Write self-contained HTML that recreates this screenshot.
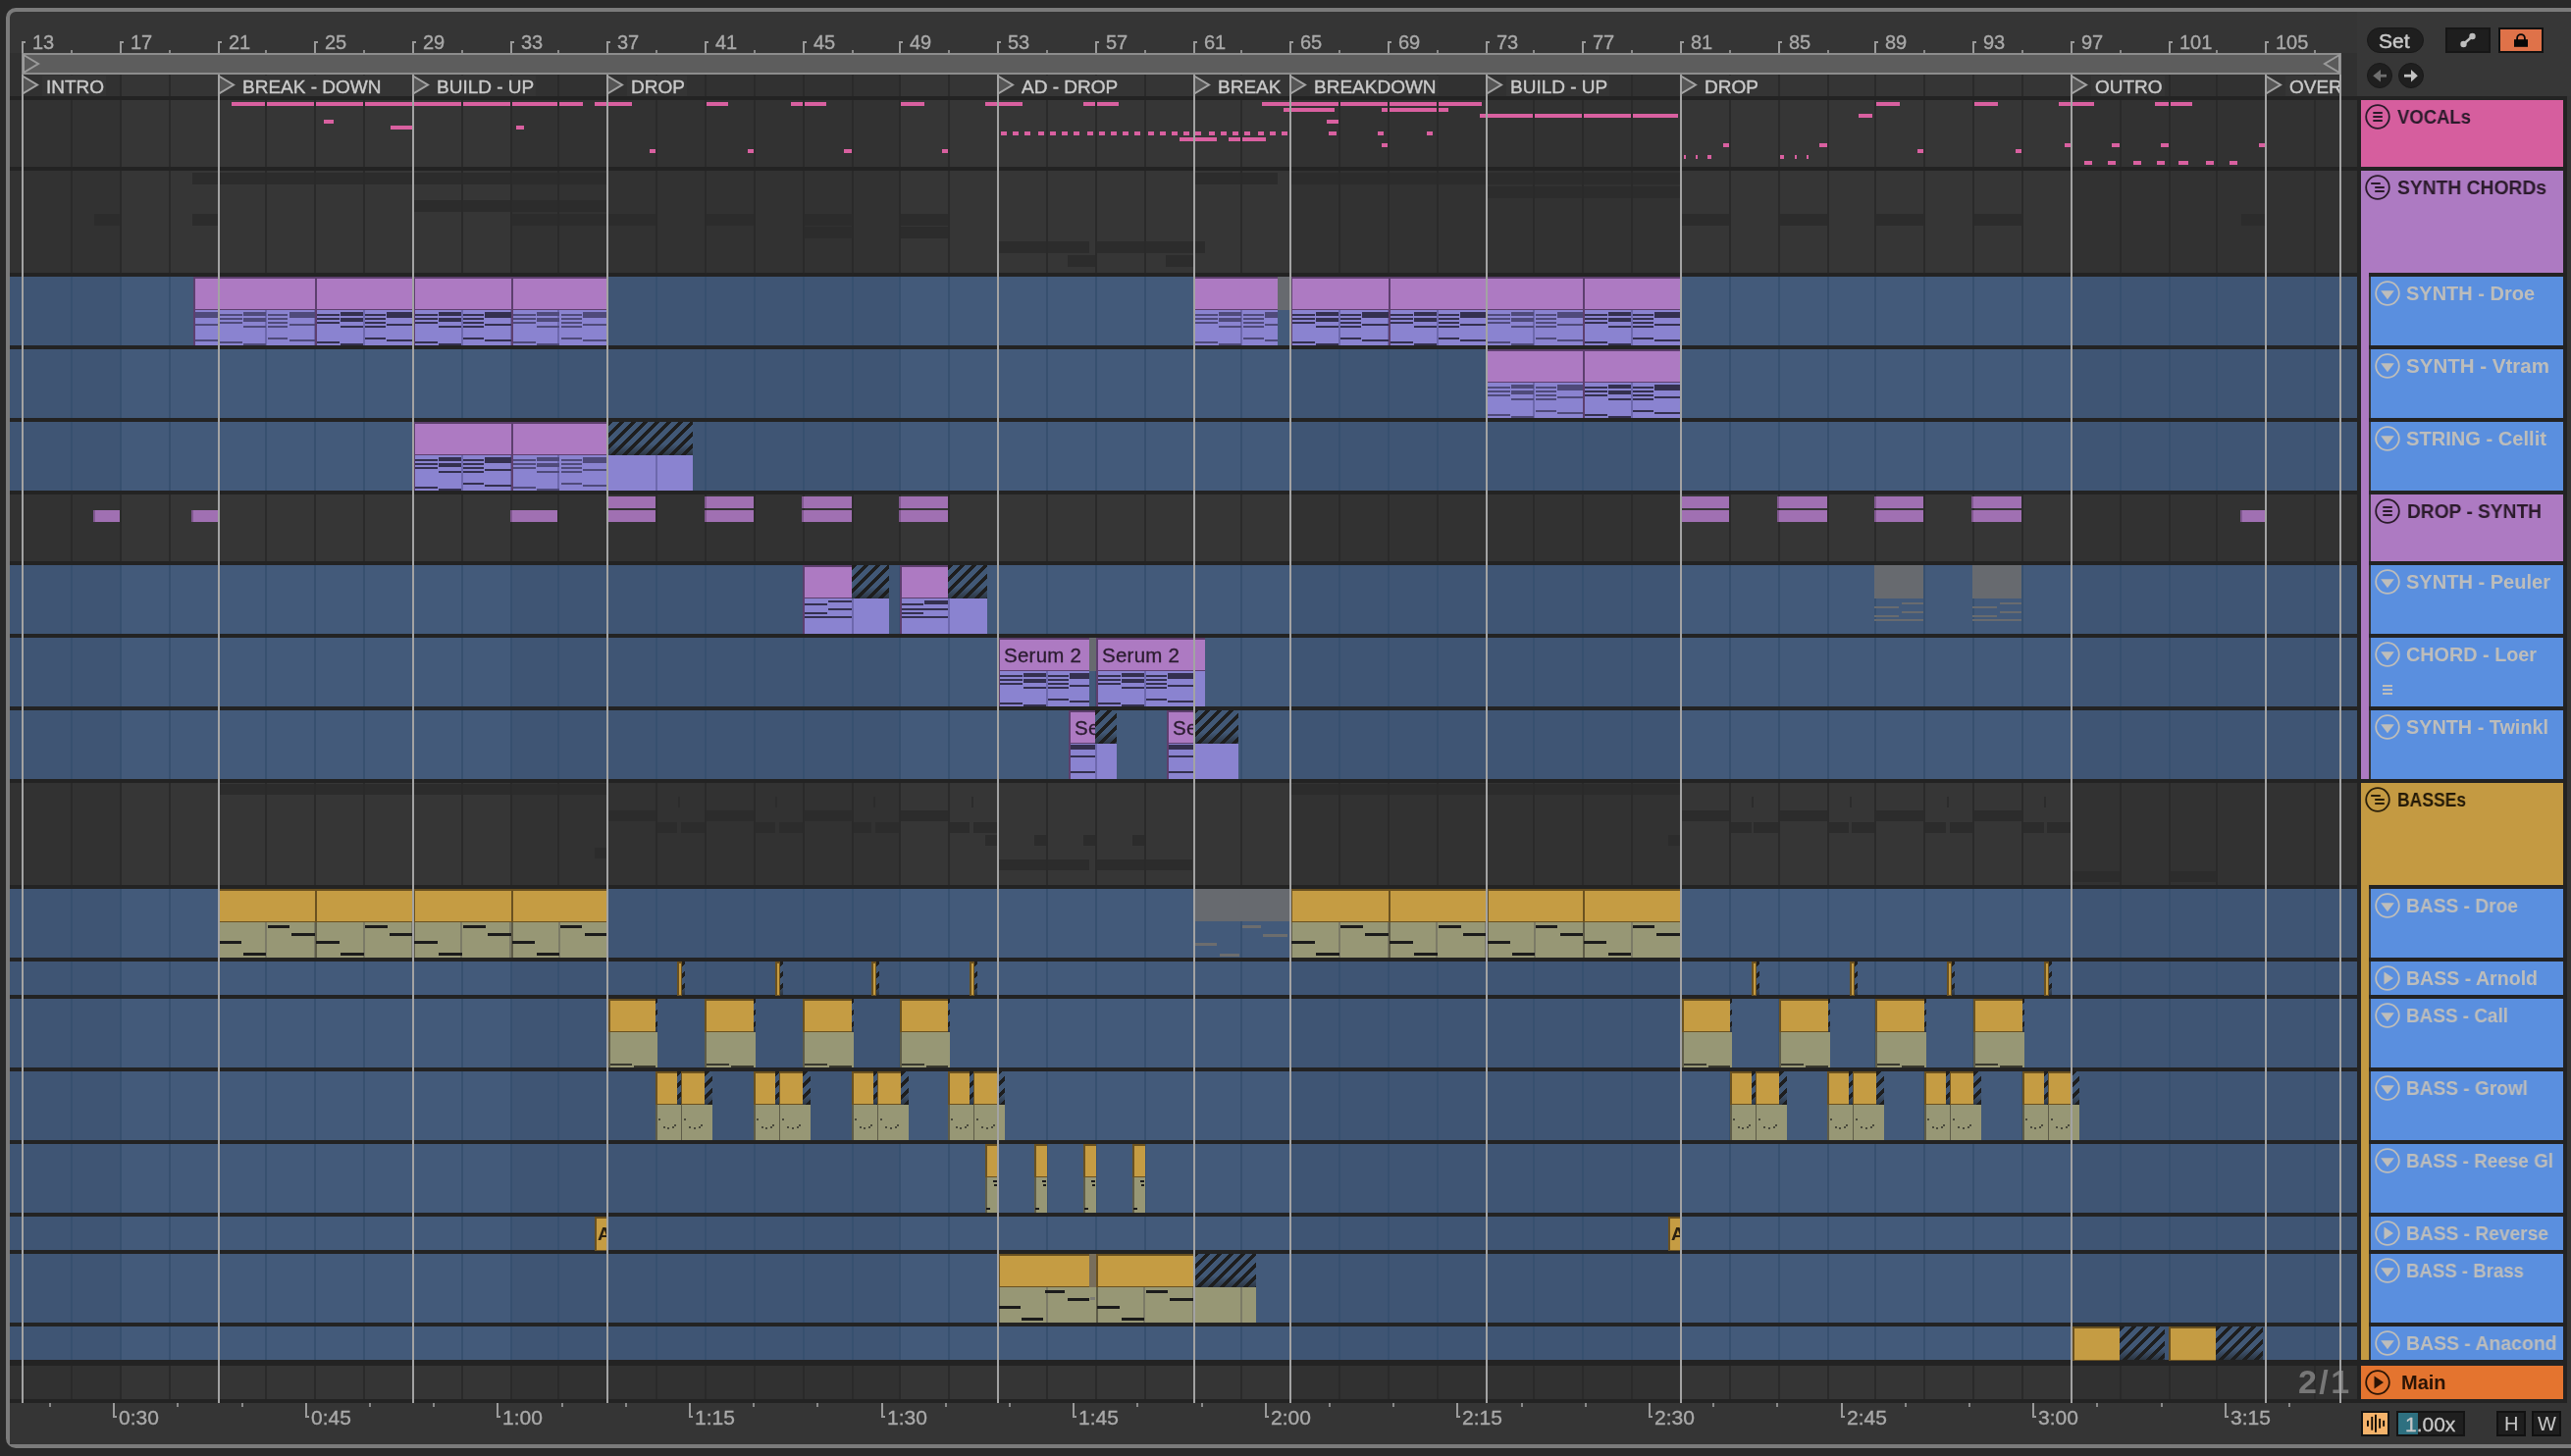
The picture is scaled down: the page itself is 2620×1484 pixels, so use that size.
<!DOCTYPE html><html><head><meta charset="utf-8"><style>html,body{margin:0;padding:0;width:2620px;height:1484px;overflow:hidden;background:#292929;}#root{position:relative;width:2620px;height:1484px;overflow:hidden;font-family:"Liberation Sans",sans-serif;}#root div,#root span,#root svg{position:absolute;}#root span{white-space:nowrap;line-height:1;will-change:transform;}.h{background:repeating-linear-gradient(135deg,#1e1e1e 0 4.3px,#415876 4.3px 8.5px);}</style></head><body><div id="root">
<div style="left:6px;top:8px;width:2634px;height:1468px;background:#353535;box-sizing:border-box;border:4px solid #7b7b7b;border-radius:10px;"></div>
<div style="left:10px;top:54px;width:12px;height:44px;background:#303030;"></div>
<div style="left:22px;top:76px;width:2380px;height:22px;background:#333333;"></div>
<div style="left:22px;top:76px;width:100px;height:22px;background:#313131;"></div>
<div style="left:122px;top:76px;width:398px;height:22px;background:#353535;"></div>
<div style="left:520px;top:76px;width:396px;height:22px;background:#313131;"></div>
<div style="left:916px;top:76px;width:398px;height:22px;background:#353535;"></div>
<div style="left:1314px;top:76px;width:398px;height:22px;background:#313131;"></div>
<div style="left:1712px;top:76px;width:398px;height:22px;background:#353535;"></div>
<div style="left:2110px;top:76px;width:292px;height:22px;background:#313131;"></div>
<div style="left:2386px;top:54px;width:16px;height:44px;background:#313131;"></div>
<div style="left:2402px;top:12px;width:218px;height:86px;background:#373737;"></div>
<div style="left:10px;top:98px;width:2610px;height:4px;background:#232323;"></div>
<div style="left:10px;top:102px;width:112px;height:68px;background:#323232;"></div>
<div style="left:122px;top:102px;width:398px;height:68px;background:#363636;"></div>
<div style="left:520px;top:102px;width:396px;height:68px;background:#323232;"></div>
<div style="left:916px;top:102px;width:398px;height:68px;background:#363636;"></div>
<div style="left:1314px;top:102px;width:398px;height:68px;background:#323232;"></div>
<div style="left:1712px;top:102px;width:398px;height:68px;background:#363636;"></div>
<div style="left:2110px;top:102px;width:292px;height:68px;background:#323232;"></div>
<div style="left:10px;top:174px;width:112px;height:104px;background:#323232;"></div>
<div style="left:122px;top:174px;width:398px;height:104px;background:#363636;"></div>
<div style="left:520px;top:174px;width:396px;height:104px;background:#323232;"></div>
<div style="left:916px;top:174px;width:398px;height:104px;background:#363636;"></div>
<div style="left:1314px;top:174px;width:398px;height:104px;background:#323232;"></div>
<div style="left:1712px;top:174px;width:398px;height:104px;background:#363636;"></div>
<div style="left:2110px;top:174px;width:292px;height:104px;background:#323232;"></div>
<div style="left:10px;top:282px;width:112px;height:70px;background:#3f5574;"></div>
<div style="left:122px;top:282px;width:398px;height:70px;background:#435a7a;"></div>
<div style="left:520px;top:282px;width:396px;height:70px;background:#3f5574;"></div>
<div style="left:916px;top:282px;width:398px;height:70px;background:#435a7a;"></div>
<div style="left:1314px;top:282px;width:398px;height:70px;background:#3f5574;"></div>
<div style="left:1712px;top:282px;width:398px;height:70px;background:#435a7a;"></div>
<div style="left:2110px;top:282px;width:292px;height:70px;background:#3f5574;"></div>
<div style="left:10px;top:356px;width:112px;height:70px;background:#3f5574;"></div>
<div style="left:122px;top:356px;width:398px;height:70px;background:#435a7a;"></div>
<div style="left:520px;top:356px;width:396px;height:70px;background:#3f5574;"></div>
<div style="left:916px;top:356px;width:398px;height:70px;background:#435a7a;"></div>
<div style="left:1314px;top:356px;width:398px;height:70px;background:#3f5574;"></div>
<div style="left:1712px;top:356px;width:398px;height:70px;background:#435a7a;"></div>
<div style="left:2110px;top:356px;width:292px;height:70px;background:#3f5574;"></div>
<div style="left:10px;top:430px;width:112px;height:70px;background:#3f5574;"></div>
<div style="left:122px;top:430px;width:398px;height:70px;background:#435a7a;"></div>
<div style="left:520px;top:430px;width:396px;height:70px;background:#3f5574;"></div>
<div style="left:916px;top:430px;width:398px;height:70px;background:#435a7a;"></div>
<div style="left:1314px;top:430px;width:398px;height:70px;background:#3f5574;"></div>
<div style="left:1712px;top:430px;width:398px;height:70px;background:#435a7a;"></div>
<div style="left:2110px;top:430px;width:292px;height:70px;background:#3f5574;"></div>
<div style="left:10px;top:504px;width:112px;height:68px;background:#323232;"></div>
<div style="left:122px;top:504px;width:398px;height:68px;background:#363636;"></div>
<div style="left:520px;top:504px;width:396px;height:68px;background:#323232;"></div>
<div style="left:916px;top:504px;width:398px;height:68px;background:#363636;"></div>
<div style="left:1314px;top:504px;width:398px;height:68px;background:#323232;"></div>
<div style="left:1712px;top:504px;width:398px;height:68px;background:#363636;"></div>
<div style="left:2110px;top:504px;width:292px;height:68px;background:#323232;"></div>
<div style="left:10px;top:576px;width:112px;height:70px;background:#3f5574;"></div>
<div style="left:122px;top:576px;width:398px;height:70px;background:#435a7a;"></div>
<div style="left:520px;top:576px;width:396px;height:70px;background:#3f5574;"></div>
<div style="left:916px;top:576px;width:398px;height:70px;background:#435a7a;"></div>
<div style="left:1314px;top:576px;width:398px;height:70px;background:#3f5574;"></div>
<div style="left:1712px;top:576px;width:398px;height:70px;background:#435a7a;"></div>
<div style="left:2110px;top:576px;width:292px;height:70px;background:#3f5574;"></div>
<div style="left:10px;top:650px;width:112px;height:70px;background:#3f5574;"></div>
<div style="left:122px;top:650px;width:398px;height:70px;background:#435a7a;"></div>
<div style="left:520px;top:650px;width:396px;height:70px;background:#3f5574;"></div>
<div style="left:916px;top:650px;width:398px;height:70px;background:#435a7a;"></div>
<div style="left:1314px;top:650px;width:398px;height:70px;background:#3f5574;"></div>
<div style="left:1712px;top:650px;width:398px;height:70px;background:#435a7a;"></div>
<div style="left:2110px;top:650px;width:292px;height:70px;background:#3f5574;"></div>
<div style="left:10px;top:724px;width:112px;height:70px;background:#3f5574;"></div>
<div style="left:122px;top:724px;width:398px;height:70px;background:#435a7a;"></div>
<div style="left:520px;top:724px;width:396px;height:70px;background:#3f5574;"></div>
<div style="left:916px;top:724px;width:398px;height:70px;background:#435a7a;"></div>
<div style="left:1314px;top:724px;width:398px;height:70px;background:#3f5574;"></div>
<div style="left:1712px;top:724px;width:398px;height:70px;background:#435a7a;"></div>
<div style="left:2110px;top:724px;width:292px;height:70px;background:#3f5574;"></div>
<div style="left:10px;top:798px;width:112px;height:104px;background:#323232;"></div>
<div style="left:122px;top:798px;width:398px;height:104px;background:#363636;"></div>
<div style="left:520px;top:798px;width:396px;height:104px;background:#323232;"></div>
<div style="left:916px;top:798px;width:398px;height:104px;background:#363636;"></div>
<div style="left:1314px;top:798px;width:398px;height:104px;background:#323232;"></div>
<div style="left:1712px;top:798px;width:398px;height:104px;background:#363636;"></div>
<div style="left:2110px;top:798px;width:292px;height:104px;background:#323232;"></div>
<div style="left:10px;top:906px;width:112px;height:70px;background:#3f5574;"></div>
<div style="left:122px;top:906px;width:398px;height:70px;background:#435a7a;"></div>
<div style="left:520px;top:906px;width:396px;height:70px;background:#3f5574;"></div>
<div style="left:916px;top:906px;width:398px;height:70px;background:#435a7a;"></div>
<div style="left:1314px;top:906px;width:398px;height:70px;background:#3f5574;"></div>
<div style="left:1712px;top:906px;width:398px;height:70px;background:#435a7a;"></div>
<div style="left:2110px;top:906px;width:292px;height:70px;background:#3f5574;"></div>
<div style="left:10px;top:980px;width:112px;height:34px;background:#3f5574;"></div>
<div style="left:122px;top:980px;width:398px;height:34px;background:#435a7a;"></div>
<div style="left:520px;top:980px;width:396px;height:34px;background:#3f5574;"></div>
<div style="left:916px;top:980px;width:398px;height:34px;background:#435a7a;"></div>
<div style="left:1314px;top:980px;width:398px;height:34px;background:#3f5574;"></div>
<div style="left:1712px;top:980px;width:398px;height:34px;background:#435a7a;"></div>
<div style="left:2110px;top:980px;width:292px;height:34px;background:#3f5574;"></div>
<div style="left:10px;top:1018px;width:112px;height:70px;background:#3f5574;"></div>
<div style="left:122px;top:1018px;width:398px;height:70px;background:#435a7a;"></div>
<div style="left:520px;top:1018px;width:396px;height:70px;background:#3f5574;"></div>
<div style="left:916px;top:1018px;width:398px;height:70px;background:#435a7a;"></div>
<div style="left:1314px;top:1018px;width:398px;height:70px;background:#3f5574;"></div>
<div style="left:1712px;top:1018px;width:398px;height:70px;background:#435a7a;"></div>
<div style="left:2110px;top:1018px;width:292px;height:70px;background:#3f5574;"></div>
<div style="left:10px;top:1092px;width:112px;height:70px;background:#3f5574;"></div>
<div style="left:122px;top:1092px;width:398px;height:70px;background:#435a7a;"></div>
<div style="left:520px;top:1092px;width:396px;height:70px;background:#3f5574;"></div>
<div style="left:916px;top:1092px;width:398px;height:70px;background:#435a7a;"></div>
<div style="left:1314px;top:1092px;width:398px;height:70px;background:#3f5574;"></div>
<div style="left:1712px;top:1092px;width:398px;height:70px;background:#435a7a;"></div>
<div style="left:2110px;top:1092px;width:292px;height:70px;background:#3f5574;"></div>
<div style="left:10px;top:1166px;width:112px;height:70px;background:#3f5574;"></div>
<div style="left:122px;top:1166px;width:398px;height:70px;background:#435a7a;"></div>
<div style="left:520px;top:1166px;width:396px;height:70px;background:#3f5574;"></div>
<div style="left:916px;top:1166px;width:398px;height:70px;background:#435a7a;"></div>
<div style="left:1314px;top:1166px;width:398px;height:70px;background:#3f5574;"></div>
<div style="left:1712px;top:1166px;width:398px;height:70px;background:#435a7a;"></div>
<div style="left:2110px;top:1166px;width:292px;height:70px;background:#3f5574;"></div>
<div style="left:10px;top:1240px;width:112px;height:34px;background:#3f5574;"></div>
<div style="left:122px;top:1240px;width:398px;height:34px;background:#435a7a;"></div>
<div style="left:520px;top:1240px;width:396px;height:34px;background:#3f5574;"></div>
<div style="left:916px;top:1240px;width:398px;height:34px;background:#435a7a;"></div>
<div style="left:1314px;top:1240px;width:398px;height:34px;background:#3f5574;"></div>
<div style="left:1712px;top:1240px;width:398px;height:34px;background:#435a7a;"></div>
<div style="left:2110px;top:1240px;width:292px;height:34px;background:#3f5574;"></div>
<div style="left:10px;top:1278px;width:112px;height:70px;background:#3f5574;"></div>
<div style="left:122px;top:1278px;width:398px;height:70px;background:#435a7a;"></div>
<div style="left:520px;top:1278px;width:396px;height:70px;background:#3f5574;"></div>
<div style="left:916px;top:1278px;width:398px;height:70px;background:#435a7a;"></div>
<div style="left:1314px;top:1278px;width:398px;height:70px;background:#3f5574;"></div>
<div style="left:1712px;top:1278px;width:398px;height:70px;background:#435a7a;"></div>
<div style="left:2110px;top:1278px;width:292px;height:70px;background:#3f5574;"></div>
<div style="left:10px;top:1352px;width:112px;height:34px;background:#3f5574;"></div>
<div style="left:122px;top:1352px;width:398px;height:34px;background:#435a7a;"></div>
<div style="left:520px;top:1352px;width:396px;height:34px;background:#3f5574;"></div>
<div style="left:916px;top:1352px;width:398px;height:34px;background:#435a7a;"></div>
<div style="left:1314px;top:1352px;width:398px;height:34px;background:#3f5574;"></div>
<div style="left:1712px;top:1352px;width:398px;height:34px;background:#435a7a;"></div>
<div style="left:2110px;top:1352px;width:292px;height:34px;background:#3f5574;"></div>
<div style="left:10px;top:170px;width:2610px;height:4px;background:#232323;"></div>
<div style="left:10px;top:278px;width:2610px;height:4px;background:#232323;"></div>
<div style="left:10px;top:352px;width:2610px;height:4px;background:#232323;"></div>
<div style="left:10px;top:426px;width:2610px;height:4px;background:#232323;"></div>
<div style="left:10px;top:500px;width:2610px;height:4px;background:#232323;"></div>
<div style="left:10px;top:572px;width:2610px;height:4px;background:#232323;"></div>
<div style="left:10px;top:646px;width:2610px;height:4px;background:#232323;"></div>
<div style="left:10px;top:720px;width:2610px;height:4px;background:#232323;"></div>
<div style="left:10px;top:794px;width:2610px;height:4px;background:#232323;"></div>
<div style="left:10px;top:902px;width:2610px;height:4px;background:#232323;"></div>
<div style="left:10px;top:976px;width:2610px;height:4px;background:#232323;"></div>
<div style="left:10px;top:1014px;width:2610px;height:4px;background:#232323;"></div>
<div style="left:10px;top:1088px;width:2610px;height:4px;background:#232323;"></div>
<div style="left:10px;top:1162px;width:2610px;height:4px;background:#232323;"></div>
<div style="left:10px;top:1236px;width:2610px;height:4px;background:#232323;"></div>
<div style="left:10px;top:1274px;width:2610px;height:4px;background:#232323;"></div>
<div style="left:10px;top:1348px;width:2610px;height:4px;background:#232323;"></div>
<div style="left:10px;top:1386px;width:2610px;height:6px;background:#232323;"></div>
<div style="left:10px;top:1392px;width:112px;height:34px;background:#313131;"></div>
<div style="left:122px;top:1392px;width:398px;height:34px;background:#353535;"></div>
<div style="left:520px;top:1392px;width:396px;height:34px;background:#313131;"></div>
<div style="left:916px;top:1392px;width:398px;height:34px;background:#353535;"></div>
<div style="left:1314px;top:1392px;width:398px;height:34px;background:#313131;"></div>
<div style="left:1712px;top:1392px;width:398px;height:34px;background:#353535;"></div>
<div style="left:2110px;top:1392px;width:292px;height:34px;background:#313131;"></div>
<div style="left:10px;top:1426px;width:2610px;height:4px;background:#232323;"></div>
<div style="left:2402px;top:98px;width:4px;height:1332px;background:#232323;"></div>
<div style="left:2612px;top:98px;width:4px;height:1332px;background:#232323;"></div>
<div style="left:2616px;top:98px;width:4px;height:1332px;background:#353535;"></div>
<div style="left:22px;top:76px;width:2px;height:22px;background:#2a2a2a;"></div>
<div style="left:72px;top:76px;width:2px;height:22px;background:#2a2a2a;"></div>
<div style="left:122px;top:76px;width:2px;height:22px;background:#2a2a2a;"></div>
<div style="left:172px;top:76px;width:2px;height:22px;background:#2a2a2a;"></div>
<div style="left:222px;top:76px;width:2px;height:22px;background:#2a2a2a;"></div>
<div style="left:270px;top:76px;width:2px;height:22px;background:#2a2a2a;"></div>
<div style="left:320px;top:76px;width:2px;height:22px;background:#2a2a2a;"></div>
<div style="left:370px;top:76px;width:2px;height:22px;background:#2a2a2a;"></div>
<div style="left:420px;top:76px;width:2px;height:22px;background:#2a2a2a;"></div>
<div style="left:470px;top:76px;width:2px;height:22px;background:#2a2a2a;"></div>
<div style="left:520px;top:76px;width:2px;height:22px;background:#2a2a2a;"></div>
<div style="left:568px;top:76px;width:2px;height:22px;background:#2a2a2a;"></div>
<div style="left:618px;top:76px;width:2px;height:22px;background:#2a2a2a;"></div>
<div style="left:668px;top:76px;width:2px;height:22px;background:#2a2a2a;"></div>
<div style="left:718px;top:76px;width:2px;height:22px;background:#2a2a2a;"></div>
<div style="left:768px;top:76px;width:2px;height:22px;background:#2a2a2a;"></div>
<div style="left:818px;top:76px;width:2px;height:22px;background:#2a2a2a;"></div>
<div style="left:868px;top:76px;width:2px;height:22px;background:#2a2a2a;"></div>
<div style="left:916px;top:76px;width:2px;height:22px;background:#2a2a2a;"></div>
<div style="left:966px;top:76px;width:2px;height:22px;background:#2a2a2a;"></div>
<div style="left:1016px;top:76px;width:2px;height:22px;background:#2a2a2a;"></div>
<div style="left:1066px;top:76px;width:2px;height:22px;background:#2a2a2a;"></div>
<div style="left:1116px;top:76px;width:2px;height:22px;background:#2a2a2a;"></div>
<div style="left:1166px;top:76px;width:2px;height:22px;background:#2a2a2a;"></div>
<div style="left:1216px;top:76px;width:2px;height:22px;background:#2a2a2a;"></div>
<div style="left:1264px;top:76px;width:2px;height:22px;background:#2a2a2a;"></div>
<div style="left:1314px;top:76px;width:2px;height:22px;background:#2a2a2a;"></div>
<div style="left:1364px;top:76px;width:2px;height:22px;background:#2a2a2a;"></div>
<div style="left:1414px;top:76px;width:2px;height:22px;background:#2a2a2a;"></div>
<div style="left:1464px;top:76px;width:2px;height:22px;background:#2a2a2a;"></div>
<div style="left:1514px;top:76px;width:2px;height:22px;background:#2a2a2a;"></div>
<div style="left:1562px;top:76px;width:2px;height:22px;background:#2a2a2a;"></div>
<div style="left:1612px;top:76px;width:2px;height:22px;background:#2a2a2a;"></div>
<div style="left:1662px;top:76px;width:2px;height:22px;background:#2a2a2a;"></div>
<div style="left:1712px;top:76px;width:2px;height:22px;background:#2a2a2a;"></div>
<div style="left:1762px;top:76px;width:2px;height:22px;background:#2a2a2a;"></div>
<div style="left:1812px;top:76px;width:2px;height:22px;background:#2a2a2a;"></div>
<div style="left:1862px;top:76px;width:2px;height:22px;background:#2a2a2a;"></div>
<div style="left:1910px;top:76px;width:2px;height:22px;background:#2a2a2a;"></div>
<div style="left:1960px;top:76px;width:2px;height:22px;background:#2a2a2a;"></div>
<div style="left:2010px;top:76px;width:2px;height:22px;background:#2a2a2a;"></div>
<div style="left:2060px;top:76px;width:2px;height:22px;background:#2a2a2a;"></div>
<div style="left:2110px;top:76px;width:2px;height:22px;background:#2a2a2a;"></div>
<div style="left:2160px;top:76px;width:2px;height:22px;background:#2a2a2a;"></div>
<div style="left:2210px;top:76px;width:2px;height:22px;background:#2a2a2a;"></div>
<div style="left:2258px;top:76px;width:2px;height:22px;background:#2a2a2a;"></div>
<div style="left:2308px;top:76px;width:2px;height:22px;background:#2a2a2a;"></div>
<div style="left:2358px;top:76px;width:2px;height:22px;background:#2a2a2a;"></div>
<div style="left:22px;top:282px;width:2px;height:70px;background:#37506f;"></div>
<div style="left:72px;top:282px;width:2px;height:70px;background:#37506f;"></div>
<div style="left:122px;top:282px;width:2px;height:70px;background:#37506f;"></div>
<div style="left:172px;top:282px;width:2px;height:70px;background:#37506f;"></div>
<div style="left:222px;top:282px;width:2px;height:70px;background:#37506f;"></div>
<div style="left:270px;top:282px;width:2px;height:70px;background:#37506f;"></div>
<div style="left:320px;top:282px;width:2px;height:70px;background:#37506f;"></div>
<div style="left:370px;top:282px;width:2px;height:70px;background:#37506f;"></div>
<div style="left:420px;top:282px;width:2px;height:70px;background:#37506f;"></div>
<div style="left:470px;top:282px;width:2px;height:70px;background:#37506f;"></div>
<div style="left:520px;top:282px;width:2px;height:70px;background:#37506f;"></div>
<div style="left:568px;top:282px;width:2px;height:70px;background:#37506f;"></div>
<div style="left:618px;top:282px;width:2px;height:70px;background:#37506f;"></div>
<div style="left:668px;top:282px;width:2px;height:70px;background:#37506f;"></div>
<div style="left:718px;top:282px;width:2px;height:70px;background:#37506f;"></div>
<div style="left:768px;top:282px;width:2px;height:70px;background:#37506f;"></div>
<div style="left:818px;top:282px;width:2px;height:70px;background:#37506f;"></div>
<div style="left:868px;top:282px;width:2px;height:70px;background:#37506f;"></div>
<div style="left:916px;top:282px;width:2px;height:70px;background:#37506f;"></div>
<div style="left:966px;top:282px;width:2px;height:70px;background:#37506f;"></div>
<div style="left:1016px;top:282px;width:2px;height:70px;background:#37506f;"></div>
<div style="left:1066px;top:282px;width:2px;height:70px;background:#37506f;"></div>
<div style="left:1116px;top:282px;width:2px;height:70px;background:#37506f;"></div>
<div style="left:1166px;top:282px;width:2px;height:70px;background:#37506f;"></div>
<div style="left:1216px;top:282px;width:2px;height:70px;background:#37506f;"></div>
<div style="left:1264px;top:282px;width:2px;height:70px;background:#37506f;"></div>
<div style="left:1314px;top:282px;width:2px;height:70px;background:#37506f;"></div>
<div style="left:1364px;top:282px;width:2px;height:70px;background:#37506f;"></div>
<div style="left:1414px;top:282px;width:2px;height:70px;background:#37506f;"></div>
<div style="left:1464px;top:282px;width:2px;height:70px;background:#37506f;"></div>
<div style="left:1514px;top:282px;width:2px;height:70px;background:#37506f;"></div>
<div style="left:1562px;top:282px;width:2px;height:70px;background:#37506f;"></div>
<div style="left:1612px;top:282px;width:2px;height:70px;background:#37506f;"></div>
<div style="left:1662px;top:282px;width:2px;height:70px;background:#37506f;"></div>
<div style="left:1712px;top:282px;width:2px;height:70px;background:#37506f;"></div>
<div style="left:1762px;top:282px;width:2px;height:70px;background:#37506f;"></div>
<div style="left:1812px;top:282px;width:2px;height:70px;background:#37506f;"></div>
<div style="left:1862px;top:282px;width:2px;height:70px;background:#37506f;"></div>
<div style="left:1910px;top:282px;width:2px;height:70px;background:#37506f;"></div>
<div style="left:1960px;top:282px;width:2px;height:70px;background:#37506f;"></div>
<div style="left:2010px;top:282px;width:2px;height:70px;background:#37506f;"></div>
<div style="left:2060px;top:282px;width:2px;height:70px;background:#37506f;"></div>
<div style="left:2110px;top:282px;width:2px;height:70px;background:#37506f;"></div>
<div style="left:2160px;top:282px;width:2px;height:70px;background:#37506f;"></div>
<div style="left:2210px;top:282px;width:2px;height:70px;background:#37506f;"></div>
<div style="left:2258px;top:282px;width:2px;height:70px;background:#37506f;"></div>
<div style="left:2308px;top:282px;width:2px;height:70px;background:#37506f;"></div>
<div style="left:2358px;top:282px;width:2px;height:70px;background:#37506f;"></div>
<div style="left:22px;top:356px;width:2px;height:70px;background:#37506f;"></div>
<div style="left:72px;top:356px;width:2px;height:70px;background:#37506f;"></div>
<div style="left:122px;top:356px;width:2px;height:70px;background:#37506f;"></div>
<div style="left:172px;top:356px;width:2px;height:70px;background:#37506f;"></div>
<div style="left:222px;top:356px;width:2px;height:70px;background:#37506f;"></div>
<div style="left:270px;top:356px;width:2px;height:70px;background:#37506f;"></div>
<div style="left:320px;top:356px;width:2px;height:70px;background:#37506f;"></div>
<div style="left:370px;top:356px;width:2px;height:70px;background:#37506f;"></div>
<div style="left:420px;top:356px;width:2px;height:70px;background:#37506f;"></div>
<div style="left:470px;top:356px;width:2px;height:70px;background:#37506f;"></div>
<div style="left:520px;top:356px;width:2px;height:70px;background:#37506f;"></div>
<div style="left:568px;top:356px;width:2px;height:70px;background:#37506f;"></div>
<div style="left:618px;top:356px;width:2px;height:70px;background:#37506f;"></div>
<div style="left:668px;top:356px;width:2px;height:70px;background:#37506f;"></div>
<div style="left:718px;top:356px;width:2px;height:70px;background:#37506f;"></div>
<div style="left:768px;top:356px;width:2px;height:70px;background:#37506f;"></div>
<div style="left:818px;top:356px;width:2px;height:70px;background:#37506f;"></div>
<div style="left:868px;top:356px;width:2px;height:70px;background:#37506f;"></div>
<div style="left:916px;top:356px;width:2px;height:70px;background:#37506f;"></div>
<div style="left:966px;top:356px;width:2px;height:70px;background:#37506f;"></div>
<div style="left:1016px;top:356px;width:2px;height:70px;background:#37506f;"></div>
<div style="left:1066px;top:356px;width:2px;height:70px;background:#37506f;"></div>
<div style="left:1116px;top:356px;width:2px;height:70px;background:#37506f;"></div>
<div style="left:1166px;top:356px;width:2px;height:70px;background:#37506f;"></div>
<div style="left:1216px;top:356px;width:2px;height:70px;background:#37506f;"></div>
<div style="left:1264px;top:356px;width:2px;height:70px;background:#37506f;"></div>
<div style="left:1314px;top:356px;width:2px;height:70px;background:#37506f;"></div>
<div style="left:1364px;top:356px;width:2px;height:70px;background:#37506f;"></div>
<div style="left:1414px;top:356px;width:2px;height:70px;background:#37506f;"></div>
<div style="left:1464px;top:356px;width:2px;height:70px;background:#37506f;"></div>
<div style="left:1514px;top:356px;width:2px;height:70px;background:#37506f;"></div>
<div style="left:1562px;top:356px;width:2px;height:70px;background:#37506f;"></div>
<div style="left:1612px;top:356px;width:2px;height:70px;background:#37506f;"></div>
<div style="left:1662px;top:356px;width:2px;height:70px;background:#37506f;"></div>
<div style="left:1712px;top:356px;width:2px;height:70px;background:#37506f;"></div>
<div style="left:1762px;top:356px;width:2px;height:70px;background:#37506f;"></div>
<div style="left:1812px;top:356px;width:2px;height:70px;background:#37506f;"></div>
<div style="left:1862px;top:356px;width:2px;height:70px;background:#37506f;"></div>
<div style="left:1910px;top:356px;width:2px;height:70px;background:#37506f;"></div>
<div style="left:1960px;top:356px;width:2px;height:70px;background:#37506f;"></div>
<div style="left:2010px;top:356px;width:2px;height:70px;background:#37506f;"></div>
<div style="left:2060px;top:356px;width:2px;height:70px;background:#37506f;"></div>
<div style="left:2110px;top:356px;width:2px;height:70px;background:#37506f;"></div>
<div style="left:2160px;top:356px;width:2px;height:70px;background:#37506f;"></div>
<div style="left:2210px;top:356px;width:2px;height:70px;background:#37506f;"></div>
<div style="left:2258px;top:356px;width:2px;height:70px;background:#37506f;"></div>
<div style="left:2308px;top:356px;width:2px;height:70px;background:#37506f;"></div>
<div style="left:2358px;top:356px;width:2px;height:70px;background:#37506f;"></div>
<div style="left:22px;top:430px;width:2px;height:70px;background:#37506f;"></div>
<div style="left:72px;top:430px;width:2px;height:70px;background:#37506f;"></div>
<div style="left:122px;top:430px;width:2px;height:70px;background:#37506f;"></div>
<div style="left:172px;top:430px;width:2px;height:70px;background:#37506f;"></div>
<div style="left:222px;top:430px;width:2px;height:70px;background:#37506f;"></div>
<div style="left:270px;top:430px;width:2px;height:70px;background:#37506f;"></div>
<div style="left:320px;top:430px;width:2px;height:70px;background:#37506f;"></div>
<div style="left:370px;top:430px;width:2px;height:70px;background:#37506f;"></div>
<div style="left:420px;top:430px;width:2px;height:70px;background:#37506f;"></div>
<div style="left:470px;top:430px;width:2px;height:70px;background:#37506f;"></div>
<div style="left:520px;top:430px;width:2px;height:70px;background:#37506f;"></div>
<div style="left:568px;top:430px;width:2px;height:70px;background:#37506f;"></div>
<div style="left:618px;top:430px;width:2px;height:70px;background:#37506f;"></div>
<div style="left:668px;top:430px;width:2px;height:70px;background:#37506f;"></div>
<div style="left:718px;top:430px;width:2px;height:70px;background:#37506f;"></div>
<div style="left:768px;top:430px;width:2px;height:70px;background:#37506f;"></div>
<div style="left:818px;top:430px;width:2px;height:70px;background:#37506f;"></div>
<div style="left:868px;top:430px;width:2px;height:70px;background:#37506f;"></div>
<div style="left:916px;top:430px;width:2px;height:70px;background:#37506f;"></div>
<div style="left:966px;top:430px;width:2px;height:70px;background:#37506f;"></div>
<div style="left:1016px;top:430px;width:2px;height:70px;background:#37506f;"></div>
<div style="left:1066px;top:430px;width:2px;height:70px;background:#37506f;"></div>
<div style="left:1116px;top:430px;width:2px;height:70px;background:#37506f;"></div>
<div style="left:1166px;top:430px;width:2px;height:70px;background:#37506f;"></div>
<div style="left:1216px;top:430px;width:2px;height:70px;background:#37506f;"></div>
<div style="left:1264px;top:430px;width:2px;height:70px;background:#37506f;"></div>
<div style="left:1314px;top:430px;width:2px;height:70px;background:#37506f;"></div>
<div style="left:1364px;top:430px;width:2px;height:70px;background:#37506f;"></div>
<div style="left:1414px;top:430px;width:2px;height:70px;background:#37506f;"></div>
<div style="left:1464px;top:430px;width:2px;height:70px;background:#37506f;"></div>
<div style="left:1514px;top:430px;width:2px;height:70px;background:#37506f;"></div>
<div style="left:1562px;top:430px;width:2px;height:70px;background:#37506f;"></div>
<div style="left:1612px;top:430px;width:2px;height:70px;background:#37506f;"></div>
<div style="left:1662px;top:430px;width:2px;height:70px;background:#37506f;"></div>
<div style="left:1712px;top:430px;width:2px;height:70px;background:#37506f;"></div>
<div style="left:1762px;top:430px;width:2px;height:70px;background:#37506f;"></div>
<div style="left:1812px;top:430px;width:2px;height:70px;background:#37506f;"></div>
<div style="left:1862px;top:430px;width:2px;height:70px;background:#37506f;"></div>
<div style="left:1910px;top:430px;width:2px;height:70px;background:#37506f;"></div>
<div style="left:1960px;top:430px;width:2px;height:70px;background:#37506f;"></div>
<div style="left:2010px;top:430px;width:2px;height:70px;background:#37506f;"></div>
<div style="left:2060px;top:430px;width:2px;height:70px;background:#37506f;"></div>
<div style="left:2110px;top:430px;width:2px;height:70px;background:#37506f;"></div>
<div style="left:2160px;top:430px;width:2px;height:70px;background:#37506f;"></div>
<div style="left:2210px;top:430px;width:2px;height:70px;background:#37506f;"></div>
<div style="left:2258px;top:430px;width:2px;height:70px;background:#37506f;"></div>
<div style="left:2308px;top:430px;width:2px;height:70px;background:#37506f;"></div>
<div style="left:2358px;top:430px;width:2px;height:70px;background:#37506f;"></div>
<div style="left:22px;top:576px;width:2px;height:70px;background:#37506f;"></div>
<div style="left:72px;top:576px;width:2px;height:70px;background:#37506f;"></div>
<div style="left:122px;top:576px;width:2px;height:70px;background:#37506f;"></div>
<div style="left:172px;top:576px;width:2px;height:70px;background:#37506f;"></div>
<div style="left:222px;top:576px;width:2px;height:70px;background:#37506f;"></div>
<div style="left:270px;top:576px;width:2px;height:70px;background:#37506f;"></div>
<div style="left:320px;top:576px;width:2px;height:70px;background:#37506f;"></div>
<div style="left:370px;top:576px;width:2px;height:70px;background:#37506f;"></div>
<div style="left:420px;top:576px;width:2px;height:70px;background:#37506f;"></div>
<div style="left:470px;top:576px;width:2px;height:70px;background:#37506f;"></div>
<div style="left:520px;top:576px;width:2px;height:70px;background:#37506f;"></div>
<div style="left:568px;top:576px;width:2px;height:70px;background:#37506f;"></div>
<div style="left:618px;top:576px;width:2px;height:70px;background:#37506f;"></div>
<div style="left:668px;top:576px;width:2px;height:70px;background:#37506f;"></div>
<div style="left:718px;top:576px;width:2px;height:70px;background:#37506f;"></div>
<div style="left:768px;top:576px;width:2px;height:70px;background:#37506f;"></div>
<div style="left:818px;top:576px;width:2px;height:70px;background:#37506f;"></div>
<div style="left:868px;top:576px;width:2px;height:70px;background:#37506f;"></div>
<div style="left:916px;top:576px;width:2px;height:70px;background:#37506f;"></div>
<div style="left:966px;top:576px;width:2px;height:70px;background:#37506f;"></div>
<div style="left:1016px;top:576px;width:2px;height:70px;background:#37506f;"></div>
<div style="left:1066px;top:576px;width:2px;height:70px;background:#37506f;"></div>
<div style="left:1116px;top:576px;width:2px;height:70px;background:#37506f;"></div>
<div style="left:1166px;top:576px;width:2px;height:70px;background:#37506f;"></div>
<div style="left:1216px;top:576px;width:2px;height:70px;background:#37506f;"></div>
<div style="left:1264px;top:576px;width:2px;height:70px;background:#37506f;"></div>
<div style="left:1314px;top:576px;width:2px;height:70px;background:#37506f;"></div>
<div style="left:1364px;top:576px;width:2px;height:70px;background:#37506f;"></div>
<div style="left:1414px;top:576px;width:2px;height:70px;background:#37506f;"></div>
<div style="left:1464px;top:576px;width:2px;height:70px;background:#37506f;"></div>
<div style="left:1514px;top:576px;width:2px;height:70px;background:#37506f;"></div>
<div style="left:1562px;top:576px;width:2px;height:70px;background:#37506f;"></div>
<div style="left:1612px;top:576px;width:2px;height:70px;background:#37506f;"></div>
<div style="left:1662px;top:576px;width:2px;height:70px;background:#37506f;"></div>
<div style="left:1712px;top:576px;width:2px;height:70px;background:#37506f;"></div>
<div style="left:1762px;top:576px;width:2px;height:70px;background:#37506f;"></div>
<div style="left:1812px;top:576px;width:2px;height:70px;background:#37506f;"></div>
<div style="left:1862px;top:576px;width:2px;height:70px;background:#37506f;"></div>
<div style="left:1910px;top:576px;width:2px;height:70px;background:#37506f;"></div>
<div style="left:1960px;top:576px;width:2px;height:70px;background:#37506f;"></div>
<div style="left:2010px;top:576px;width:2px;height:70px;background:#37506f;"></div>
<div style="left:2060px;top:576px;width:2px;height:70px;background:#37506f;"></div>
<div style="left:2110px;top:576px;width:2px;height:70px;background:#37506f;"></div>
<div style="left:2160px;top:576px;width:2px;height:70px;background:#37506f;"></div>
<div style="left:2210px;top:576px;width:2px;height:70px;background:#37506f;"></div>
<div style="left:2258px;top:576px;width:2px;height:70px;background:#37506f;"></div>
<div style="left:2308px;top:576px;width:2px;height:70px;background:#37506f;"></div>
<div style="left:2358px;top:576px;width:2px;height:70px;background:#37506f;"></div>
<div style="left:22px;top:650px;width:2px;height:70px;background:#37506f;"></div>
<div style="left:72px;top:650px;width:2px;height:70px;background:#37506f;"></div>
<div style="left:122px;top:650px;width:2px;height:70px;background:#37506f;"></div>
<div style="left:172px;top:650px;width:2px;height:70px;background:#37506f;"></div>
<div style="left:222px;top:650px;width:2px;height:70px;background:#37506f;"></div>
<div style="left:270px;top:650px;width:2px;height:70px;background:#37506f;"></div>
<div style="left:320px;top:650px;width:2px;height:70px;background:#37506f;"></div>
<div style="left:370px;top:650px;width:2px;height:70px;background:#37506f;"></div>
<div style="left:420px;top:650px;width:2px;height:70px;background:#37506f;"></div>
<div style="left:470px;top:650px;width:2px;height:70px;background:#37506f;"></div>
<div style="left:520px;top:650px;width:2px;height:70px;background:#37506f;"></div>
<div style="left:568px;top:650px;width:2px;height:70px;background:#37506f;"></div>
<div style="left:618px;top:650px;width:2px;height:70px;background:#37506f;"></div>
<div style="left:668px;top:650px;width:2px;height:70px;background:#37506f;"></div>
<div style="left:718px;top:650px;width:2px;height:70px;background:#37506f;"></div>
<div style="left:768px;top:650px;width:2px;height:70px;background:#37506f;"></div>
<div style="left:818px;top:650px;width:2px;height:70px;background:#37506f;"></div>
<div style="left:868px;top:650px;width:2px;height:70px;background:#37506f;"></div>
<div style="left:916px;top:650px;width:2px;height:70px;background:#37506f;"></div>
<div style="left:966px;top:650px;width:2px;height:70px;background:#37506f;"></div>
<div style="left:1016px;top:650px;width:2px;height:70px;background:#37506f;"></div>
<div style="left:1066px;top:650px;width:2px;height:70px;background:#37506f;"></div>
<div style="left:1116px;top:650px;width:2px;height:70px;background:#37506f;"></div>
<div style="left:1166px;top:650px;width:2px;height:70px;background:#37506f;"></div>
<div style="left:1216px;top:650px;width:2px;height:70px;background:#37506f;"></div>
<div style="left:1264px;top:650px;width:2px;height:70px;background:#37506f;"></div>
<div style="left:1314px;top:650px;width:2px;height:70px;background:#37506f;"></div>
<div style="left:1364px;top:650px;width:2px;height:70px;background:#37506f;"></div>
<div style="left:1414px;top:650px;width:2px;height:70px;background:#37506f;"></div>
<div style="left:1464px;top:650px;width:2px;height:70px;background:#37506f;"></div>
<div style="left:1514px;top:650px;width:2px;height:70px;background:#37506f;"></div>
<div style="left:1562px;top:650px;width:2px;height:70px;background:#37506f;"></div>
<div style="left:1612px;top:650px;width:2px;height:70px;background:#37506f;"></div>
<div style="left:1662px;top:650px;width:2px;height:70px;background:#37506f;"></div>
<div style="left:1712px;top:650px;width:2px;height:70px;background:#37506f;"></div>
<div style="left:1762px;top:650px;width:2px;height:70px;background:#37506f;"></div>
<div style="left:1812px;top:650px;width:2px;height:70px;background:#37506f;"></div>
<div style="left:1862px;top:650px;width:2px;height:70px;background:#37506f;"></div>
<div style="left:1910px;top:650px;width:2px;height:70px;background:#37506f;"></div>
<div style="left:1960px;top:650px;width:2px;height:70px;background:#37506f;"></div>
<div style="left:2010px;top:650px;width:2px;height:70px;background:#37506f;"></div>
<div style="left:2060px;top:650px;width:2px;height:70px;background:#37506f;"></div>
<div style="left:2110px;top:650px;width:2px;height:70px;background:#37506f;"></div>
<div style="left:2160px;top:650px;width:2px;height:70px;background:#37506f;"></div>
<div style="left:2210px;top:650px;width:2px;height:70px;background:#37506f;"></div>
<div style="left:2258px;top:650px;width:2px;height:70px;background:#37506f;"></div>
<div style="left:2308px;top:650px;width:2px;height:70px;background:#37506f;"></div>
<div style="left:2358px;top:650px;width:2px;height:70px;background:#37506f;"></div>
<div style="left:22px;top:724px;width:2px;height:70px;background:#37506f;"></div>
<div style="left:72px;top:724px;width:2px;height:70px;background:#37506f;"></div>
<div style="left:122px;top:724px;width:2px;height:70px;background:#37506f;"></div>
<div style="left:172px;top:724px;width:2px;height:70px;background:#37506f;"></div>
<div style="left:222px;top:724px;width:2px;height:70px;background:#37506f;"></div>
<div style="left:270px;top:724px;width:2px;height:70px;background:#37506f;"></div>
<div style="left:320px;top:724px;width:2px;height:70px;background:#37506f;"></div>
<div style="left:370px;top:724px;width:2px;height:70px;background:#37506f;"></div>
<div style="left:420px;top:724px;width:2px;height:70px;background:#37506f;"></div>
<div style="left:470px;top:724px;width:2px;height:70px;background:#37506f;"></div>
<div style="left:520px;top:724px;width:2px;height:70px;background:#37506f;"></div>
<div style="left:568px;top:724px;width:2px;height:70px;background:#37506f;"></div>
<div style="left:618px;top:724px;width:2px;height:70px;background:#37506f;"></div>
<div style="left:668px;top:724px;width:2px;height:70px;background:#37506f;"></div>
<div style="left:718px;top:724px;width:2px;height:70px;background:#37506f;"></div>
<div style="left:768px;top:724px;width:2px;height:70px;background:#37506f;"></div>
<div style="left:818px;top:724px;width:2px;height:70px;background:#37506f;"></div>
<div style="left:868px;top:724px;width:2px;height:70px;background:#37506f;"></div>
<div style="left:916px;top:724px;width:2px;height:70px;background:#37506f;"></div>
<div style="left:966px;top:724px;width:2px;height:70px;background:#37506f;"></div>
<div style="left:1016px;top:724px;width:2px;height:70px;background:#37506f;"></div>
<div style="left:1066px;top:724px;width:2px;height:70px;background:#37506f;"></div>
<div style="left:1116px;top:724px;width:2px;height:70px;background:#37506f;"></div>
<div style="left:1166px;top:724px;width:2px;height:70px;background:#37506f;"></div>
<div style="left:1216px;top:724px;width:2px;height:70px;background:#37506f;"></div>
<div style="left:1264px;top:724px;width:2px;height:70px;background:#37506f;"></div>
<div style="left:1314px;top:724px;width:2px;height:70px;background:#37506f;"></div>
<div style="left:1364px;top:724px;width:2px;height:70px;background:#37506f;"></div>
<div style="left:1414px;top:724px;width:2px;height:70px;background:#37506f;"></div>
<div style="left:1464px;top:724px;width:2px;height:70px;background:#37506f;"></div>
<div style="left:1514px;top:724px;width:2px;height:70px;background:#37506f;"></div>
<div style="left:1562px;top:724px;width:2px;height:70px;background:#37506f;"></div>
<div style="left:1612px;top:724px;width:2px;height:70px;background:#37506f;"></div>
<div style="left:1662px;top:724px;width:2px;height:70px;background:#37506f;"></div>
<div style="left:1712px;top:724px;width:2px;height:70px;background:#37506f;"></div>
<div style="left:1762px;top:724px;width:2px;height:70px;background:#37506f;"></div>
<div style="left:1812px;top:724px;width:2px;height:70px;background:#37506f;"></div>
<div style="left:1862px;top:724px;width:2px;height:70px;background:#37506f;"></div>
<div style="left:1910px;top:724px;width:2px;height:70px;background:#37506f;"></div>
<div style="left:1960px;top:724px;width:2px;height:70px;background:#37506f;"></div>
<div style="left:2010px;top:724px;width:2px;height:70px;background:#37506f;"></div>
<div style="left:2060px;top:724px;width:2px;height:70px;background:#37506f;"></div>
<div style="left:2110px;top:724px;width:2px;height:70px;background:#37506f;"></div>
<div style="left:2160px;top:724px;width:2px;height:70px;background:#37506f;"></div>
<div style="left:2210px;top:724px;width:2px;height:70px;background:#37506f;"></div>
<div style="left:2258px;top:724px;width:2px;height:70px;background:#37506f;"></div>
<div style="left:2308px;top:724px;width:2px;height:70px;background:#37506f;"></div>
<div style="left:2358px;top:724px;width:2px;height:70px;background:#37506f;"></div>
<div style="left:22px;top:906px;width:2px;height:70px;background:#37506f;"></div>
<div style="left:72px;top:906px;width:2px;height:70px;background:#37506f;"></div>
<div style="left:122px;top:906px;width:2px;height:70px;background:#37506f;"></div>
<div style="left:172px;top:906px;width:2px;height:70px;background:#37506f;"></div>
<div style="left:222px;top:906px;width:2px;height:70px;background:#37506f;"></div>
<div style="left:270px;top:906px;width:2px;height:70px;background:#37506f;"></div>
<div style="left:320px;top:906px;width:2px;height:70px;background:#37506f;"></div>
<div style="left:370px;top:906px;width:2px;height:70px;background:#37506f;"></div>
<div style="left:420px;top:906px;width:2px;height:70px;background:#37506f;"></div>
<div style="left:470px;top:906px;width:2px;height:70px;background:#37506f;"></div>
<div style="left:520px;top:906px;width:2px;height:70px;background:#37506f;"></div>
<div style="left:568px;top:906px;width:2px;height:70px;background:#37506f;"></div>
<div style="left:618px;top:906px;width:2px;height:70px;background:#37506f;"></div>
<div style="left:668px;top:906px;width:2px;height:70px;background:#37506f;"></div>
<div style="left:718px;top:906px;width:2px;height:70px;background:#37506f;"></div>
<div style="left:768px;top:906px;width:2px;height:70px;background:#37506f;"></div>
<div style="left:818px;top:906px;width:2px;height:70px;background:#37506f;"></div>
<div style="left:868px;top:906px;width:2px;height:70px;background:#37506f;"></div>
<div style="left:916px;top:906px;width:2px;height:70px;background:#37506f;"></div>
<div style="left:966px;top:906px;width:2px;height:70px;background:#37506f;"></div>
<div style="left:1016px;top:906px;width:2px;height:70px;background:#37506f;"></div>
<div style="left:1066px;top:906px;width:2px;height:70px;background:#37506f;"></div>
<div style="left:1116px;top:906px;width:2px;height:70px;background:#37506f;"></div>
<div style="left:1166px;top:906px;width:2px;height:70px;background:#37506f;"></div>
<div style="left:1216px;top:906px;width:2px;height:70px;background:#37506f;"></div>
<div style="left:1264px;top:906px;width:2px;height:70px;background:#37506f;"></div>
<div style="left:1314px;top:906px;width:2px;height:70px;background:#37506f;"></div>
<div style="left:1364px;top:906px;width:2px;height:70px;background:#37506f;"></div>
<div style="left:1414px;top:906px;width:2px;height:70px;background:#37506f;"></div>
<div style="left:1464px;top:906px;width:2px;height:70px;background:#37506f;"></div>
<div style="left:1514px;top:906px;width:2px;height:70px;background:#37506f;"></div>
<div style="left:1562px;top:906px;width:2px;height:70px;background:#37506f;"></div>
<div style="left:1612px;top:906px;width:2px;height:70px;background:#37506f;"></div>
<div style="left:1662px;top:906px;width:2px;height:70px;background:#37506f;"></div>
<div style="left:1712px;top:906px;width:2px;height:70px;background:#37506f;"></div>
<div style="left:1762px;top:906px;width:2px;height:70px;background:#37506f;"></div>
<div style="left:1812px;top:906px;width:2px;height:70px;background:#37506f;"></div>
<div style="left:1862px;top:906px;width:2px;height:70px;background:#37506f;"></div>
<div style="left:1910px;top:906px;width:2px;height:70px;background:#37506f;"></div>
<div style="left:1960px;top:906px;width:2px;height:70px;background:#37506f;"></div>
<div style="left:2010px;top:906px;width:2px;height:70px;background:#37506f;"></div>
<div style="left:2060px;top:906px;width:2px;height:70px;background:#37506f;"></div>
<div style="left:2110px;top:906px;width:2px;height:70px;background:#37506f;"></div>
<div style="left:2160px;top:906px;width:2px;height:70px;background:#37506f;"></div>
<div style="left:2210px;top:906px;width:2px;height:70px;background:#37506f;"></div>
<div style="left:2258px;top:906px;width:2px;height:70px;background:#37506f;"></div>
<div style="left:2308px;top:906px;width:2px;height:70px;background:#37506f;"></div>
<div style="left:2358px;top:906px;width:2px;height:70px;background:#37506f;"></div>
<div style="left:22px;top:980px;width:2px;height:34px;background:#37506f;"></div>
<div style="left:72px;top:980px;width:2px;height:34px;background:#37506f;"></div>
<div style="left:122px;top:980px;width:2px;height:34px;background:#37506f;"></div>
<div style="left:172px;top:980px;width:2px;height:34px;background:#37506f;"></div>
<div style="left:222px;top:980px;width:2px;height:34px;background:#37506f;"></div>
<div style="left:270px;top:980px;width:2px;height:34px;background:#37506f;"></div>
<div style="left:320px;top:980px;width:2px;height:34px;background:#37506f;"></div>
<div style="left:370px;top:980px;width:2px;height:34px;background:#37506f;"></div>
<div style="left:420px;top:980px;width:2px;height:34px;background:#37506f;"></div>
<div style="left:470px;top:980px;width:2px;height:34px;background:#37506f;"></div>
<div style="left:520px;top:980px;width:2px;height:34px;background:#37506f;"></div>
<div style="left:568px;top:980px;width:2px;height:34px;background:#37506f;"></div>
<div style="left:618px;top:980px;width:2px;height:34px;background:#37506f;"></div>
<div style="left:668px;top:980px;width:2px;height:34px;background:#37506f;"></div>
<div style="left:718px;top:980px;width:2px;height:34px;background:#37506f;"></div>
<div style="left:768px;top:980px;width:2px;height:34px;background:#37506f;"></div>
<div style="left:818px;top:980px;width:2px;height:34px;background:#37506f;"></div>
<div style="left:868px;top:980px;width:2px;height:34px;background:#37506f;"></div>
<div style="left:916px;top:980px;width:2px;height:34px;background:#37506f;"></div>
<div style="left:966px;top:980px;width:2px;height:34px;background:#37506f;"></div>
<div style="left:1016px;top:980px;width:2px;height:34px;background:#37506f;"></div>
<div style="left:1066px;top:980px;width:2px;height:34px;background:#37506f;"></div>
<div style="left:1116px;top:980px;width:2px;height:34px;background:#37506f;"></div>
<div style="left:1166px;top:980px;width:2px;height:34px;background:#37506f;"></div>
<div style="left:1216px;top:980px;width:2px;height:34px;background:#37506f;"></div>
<div style="left:1264px;top:980px;width:2px;height:34px;background:#37506f;"></div>
<div style="left:1314px;top:980px;width:2px;height:34px;background:#37506f;"></div>
<div style="left:1364px;top:980px;width:2px;height:34px;background:#37506f;"></div>
<div style="left:1414px;top:980px;width:2px;height:34px;background:#37506f;"></div>
<div style="left:1464px;top:980px;width:2px;height:34px;background:#37506f;"></div>
<div style="left:1514px;top:980px;width:2px;height:34px;background:#37506f;"></div>
<div style="left:1562px;top:980px;width:2px;height:34px;background:#37506f;"></div>
<div style="left:1612px;top:980px;width:2px;height:34px;background:#37506f;"></div>
<div style="left:1662px;top:980px;width:2px;height:34px;background:#37506f;"></div>
<div style="left:1712px;top:980px;width:2px;height:34px;background:#37506f;"></div>
<div style="left:1762px;top:980px;width:2px;height:34px;background:#37506f;"></div>
<div style="left:1812px;top:980px;width:2px;height:34px;background:#37506f;"></div>
<div style="left:1862px;top:980px;width:2px;height:34px;background:#37506f;"></div>
<div style="left:1910px;top:980px;width:2px;height:34px;background:#37506f;"></div>
<div style="left:1960px;top:980px;width:2px;height:34px;background:#37506f;"></div>
<div style="left:2010px;top:980px;width:2px;height:34px;background:#37506f;"></div>
<div style="left:2060px;top:980px;width:2px;height:34px;background:#37506f;"></div>
<div style="left:2110px;top:980px;width:2px;height:34px;background:#37506f;"></div>
<div style="left:2160px;top:980px;width:2px;height:34px;background:#37506f;"></div>
<div style="left:2210px;top:980px;width:2px;height:34px;background:#37506f;"></div>
<div style="left:2258px;top:980px;width:2px;height:34px;background:#37506f;"></div>
<div style="left:2308px;top:980px;width:2px;height:34px;background:#37506f;"></div>
<div style="left:2358px;top:980px;width:2px;height:34px;background:#37506f;"></div>
<div style="left:22px;top:1018px;width:2px;height:70px;background:#37506f;"></div>
<div style="left:72px;top:1018px;width:2px;height:70px;background:#37506f;"></div>
<div style="left:122px;top:1018px;width:2px;height:70px;background:#37506f;"></div>
<div style="left:172px;top:1018px;width:2px;height:70px;background:#37506f;"></div>
<div style="left:222px;top:1018px;width:2px;height:70px;background:#37506f;"></div>
<div style="left:270px;top:1018px;width:2px;height:70px;background:#37506f;"></div>
<div style="left:320px;top:1018px;width:2px;height:70px;background:#37506f;"></div>
<div style="left:370px;top:1018px;width:2px;height:70px;background:#37506f;"></div>
<div style="left:420px;top:1018px;width:2px;height:70px;background:#37506f;"></div>
<div style="left:470px;top:1018px;width:2px;height:70px;background:#37506f;"></div>
<div style="left:520px;top:1018px;width:2px;height:70px;background:#37506f;"></div>
<div style="left:568px;top:1018px;width:2px;height:70px;background:#37506f;"></div>
<div style="left:618px;top:1018px;width:2px;height:70px;background:#37506f;"></div>
<div style="left:668px;top:1018px;width:2px;height:70px;background:#37506f;"></div>
<div style="left:718px;top:1018px;width:2px;height:70px;background:#37506f;"></div>
<div style="left:768px;top:1018px;width:2px;height:70px;background:#37506f;"></div>
<div style="left:818px;top:1018px;width:2px;height:70px;background:#37506f;"></div>
<div style="left:868px;top:1018px;width:2px;height:70px;background:#37506f;"></div>
<div style="left:916px;top:1018px;width:2px;height:70px;background:#37506f;"></div>
<div style="left:966px;top:1018px;width:2px;height:70px;background:#37506f;"></div>
<div style="left:1016px;top:1018px;width:2px;height:70px;background:#37506f;"></div>
<div style="left:1066px;top:1018px;width:2px;height:70px;background:#37506f;"></div>
<div style="left:1116px;top:1018px;width:2px;height:70px;background:#37506f;"></div>
<div style="left:1166px;top:1018px;width:2px;height:70px;background:#37506f;"></div>
<div style="left:1216px;top:1018px;width:2px;height:70px;background:#37506f;"></div>
<div style="left:1264px;top:1018px;width:2px;height:70px;background:#37506f;"></div>
<div style="left:1314px;top:1018px;width:2px;height:70px;background:#37506f;"></div>
<div style="left:1364px;top:1018px;width:2px;height:70px;background:#37506f;"></div>
<div style="left:1414px;top:1018px;width:2px;height:70px;background:#37506f;"></div>
<div style="left:1464px;top:1018px;width:2px;height:70px;background:#37506f;"></div>
<div style="left:1514px;top:1018px;width:2px;height:70px;background:#37506f;"></div>
<div style="left:1562px;top:1018px;width:2px;height:70px;background:#37506f;"></div>
<div style="left:1612px;top:1018px;width:2px;height:70px;background:#37506f;"></div>
<div style="left:1662px;top:1018px;width:2px;height:70px;background:#37506f;"></div>
<div style="left:1712px;top:1018px;width:2px;height:70px;background:#37506f;"></div>
<div style="left:1762px;top:1018px;width:2px;height:70px;background:#37506f;"></div>
<div style="left:1812px;top:1018px;width:2px;height:70px;background:#37506f;"></div>
<div style="left:1862px;top:1018px;width:2px;height:70px;background:#37506f;"></div>
<div style="left:1910px;top:1018px;width:2px;height:70px;background:#37506f;"></div>
<div style="left:1960px;top:1018px;width:2px;height:70px;background:#37506f;"></div>
<div style="left:2010px;top:1018px;width:2px;height:70px;background:#37506f;"></div>
<div style="left:2060px;top:1018px;width:2px;height:70px;background:#37506f;"></div>
<div style="left:2110px;top:1018px;width:2px;height:70px;background:#37506f;"></div>
<div style="left:2160px;top:1018px;width:2px;height:70px;background:#37506f;"></div>
<div style="left:2210px;top:1018px;width:2px;height:70px;background:#37506f;"></div>
<div style="left:2258px;top:1018px;width:2px;height:70px;background:#37506f;"></div>
<div style="left:2308px;top:1018px;width:2px;height:70px;background:#37506f;"></div>
<div style="left:2358px;top:1018px;width:2px;height:70px;background:#37506f;"></div>
<div style="left:22px;top:1092px;width:2px;height:70px;background:#37506f;"></div>
<div style="left:72px;top:1092px;width:2px;height:70px;background:#37506f;"></div>
<div style="left:122px;top:1092px;width:2px;height:70px;background:#37506f;"></div>
<div style="left:172px;top:1092px;width:2px;height:70px;background:#37506f;"></div>
<div style="left:222px;top:1092px;width:2px;height:70px;background:#37506f;"></div>
<div style="left:270px;top:1092px;width:2px;height:70px;background:#37506f;"></div>
<div style="left:320px;top:1092px;width:2px;height:70px;background:#37506f;"></div>
<div style="left:370px;top:1092px;width:2px;height:70px;background:#37506f;"></div>
<div style="left:420px;top:1092px;width:2px;height:70px;background:#37506f;"></div>
<div style="left:470px;top:1092px;width:2px;height:70px;background:#37506f;"></div>
<div style="left:520px;top:1092px;width:2px;height:70px;background:#37506f;"></div>
<div style="left:568px;top:1092px;width:2px;height:70px;background:#37506f;"></div>
<div style="left:618px;top:1092px;width:2px;height:70px;background:#37506f;"></div>
<div style="left:668px;top:1092px;width:2px;height:70px;background:#37506f;"></div>
<div style="left:718px;top:1092px;width:2px;height:70px;background:#37506f;"></div>
<div style="left:768px;top:1092px;width:2px;height:70px;background:#37506f;"></div>
<div style="left:818px;top:1092px;width:2px;height:70px;background:#37506f;"></div>
<div style="left:868px;top:1092px;width:2px;height:70px;background:#37506f;"></div>
<div style="left:916px;top:1092px;width:2px;height:70px;background:#37506f;"></div>
<div style="left:966px;top:1092px;width:2px;height:70px;background:#37506f;"></div>
<div style="left:1016px;top:1092px;width:2px;height:70px;background:#37506f;"></div>
<div style="left:1066px;top:1092px;width:2px;height:70px;background:#37506f;"></div>
<div style="left:1116px;top:1092px;width:2px;height:70px;background:#37506f;"></div>
<div style="left:1166px;top:1092px;width:2px;height:70px;background:#37506f;"></div>
<div style="left:1216px;top:1092px;width:2px;height:70px;background:#37506f;"></div>
<div style="left:1264px;top:1092px;width:2px;height:70px;background:#37506f;"></div>
<div style="left:1314px;top:1092px;width:2px;height:70px;background:#37506f;"></div>
<div style="left:1364px;top:1092px;width:2px;height:70px;background:#37506f;"></div>
<div style="left:1414px;top:1092px;width:2px;height:70px;background:#37506f;"></div>
<div style="left:1464px;top:1092px;width:2px;height:70px;background:#37506f;"></div>
<div style="left:1514px;top:1092px;width:2px;height:70px;background:#37506f;"></div>
<div style="left:1562px;top:1092px;width:2px;height:70px;background:#37506f;"></div>
<div style="left:1612px;top:1092px;width:2px;height:70px;background:#37506f;"></div>
<div style="left:1662px;top:1092px;width:2px;height:70px;background:#37506f;"></div>
<div style="left:1712px;top:1092px;width:2px;height:70px;background:#37506f;"></div>
<div style="left:1762px;top:1092px;width:2px;height:70px;background:#37506f;"></div>
<div style="left:1812px;top:1092px;width:2px;height:70px;background:#37506f;"></div>
<div style="left:1862px;top:1092px;width:2px;height:70px;background:#37506f;"></div>
<div style="left:1910px;top:1092px;width:2px;height:70px;background:#37506f;"></div>
<div style="left:1960px;top:1092px;width:2px;height:70px;background:#37506f;"></div>
<div style="left:2010px;top:1092px;width:2px;height:70px;background:#37506f;"></div>
<div style="left:2060px;top:1092px;width:2px;height:70px;background:#37506f;"></div>
<div style="left:2110px;top:1092px;width:2px;height:70px;background:#37506f;"></div>
<div style="left:2160px;top:1092px;width:2px;height:70px;background:#37506f;"></div>
<div style="left:2210px;top:1092px;width:2px;height:70px;background:#37506f;"></div>
<div style="left:2258px;top:1092px;width:2px;height:70px;background:#37506f;"></div>
<div style="left:2308px;top:1092px;width:2px;height:70px;background:#37506f;"></div>
<div style="left:2358px;top:1092px;width:2px;height:70px;background:#37506f;"></div>
<div style="left:22px;top:1166px;width:2px;height:70px;background:#37506f;"></div>
<div style="left:72px;top:1166px;width:2px;height:70px;background:#37506f;"></div>
<div style="left:122px;top:1166px;width:2px;height:70px;background:#37506f;"></div>
<div style="left:172px;top:1166px;width:2px;height:70px;background:#37506f;"></div>
<div style="left:222px;top:1166px;width:2px;height:70px;background:#37506f;"></div>
<div style="left:270px;top:1166px;width:2px;height:70px;background:#37506f;"></div>
<div style="left:320px;top:1166px;width:2px;height:70px;background:#37506f;"></div>
<div style="left:370px;top:1166px;width:2px;height:70px;background:#37506f;"></div>
<div style="left:420px;top:1166px;width:2px;height:70px;background:#37506f;"></div>
<div style="left:470px;top:1166px;width:2px;height:70px;background:#37506f;"></div>
<div style="left:520px;top:1166px;width:2px;height:70px;background:#37506f;"></div>
<div style="left:568px;top:1166px;width:2px;height:70px;background:#37506f;"></div>
<div style="left:618px;top:1166px;width:2px;height:70px;background:#37506f;"></div>
<div style="left:668px;top:1166px;width:2px;height:70px;background:#37506f;"></div>
<div style="left:718px;top:1166px;width:2px;height:70px;background:#37506f;"></div>
<div style="left:768px;top:1166px;width:2px;height:70px;background:#37506f;"></div>
<div style="left:818px;top:1166px;width:2px;height:70px;background:#37506f;"></div>
<div style="left:868px;top:1166px;width:2px;height:70px;background:#37506f;"></div>
<div style="left:916px;top:1166px;width:2px;height:70px;background:#37506f;"></div>
<div style="left:966px;top:1166px;width:2px;height:70px;background:#37506f;"></div>
<div style="left:1016px;top:1166px;width:2px;height:70px;background:#37506f;"></div>
<div style="left:1066px;top:1166px;width:2px;height:70px;background:#37506f;"></div>
<div style="left:1116px;top:1166px;width:2px;height:70px;background:#37506f;"></div>
<div style="left:1166px;top:1166px;width:2px;height:70px;background:#37506f;"></div>
<div style="left:1216px;top:1166px;width:2px;height:70px;background:#37506f;"></div>
<div style="left:1264px;top:1166px;width:2px;height:70px;background:#37506f;"></div>
<div style="left:1314px;top:1166px;width:2px;height:70px;background:#37506f;"></div>
<div style="left:1364px;top:1166px;width:2px;height:70px;background:#37506f;"></div>
<div style="left:1414px;top:1166px;width:2px;height:70px;background:#37506f;"></div>
<div style="left:1464px;top:1166px;width:2px;height:70px;background:#37506f;"></div>
<div style="left:1514px;top:1166px;width:2px;height:70px;background:#37506f;"></div>
<div style="left:1562px;top:1166px;width:2px;height:70px;background:#37506f;"></div>
<div style="left:1612px;top:1166px;width:2px;height:70px;background:#37506f;"></div>
<div style="left:1662px;top:1166px;width:2px;height:70px;background:#37506f;"></div>
<div style="left:1712px;top:1166px;width:2px;height:70px;background:#37506f;"></div>
<div style="left:1762px;top:1166px;width:2px;height:70px;background:#37506f;"></div>
<div style="left:1812px;top:1166px;width:2px;height:70px;background:#37506f;"></div>
<div style="left:1862px;top:1166px;width:2px;height:70px;background:#37506f;"></div>
<div style="left:1910px;top:1166px;width:2px;height:70px;background:#37506f;"></div>
<div style="left:1960px;top:1166px;width:2px;height:70px;background:#37506f;"></div>
<div style="left:2010px;top:1166px;width:2px;height:70px;background:#37506f;"></div>
<div style="left:2060px;top:1166px;width:2px;height:70px;background:#37506f;"></div>
<div style="left:2110px;top:1166px;width:2px;height:70px;background:#37506f;"></div>
<div style="left:2160px;top:1166px;width:2px;height:70px;background:#37506f;"></div>
<div style="left:2210px;top:1166px;width:2px;height:70px;background:#37506f;"></div>
<div style="left:2258px;top:1166px;width:2px;height:70px;background:#37506f;"></div>
<div style="left:2308px;top:1166px;width:2px;height:70px;background:#37506f;"></div>
<div style="left:2358px;top:1166px;width:2px;height:70px;background:#37506f;"></div>
<div style="left:22px;top:1240px;width:2px;height:34px;background:#37506f;"></div>
<div style="left:72px;top:1240px;width:2px;height:34px;background:#37506f;"></div>
<div style="left:122px;top:1240px;width:2px;height:34px;background:#37506f;"></div>
<div style="left:172px;top:1240px;width:2px;height:34px;background:#37506f;"></div>
<div style="left:222px;top:1240px;width:2px;height:34px;background:#37506f;"></div>
<div style="left:270px;top:1240px;width:2px;height:34px;background:#37506f;"></div>
<div style="left:320px;top:1240px;width:2px;height:34px;background:#37506f;"></div>
<div style="left:370px;top:1240px;width:2px;height:34px;background:#37506f;"></div>
<div style="left:420px;top:1240px;width:2px;height:34px;background:#37506f;"></div>
<div style="left:470px;top:1240px;width:2px;height:34px;background:#37506f;"></div>
<div style="left:520px;top:1240px;width:2px;height:34px;background:#37506f;"></div>
<div style="left:568px;top:1240px;width:2px;height:34px;background:#37506f;"></div>
<div style="left:618px;top:1240px;width:2px;height:34px;background:#37506f;"></div>
<div style="left:668px;top:1240px;width:2px;height:34px;background:#37506f;"></div>
<div style="left:718px;top:1240px;width:2px;height:34px;background:#37506f;"></div>
<div style="left:768px;top:1240px;width:2px;height:34px;background:#37506f;"></div>
<div style="left:818px;top:1240px;width:2px;height:34px;background:#37506f;"></div>
<div style="left:868px;top:1240px;width:2px;height:34px;background:#37506f;"></div>
<div style="left:916px;top:1240px;width:2px;height:34px;background:#37506f;"></div>
<div style="left:966px;top:1240px;width:2px;height:34px;background:#37506f;"></div>
<div style="left:1016px;top:1240px;width:2px;height:34px;background:#37506f;"></div>
<div style="left:1066px;top:1240px;width:2px;height:34px;background:#37506f;"></div>
<div style="left:1116px;top:1240px;width:2px;height:34px;background:#37506f;"></div>
<div style="left:1166px;top:1240px;width:2px;height:34px;background:#37506f;"></div>
<div style="left:1216px;top:1240px;width:2px;height:34px;background:#37506f;"></div>
<div style="left:1264px;top:1240px;width:2px;height:34px;background:#37506f;"></div>
<div style="left:1314px;top:1240px;width:2px;height:34px;background:#37506f;"></div>
<div style="left:1364px;top:1240px;width:2px;height:34px;background:#37506f;"></div>
<div style="left:1414px;top:1240px;width:2px;height:34px;background:#37506f;"></div>
<div style="left:1464px;top:1240px;width:2px;height:34px;background:#37506f;"></div>
<div style="left:1514px;top:1240px;width:2px;height:34px;background:#37506f;"></div>
<div style="left:1562px;top:1240px;width:2px;height:34px;background:#37506f;"></div>
<div style="left:1612px;top:1240px;width:2px;height:34px;background:#37506f;"></div>
<div style="left:1662px;top:1240px;width:2px;height:34px;background:#37506f;"></div>
<div style="left:1712px;top:1240px;width:2px;height:34px;background:#37506f;"></div>
<div style="left:1762px;top:1240px;width:2px;height:34px;background:#37506f;"></div>
<div style="left:1812px;top:1240px;width:2px;height:34px;background:#37506f;"></div>
<div style="left:1862px;top:1240px;width:2px;height:34px;background:#37506f;"></div>
<div style="left:1910px;top:1240px;width:2px;height:34px;background:#37506f;"></div>
<div style="left:1960px;top:1240px;width:2px;height:34px;background:#37506f;"></div>
<div style="left:2010px;top:1240px;width:2px;height:34px;background:#37506f;"></div>
<div style="left:2060px;top:1240px;width:2px;height:34px;background:#37506f;"></div>
<div style="left:2110px;top:1240px;width:2px;height:34px;background:#37506f;"></div>
<div style="left:2160px;top:1240px;width:2px;height:34px;background:#37506f;"></div>
<div style="left:2210px;top:1240px;width:2px;height:34px;background:#37506f;"></div>
<div style="left:2258px;top:1240px;width:2px;height:34px;background:#37506f;"></div>
<div style="left:2308px;top:1240px;width:2px;height:34px;background:#37506f;"></div>
<div style="left:2358px;top:1240px;width:2px;height:34px;background:#37506f;"></div>
<div style="left:22px;top:1278px;width:2px;height:70px;background:#37506f;"></div>
<div style="left:72px;top:1278px;width:2px;height:70px;background:#37506f;"></div>
<div style="left:122px;top:1278px;width:2px;height:70px;background:#37506f;"></div>
<div style="left:172px;top:1278px;width:2px;height:70px;background:#37506f;"></div>
<div style="left:222px;top:1278px;width:2px;height:70px;background:#37506f;"></div>
<div style="left:270px;top:1278px;width:2px;height:70px;background:#37506f;"></div>
<div style="left:320px;top:1278px;width:2px;height:70px;background:#37506f;"></div>
<div style="left:370px;top:1278px;width:2px;height:70px;background:#37506f;"></div>
<div style="left:420px;top:1278px;width:2px;height:70px;background:#37506f;"></div>
<div style="left:470px;top:1278px;width:2px;height:70px;background:#37506f;"></div>
<div style="left:520px;top:1278px;width:2px;height:70px;background:#37506f;"></div>
<div style="left:568px;top:1278px;width:2px;height:70px;background:#37506f;"></div>
<div style="left:618px;top:1278px;width:2px;height:70px;background:#37506f;"></div>
<div style="left:668px;top:1278px;width:2px;height:70px;background:#37506f;"></div>
<div style="left:718px;top:1278px;width:2px;height:70px;background:#37506f;"></div>
<div style="left:768px;top:1278px;width:2px;height:70px;background:#37506f;"></div>
<div style="left:818px;top:1278px;width:2px;height:70px;background:#37506f;"></div>
<div style="left:868px;top:1278px;width:2px;height:70px;background:#37506f;"></div>
<div style="left:916px;top:1278px;width:2px;height:70px;background:#37506f;"></div>
<div style="left:966px;top:1278px;width:2px;height:70px;background:#37506f;"></div>
<div style="left:1016px;top:1278px;width:2px;height:70px;background:#37506f;"></div>
<div style="left:1066px;top:1278px;width:2px;height:70px;background:#37506f;"></div>
<div style="left:1116px;top:1278px;width:2px;height:70px;background:#37506f;"></div>
<div style="left:1166px;top:1278px;width:2px;height:70px;background:#37506f;"></div>
<div style="left:1216px;top:1278px;width:2px;height:70px;background:#37506f;"></div>
<div style="left:1264px;top:1278px;width:2px;height:70px;background:#37506f;"></div>
<div style="left:1314px;top:1278px;width:2px;height:70px;background:#37506f;"></div>
<div style="left:1364px;top:1278px;width:2px;height:70px;background:#37506f;"></div>
<div style="left:1414px;top:1278px;width:2px;height:70px;background:#37506f;"></div>
<div style="left:1464px;top:1278px;width:2px;height:70px;background:#37506f;"></div>
<div style="left:1514px;top:1278px;width:2px;height:70px;background:#37506f;"></div>
<div style="left:1562px;top:1278px;width:2px;height:70px;background:#37506f;"></div>
<div style="left:1612px;top:1278px;width:2px;height:70px;background:#37506f;"></div>
<div style="left:1662px;top:1278px;width:2px;height:70px;background:#37506f;"></div>
<div style="left:1712px;top:1278px;width:2px;height:70px;background:#37506f;"></div>
<div style="left:1762px;top:1278px;width:2px;height:70px;background:#37506f;"></div>
<div style="left:1812px;top:1278px;width:2px;height:70px;background:#37506f;"></div>
<div style="left:1862px;top:1278px;width:2px;height:70px;background:#37506f;"></div>
<div style="left:1910px;top:1278px;width:2px;height:70px;background:#37506f;"></div>
<div style="left:1960px;top:1278px;width:2px;height:70px;background:#37506f;"></div>
<div style="left:2010px;top:1278px;width:2px;height:70px;background:#37506f;"></div>
<div style="left:2060px;top:1278px;width:2px;height:70px;background:#37506f;"></div>
<div style="left:2110px;top:1278px;width:2px;height:70px;background:#37506f;"></div>
<div style="left:2160px;top:1278px;width:2px;height:70px;background:#37506f;"></div>
<div style="left:2210px;top:1278px;width:2px;height:70px;background:#37506f;"></div>
<div style="left:2258px;top:1278px;width:2px;height:70px;background:#37506f;"></div>
<div style="left:2308px;top:1278px;width:2px;height:70px;background:#37506f;"></div>
<div style="left:2358px;top:1278px;width:2px;height:70px;background:#37506f;"></div>
<div style="left:22px;top:1352px;width:2px;height:34px;background:#37506f;"></div>
<div style="left:72px;top:1352px;width:2px;height:34px;background:#37506f;"></div>
<div style="left:122px;top:1352px;width:2px;height:34px;background:#37506f;"></div>
<div style="left:172px;top:1352px;width:2px;height:34px;background:#37506f;"></div>
<div style="left:222px;top:1352px;width:2px;height:34px;background:#37506f;"></div>
<div style="left:270px;top:1352px;width:2px;height:34px;background:#37506f;"></div>
<div style="left:320px;top:1352px;width:2px;height:34px;background:#37506f;"></div>
<div style="left:370px;top:1352px;width:2px;height:34px;background:#37506f;"></div>
<div style="left:420px;top:1352px;width:2px;height:34px;background:#37506f;"></div>
<div style="left:470px;top:1352px;width:2px;height:34px;background:#37506f;"></div>
<div style="left:520px;top:1352px;width:2px;height:34px;background:#37506f;"></div>
<div style="left:568px;top:1352px;width:2px;height:34px;background:#37506f;"></div>
<div style="left:618px;top:1352px;width:2px;height:34px;background:#37506f;"></div>
<div style="left:668px;top:1352px;width:2px;height:34px;background:#37506f;"></div>
<div style="left:718px;top:1352px;width:2px;height:34px;background:#37506f;"></div>
<div style="left:768px;top:1352px;width:2px;height:34px;background:#37506f;"></div>
<div style="left:818px;top:1352px;width:2px;height:34px;background:#37506f;"></div>
<div style="left:868px;top:1352px;width:2px;height:34px;background:#37506f;"></div>
<div style="left:916px;top:1352px;width:2px;height:34px;background:#37506f;"></div>
<div style="left:966px;top:1352px;width:2px;height:34px;background:#37506f;"></div>
<div style="left:1016px;top:1352px;width:2px;height:34px;background:#37506f;"></div>
<div style="left:1066px;top:1352px;width:2px;height:34px;background:#37506f;"></div>
<div style="left:1116px;top:1352px;width:2px;height:34px;background:#37506f;"></div>
<div style="left:1166px;top:1352px;width:2px;height:34px;background:#37506f;"></div>
<div style="left:1216px;top:1352px;width:2px;height:34px;background:#37506f;"></div>
<div style="left:1264px;top:1352px;width:2px;height:34px;background:#37506f;"></div>
<div style="left:1314px;top:1352px;width:2px;height:34px;background:#37506f;"></div>
<div style="left:1364px;top:1352px;width:2px;height:34px;background:#37506f;"></div>
<div style="left:1414px;top:1352px;width:2px;height:34px;background:#37506f;"></div>
<div style="left:1464px;top:1352px;width:2px;height:34px;background:#37506f;"></div>
<div style="left:1514px;top:1352px;width:2px;height:34px;background:#37506f;"></div>
<div style="left:1562px;top:1352px;width:2px;height:34px;background:#37506f;"></div>
<div style="left:1612px;top:1352px;width:2px;height:34px;background:#37506f;"></div>
<div style="left:1662px;top:1352px;width:2px;height:34px;background:#37506f;"></div>
<div style="left:1712px;top:1352px;width:2px;height:34px;background:#37506f;"></div>
<div style="left:1762px;top:1352px;width:2px;height:34px;background:#37506f;"></div>
<div style="left:1812px;top:1352px;width:2px;height:34px;background:#37506f;"></div>
<div style="left:1862px;top:1352px;width:2px;height:34px;background:#37506f;"></div>
<div style="left:1910px;top:1352px;width:2px;height:34px;background:#37506f;"></div>
<div style="left:1960px;top:1352px;width:2px;height:34px;background:#37506f;"></div>
<div style="left:2010px;top:1352px;width:2px;height:34px;background:#37506f;"></div>
<div style="left:2060px;top:1352px;width:2px;height:34px;background:#37506f;"></div>
<div style="left:2110px;top:1352px;width:2px;height:34px;background:#37506f;"></div>
<div style="left:2160px;top:1352px;width:2px;height:34px;background:#37506f;"></div>
<div style="left:2210px;top:1352px;width:2px;height:34px;background:#37506f;"></div>
<div style="left:2258px;top:1352px;width:2px;height:34px;background:#37506f;"></div>
<div style="left:2308px;top:1352px;width:2px;height:34px;background:#37506f;"></div>
<div style="left:2358px;top:1352px;width:2px;height:34px;background:#37506f;"></div>
<div style="left:22px;top:1392px;width:2px;height:34px;background:#2a2a2a;"></div>
<div style="left:72px;top:1392px;width:2px;height:34px;background:#2a2a2a;"></div>
<div style="left:122px;top:1392px;width:2px;height:34px;background:#2a2a2a;"></div>
<div style="left:172px;top:1392px;width:2px;height:34px;background:#2a2a2a;"></div>
<div style="left:222px;top:1392px;width:2px;height:34px;background:#2a2a2a;"></div>
<div style="left:270px;top:1392px;width:2px;height:34px;background:#2a2a2a;"></div>
<div style="left:320px;top:1392px;width:2px;height:34px;background:#2a2a2a;"></div>
<div style="left:370px;top:1392px;width:2px;height:34px;background:#2a2a2a;"></div>
<div style="left:420px;top:1392px;width:2px;height:34px;background:#2a2a2a;"></div>
<div style="left:470px;top:1392px;width:2px;height:34px;background:#2a2a2a;"></div>
<div style="left:520px;top:1392px;width:2px;height:34px;background:#2a2a2a;"></div>
<div style="left:568px;top:1392px;width:2px;height:34px;background:#2a2a2a;"></div>
<div style="left:618px;top:1392px;width:2px;height:34px;background:#2a2a2a;"></div>
<div style="left:668px;top:1392px;width:2px;height:34px;background:#2a2a2a;"></div>
<div style="left:718px;top:1392px;width:2px;height:34px;background:#2a2a2a;"></div>
<div style="left:768px;top:1392px;width:2px;height:34px;background:#2a2a2a;"></div>
<div style="left:818px;top:1392px;width:2px;height:34px;background:#2a2a2a;"></div>
<div style="left:868px;top:1392px;width:2px;height:34px;background:#2a2a2a;"></div>
<div style="left:916px;top:1392px;width:2px;height:34px;background:#2a2a2a;"></div>
<div style="left:966px;top:1392px;width:2px;height:34px;background:#2a2a2a;"></div>
<div style="left:1016px;top:1392px;width:2px;height:34px;background:#2a2a2a;"></div>
<div style="left:1066px;top:1392px;width:2px;height:34px;background:#2a2a2a;"></div>
<div style="left:1116px;top:1392px;width:2px;height:34px;background:#2a2a2a;"></div>
<div style="left:1166px;top:1392px;width:2px;height:34px;background:#2a2a2a;"></div>
<div style="left:1216px;top:1392px;width:2px;height:34px;background:#2a2a2a;"></div>
<div style="left:1264px;top:1392px;width:2px;height:34px;background:#2a2a2a;"></div>
<div style="left:1314px;top:1392px;width:2px;height:34px;background:#2a2a2a;"></div>
<div style="left:1364px;top:1392px;width:2px;height:34px;background:#2a2a2a;"></div>
<div style="left:1414px;top:1392px;width:2px;height:34px;background:#2a2a2a;"></div>
<div style="left:1464px;top:1392px;width:2px;height:34px;background:#2a2a2a;"></div>
<div style="left:1514px;top:1392px;width:2px;height:34px;background:#2a2a2a;"></div>
<div style="left:1562px;top:1392px;width:2px;height:34px;background:#2a2a2a;"></div>
<div style="left:1612px;top:1392px;width:2px;height:34px;background:#2a2a2a;"></div>
<div style="left:1662px;top:1392px;width:2px;height:34px;background:#2a2a2a;"></div>
<div style="left:1712px;top:1392px;width:2px;height:34px;background:#2a2a2a;"></div>
<div style="left:1762px;top:1392px;width:2px;height:34px;background:#2a2a2a;"></div>
<div style="left:1812px;top:1392px;width:2px;height:34px;background:#2a2a2a;"></div>
<div style="left:1862px;top:1392px;width:2px;height:34px;background:#2a2a2a;"></div>
<div style="left:1910px;top:1392px;width:2px;height:34px;background:#2a2a2a;"></div>
<div style="left:1960px;top:1392px;width:2px;height:34px;background:#2a2a2a;"></div>
<div style="left:2010px;top:1392px;width:2px;height:34px;background:#2a2a2a;"></div>
<div style="left:2060px;top:1392px;width:2px;height:34px;background:#2a2a2a;"></div>
<div style="left:2110px;top:1392px;width:2px;height:34px;background:#2a2a2a;"></div>
<div style="left:2160px;top:1392px;width:2px;height:34px;background:#2a2a2a;"></div>
<div style="left:2210px;top:1392px;width:2px;height:34px;background:#2a2a2a;"></div>
<div style="left:2258px;top:1392px;width:2px;height:34px;background:#2a2a2a;"></div>
<div style="left:2308px;top:1392px;width:2px;height:34px;background:#2a2a2a;"></div>
<div style="left:2358px;top:1392px;width:2px;height:34px;background:#2a2a2a;"></div>
<div style="left:236px;top:104px;width:358px;height:4px;background:#d960a0;"></div>
<div style="left:606px;top:104px;width:38px;height:4px;background:#d960a0;"></div>
<div style="left:718px;top:104px;width:24px;height:4px;background:#d960a0;"></div>
<div style="left:806px;top:104px;width:36px;height:4px;background:#d960a0;"></div>
<div style="left:916px;top:104px;width:26px;height:4px;background:#d960a0;"></div>
<div style="left:1004px;top:104px;width:38px;height:4px;background:#d960a0;"></div>
<div style="left:1104px;top:104px;width:36px;height:4px;background:#d960a0;"></div>
<div style="left:1286px;top:104px;width:224px;height:4px;background:#d960a0;"></div>
<div style="left:1910px;top:104px;width:26px;height:4px;background:#d960a0;"></div>
<div style="left:2010px;top:104px;width:26px;height:4px;background:#d960a0;"></div>
<div style="left:2098px;top:104px;width:36px;height:4px;background:#d960a0;"></div>
<div style="left:2196px;top:104px;width:38px;height:4px;background:#d960a0;"></div>
<div style="left:1308px;top:110px;width:52px;height:4px;background:#d960a0;"></div>
<div style="left:1408px;top:110px;width:68px;height:4px;background:#d960a0;"></div>
<div style="left:1508px;top:116px;width:202px;height:4px;background:#d960a0;"></div>
<div style="left:1894px;top:116px;width:14px;height:4px;background:#d960a0;"></div>
<div style="left:330px;top:122px;width:10px;height:4px;background:#d960a0;"></div>
<div style="left:1352px;top:122px;width:12px;height:4px;background:#d960a0;"></div>
<div style="left:398px;top:128px;width:22px;height:4px;background:#d960a0;"></div>
<div style="left:526px;top:128px;width:8px;height:4px;background:#d960a0;"></div>
<div style="left:1354px;top:134px;width:8px;height:4px;background:#d960a0;"></div>
<div style="left:1404px;top:134px;width:6px;height:4px;background:#d960a0;"></div>
<div style="left:1454px;top:134px;width:6px;height:4px;background:#d960a0;"></div>
<div style="left:1020px;top:134px;width:6px;height:4px;background:#d960a0;"></div>
<div style="left:1032px;top:134px;width:6px;height:4px;background:#d960a0;"></div>
<div style="left:1044px;top:134px;width:6px;height:4px;background:#d960a0;"></div>
<div style="left:1058px;top:134px;width:6px;height:4px;background:#d960a0;"></div>
<div style="left:1070px;top:134px;width:6px;height:4px;background:#d960a0;"></div>
<div style="left:1082px;top:134px;width:6px;height:4px;background:#d960a0;"></div>
<div style="left:1094px;top:134px;width:6px;height:4px;background:#d960a0;"></div>
<div style="left:1108px;top:134px;width:6px;height:4px;background:#d960a0;"></div>
<div style="left:1120px;top:134px;width:6px;height:4px;background:#d960a0;"></div>
<div style="left:1132px;top:134px;width:6px;height:4px;background:#d960a0;"></div>
<div style="left:1144px;top:134px;width:6px;height:4px;background:#d960a0;"></div>
<div style="left:1156px;top:134px;width:6px;height:4px;background:#d960a0;"></div>
<div style="left:1170px;top:134px;width:6px;height:4px;background:#d960a0;"></div>
<div style="left:1182px;top:134px;width:6px;height:4px;background:#d960a0;"></div>
<div style="left:1194px;top:134px;width:6px;height:4px;background:#d960a0;"></div>
<div style="left:1206px;top:134px;width:6px;height:4px;background:#d960a0;"></div>
<div style="left:1218px;top:134px;width:6px;height:4px;background:#d960a0;"></div>
<div style="left:1232px;top:134px;width:6px;height:4px;background:#d960a0;"></div>
<div style="left:1244px;top:134px;width:6px;height:4px;background:#d960a0;"></div>
<div style="left:1256px;top:134px;width:6px;height:4px;background:#d960a0;"></div>
<div style="left:1268px;top:134px;width:6px;height:4px;background:#d960a0;"></div>
<div style="left:1282px;top:134px;width:6px;height:4px;background:#d960a0;"></div>
<div style="left:1294px;top:134px;width:6px;height:4px;background:#d960a0;"></div>
<div style="left:1306px;top:134px;width:6px;height:4px;background:#d960a0;"></div>
<div style="left:1202px;top:140px;width:38px;height:4px;background:#d960a0;"></div>
<div style="left:1252px;top:140px;width:38px;height:4px;background:#d960a0;"></div>
<div style="left:1408px;top:146px;width:8px;height:4px;background:#d960a0;"></div>
<div style="left:1756px;top:146px;width:8px;height:4px;background:#d960a0;"></div>
<div style="left:1854px;top:146px;width:8px;height:4px;background:#d960a0;"></div>
<div style="left:2104px;top:146px;width:6px;height:4px;background:#d960a0;"></div>
<div style="left:2152px;top:146px;width:10px;height:4px;background:#d960a0;"></div>
<div style="left:2202px;top:146px;width:8px;height:4px;background:#d960a0;"></div>
<div style="left:2302px;top:146px;width:8px;height:4px;background:#d960a0;"></div>
<div style="left:662px;top:152px;width:6px;height:4px;background:#d960a0;"></div>
<div style="left:762px;top:152px;width:6px;height:4px;background:#d960a0;"></div>
<div style="left:860px;top:152px;width:8px;height:4px;background:#d960a0;"></div>
<div style="left:960px;top:152px;width:6px;height:4px;background:#d960a0;"></div>
<div style="left:1954px;top:152px;width:6px;height:4px;background:#d960a0;"></div>
<div style="left:2054px;top:152px;width:6px;height:4px;background:#d960a0;"></div>
<div style="left:1716px;top:158px;width:2px;height:4px;background:#d960a0;"></div>
<div style="left:1728px;top:158px;width:2px;height:4px;background:#d960a0;"></div>
<div style="left:1740px;top:158px;width:4px;height:4px;background:#d960a0;"></div>
<div style="left:1814px;top:158px;width:4px;height:4px;background:#d960a0;"></div>
<div style="left:1829px;top:158px;width:2px;height:4px;background:#d960a0;"></div>
<div style="left:1841px;top:158px;width:2px;height:4px;background:#d960a0;"></div>
<div style="left:2124px;top:164px;width:8px;height:4px;background:#d960a0;"></div>
<div style="left:2148px;top:164px;width:8px;height:4px;background:#d960a0;"></div>
<div style="left:2174px;top:164px;width:8px;height:4px;background:#d960a0;"></div>
<div style="left:2198px;top:164px;width:8px;height:4px;background:#d960a0;"></div>
<div style="left:2220px;top:164px;width:10px;height:4px;background:#d960a0;"></div>
<div style="left:2248px;top:164px;width:8px;height:4px;background:#d960a0;"></div>
<div style="left:2272px;top:164px;width:8px;height:4px;background:#d960a0;"></div>
<div style="left:196px;top:176px;width:422px;height:12px;background:#2c2c2c;"></div>
<div style="left:1217px;top:176px;width:85px;height:12px;background:#2c2c2c;"></div>
<div style="left:1315px;top:176px;width:397px;height:12px;background:#2c2c2c;"></div>
<div style="left:1516px;top:190px;width:196px;height:12px;background:#2c2c2c;"></div>
<div style="left:421px;top:204px;width:197px;height:12px;background:#2c2c2c;"></div>
<div style="left:96px;top:218px;width:27px;height:12px;background:#2c2c2c;"></div>
<div style="left:196px;top:218px;width:26px;height:12px;background:#2c2c2c;"></div>
<div style="left:521px;top:218px;width:147px;height:12px;background:#2c2c2c;"></div>
<div style="left:719px;top:218px;width:49px;height:12px;background:#2c2c2c;"></div>
<div style="left:819px;top:218px;width:49px;height:12px;background:#2c2c2c;"></div>
<div style="left:917px;top:218px;width:49px;height:12px;background:#2c2c2c;"></div>
<div style="left:1714px;top:218px;width:48px;height:12px;background:#2c2c2c;"></div>
<div style="left:1814px;top:218px;width:48px;height:12px;background:#2c2c2c;"></div>
<div style="left:1911px;top:218px;width:49px;height:12px;background:#2c2c2c;"></div>
<div style="left:2011px;top:218px;width:49px;height:12px;background:#2c2c2c;"></div>
<div style="left:2284px;top:218px;width:24px;height:12px;background:#2c2c2c;"></div>
<div style="left:819px;top:231px;width:49px;height:12px;background:#2c2c2c;"></div>
<div style="left:917px;top:231px;width:49px;height:12px;background:#2c2c2c;"></div>
<div style="left:1018px;top:246px;width:92px;height:12px;background:#2c2c2c;"></div>
<div style="left:1116px;top:246px;width:112px;height:12px;background:#2c2c2c;"></div>
<div style="left:1088px;top:260px;width:28px;height:12px;background:#2c2c2c;"></div>
<div style="left:1188px;top:260px;width:28px;height:12px;background:#2c2c2c;"></div>
<div style="left:222px;top:799px;width:396px;height:11px;background:#2c2c2c;"></div>
<div style="left:1315px;top:799px;width:397px;height:11px;background:#2c2c2c;"></div>
<div style="left:620px;top:826px;width:48px;height:11px;background:#2c2c2c;"></div>
<div style="left:718px;top:826px;width:50px;height:11px;background:#2c2c2c;"></div>
<div style="left:818px;top:826px;width:50px;height:11px;background:#2c2c2c;"></div>
<div style="left:917px;top:826px;width:49px;height:11px;background:#2c2c2c;"></div>
<div style="left:1714px;top:826px;width:48px;height:11px;background:#2c2c2c;"></div>
<div style="left:1813px;top:826px;width:49px;height:11px;background:#2c2c2c;"></div>
<div style="left:1911px;top:826px;width:49px;height:11px;background:#2c2c2c;"></div>
<div style="left:2011px;top:826px;width:49px;height:11px;background:#2c2c2c;"></div>
<div style="left:668px;top:838px;width:22px;height:11px;background:#2c2c2c;"></div>
<div style="left:694px;top:838px;width:24px;height:11px;background:#2c2c2c;"></div>
<div style="left:768px;top:838px;width:22px;height:11px;background:#2c2c2c;"></div>
<div style="left:794px;top:838px;width:24px;height:11px;background:#2c2c2c;"></div>
<div style="left:868px;top:838px;width:20px;height:11px;background:#2c2c2c;"></div>
<div style="left:892px;top:838px;width:24px;height:11px;background:#2c2c2c;"></div>
<div style="left:966px;top:838px;width:22px;height:11px;background:#2c2c2c;"></div>
<div style="left:992px;top:838px;width:24px;height:11px;background:#2c2c2c;"></div>
<div style="left:1763px;top:838px;width:22px;height:11px;background:#2c2c2c;"></div>
<div style="left:1787px;top:838px;width:25px;height:11px;background:#2c2c2c;"></div>
<div style="left:1862px;top:838px;width:22px;height:11px;background:#2c2c2c;"></div>
<div style="left:1887px;top:838px;width:24px;height:11px;background:#2c2c2c;"></div>
<div style="left:1961px;top:838px;width:22px;height:11px;background:#2c2c2c;"></div>
<div style="left:1987px;top:838px;width:23px;height:11px;background:#2c2c2c;"></div>
<div style="left:2061px;top:838px;width:22px;height:11px;background:#2c2c2c;"></div>
<div style="left:2086px;top:838px;width:24px;height:11px;background:#2c2c2c;"></div>
<div style="left:1004px;top:851px;width:13px;height:11px;background:#2c2c2c;"></div>
<div style="left:1054px;top:851px;width:13px;height:11px;background:#2c2c2c;"></div>
<div style="left:1104px;top:851px;width:13px;height:11px;background:#2c2c2c;"></div>
<div style="left:1154px;top:851px;width:13px;height:11px;background:#2c2c2c;"></div>
<div style="left:1700px;top:851px;width:12px;height:11px;background:#2c2c2c;"></div>
<div style="left:606px;top:864px;width:12px;height:11px;background:#2c2c2c;"></div>
<div style="left:1018px;top:876px;width:92px;height:11px;background:#2c2c2c;"></div>
<div style="left:1116px;top:876px;width:99px;height:11px;background:#2c2c2c;"></div>
<div style="left:2112px;top:888px;width:49px;height:11px;background:#2c2c2c;"></div>
<div style="left:2211px;top:888px;width:48px;height:11px;background:#2c2c2c;"></div>
<div style="left:691px;top:812px;width:2px;height:11px;background:#2c2c2c;"></div>
<div style="left:790px;top:812px;width:2px;height:11px;background:#2c2c2c;"></div>
<div style="left:890px;top:812px;width:2px;height:11px;background:#2c2c2c;"></div>
<div style="left:990px;top:812px;width:2px;height:11px;background:#2c2c2c;"></div>
<div style="left:1785px;top:812px;width:2px;height:11px;background:#2c2c2c;"></div>
<div style="left:1885px;top:812px;width:2px;height:11px;background:#2c2c2c;"></div>
<div style="left:1984px;top:812px;width:2px;height:11px;background:#2c2c2c;"></div>
<div style="left:2083px;top:812px;width:2px;height:11px;background:#2c2c2c;"></div>
<div style="left:22px;top:102px;width:2px;height:68px;background:#2a2a2a;"></div>
<div style="left:72px;top:102px;width:2px;height:68px;background:#2a2a2a;"></div>
<div style="left:122px;top:102px;width:2px;height:68px;background:#2a2a2a;"></div>
<div style="left:172px;top:102px;width:2px;height:68px;background:#2a2a2a;"></div>
<div style="left:222px;top:102px;width:2px;height:68px;background:#2a2a2a;"></div>
<div style="left:270px;top:102px;width:2px;height:68px;background:#2a2a2a;"></div>
<div style="left:320px;top:102px;width:2px;height:68px;background:#2a2a2a;"></div>
<div style="left:370px;top:102px;width:2px;height:68px;background:#2a2a2a;"></div>
<div style="left:420px;top:102px;width:2px;height:68px;background:#2a2a2a;"></div>
<div style="left:470px;top:102px;width:2px;height:68px;background:#2a2a2a;"></div>
<div style="left:520px;top:102px;width:2px;height:68px;background:#2a2a2a;"></div>
<div style="left:568px;top:102px;width:2px;height:68px;background:#2a2a2a;"></div>
<div style="left:618px;top:102px;width:2px;height:68px;background:#2a2a2a;"></div>
<div style="left:668px;top:102px;width:2px;height:68px;background:#2a2a2a;"></div>
<div style="left:718px;top:102px;width:2px;height:68px;background:#2a2a2a;"></div>
<div style="left:768px;top:102px;width:2px;height:68px;background:#2a2a2a;"></div>
<div style="left:818px;top:102px;width:2px;height:68px;background:#2a2a2a;"></div>
<div style="left:868px;top:102px;width:2px;height:68px;background:#2a2a2a;"></div>
<div style="left:916px;top:102px;width:2px;height:68px;background:#2a2a2a;"></div>
<div style="left:966px;top:102px;width:2px;height:68px;background:#2a2a2a;"></div>
<div style="left:1016px;top:102px;width:2px;height:68px;background:#2a2a2a;"></div>
<div style="left:1066px;top:102px;width:2px;height:68px;background:#2a2a2a;"></div>
<div style="left:1116px;top:102px;width:2px;height:68px;background:#2a2a2a;"></div>
<div style="left:1166px;top:102px;width:2px;height:68px;background:#2a2a2a;"></div>
<div style="left:1216px;top:102px;width:2px;height:68px;background:#2a2a2a;"></div>
<div style="left:1264px;top:102px;width:2px;height:68px;background:#2a2a2a;"></div>
<div style="left:1314px;top:102px;width:2px;height:68px;background:#2a2a2a;"></div>
<div style="left:1364px;top:102px;width:2px;height:68px;background:#2a2a2a;"></div>
<div style="left:1414px;top:102px;width:2px;height:68px;background:#2a2a2a;"></div>
<div style="left:1464px;top:102px;width:2px;height:68px;background:#2a2a2a;"></div>
<div style="left:1514px;top:102px;width:2px;height:68px;background:#2a2a2a;"></div>
<div style="left:1562px;top:102px;width:2px;height:68px;background:#2a2a2a;"></div>
<div style="left:1612px;top:102px;width:2px;height:68px;background:#2a2a2a;"></div>
<div style="left:1662px;top:102px;width:2px;height:68px;background:#2a2a2a;"></div>
<div style="left:1712px;top:102px;width:2px;height:68px;background:#2a2a2a;"></div>
<div style="left:1762px;top:102px;width:2px;height:68px;background:#2a2a2a;"></div>
<div style="left:1812px;top:102px;width:2px;height:68px;background:#2a2a2a;"></div>
<div style="left:1862px;top:102px;width:2px;height:68px;background:#2a2a2a;"></div>
<div style="left:1910px;top:102px;width:2px;height:68px;background:#2a2a2a;"></div>
<div style="left:1960px;top:102px;width:2px;height:68px;background:#2a2a2a;"></div>
<div style="left:2010px;top:102px;width:2px;height:68px;background:#2a2a2a;"></div>
<div style="left:2060px;top:102px;width:2px;height:68px;background:#2a2a2a;"></div>
<div style="left:2110px;top:102px;width:2px;height:68px;background:#2a2a2a;"></div>
<div style="left:2160px;top:102px;width:2px;height:68px;background:#2a2a2a;"></div>
<div style="left:2210px;top:102px;width:2px;height:68px;background:#2a2a2a;"></div>
<div style="left:2258px;top:102px;width:2px;height:68px;background:#2a2a2a;"></div>
<div style="left:2308px;top:102px;width:2px;height:68px;background:#2a2a2a;"></div>
<div style="left:2358px;top:102px;width:2px;height:68px;background:#2a2a2a;"></div>
<div style="left:22px;top:174px;width:2px;height:104px;background:#2a2a2a;"></div>
<div style="left:72px;top:174px;width:2px;height:104px;background:#2a2a2a;"></div>
<div style="left:122px;top:174px;width:2px;height:104px;background:#2a2a2a;"></div>
<div style="left:172px;top:174px;width:2px;height:104px;background:#2a2a2a;"></div>
<div style="left:222px;top:174px;width:2px;height:104px;background:#2a2a2a;"></div>
<div style="left:270px;top:174px;width:2px;height:104px;background:#2a2a2a;"></div>
<div style="left:320px;top:174px;width:2px;height:104px;background:#2a2a2a;"></div>
<div style="left:370px;top:174px;width:2px;height:104px;background:#2a2a2a;"></div>
<div style="left:420px;top:174px;width:2px;height:104px;background:#2a2a2a;"></div>
<div style="left:470px;top:174px;width:2px;height:104px;background:#2a2a2a;"></div>
<div style="left:520px;top:174px;width:2px;height:104px;background:#2a2a2a;"></div>
<div style="left:568px;top:174px;width:2px;height:104px;background:#2a2a2a;"></div>
<div style="left:618px;top:174px;width:2px;height:104px;background:#2a2a2a;"></div>
<div style="left:668px;top:174px;width:2px;height:104px;background:#2a2a2a;"></div>
<div style="left:718px;top:174px;width:2px;height:104px;background:#2a2a2a;"></div>
<div style="left:768px;top:174px;width:2px;height:104px;background:#2a2a2a;"></div>
<div style="left:818px;top:174px;width:2px;height:104px;background:#2a2a2a;"></div>
<div style="left:868px;top:174px;width:2px;height:104px;background:#2a2a2a;"></div>
<div style="left:916px;top:174px;width:2px;height:104px;background:#2a2a2a;"></div>
<div style="left:966px;top:174px;width:2px;height:104px;background:#2a2a2a;"></div>
<div style="left:1016px;top:174px;width:2px;height:104px;background:#2a2a2a;"></div>
<div style="left:1066px;top:174px;width:2px;height:104px;background:#2a2a2a;"></div>
<div style="left:1116px;top:174px;width:2px;height:104px;background:#2a2a2a;"></div>
<div style="left:1166px;top:174px;width:2px;height:104px;background:#2a2a2a;"></div>
<div style="left:1216px;top:174px;width:2px;height:104px;background:#2a2a2a;"></div>
<div style="left:1264px;top:174px;width:2px;height:104px;background:#2a2a2a;"></div>
<div style="left:1314px;top:174px;width:2px;height:104px;background:#2a2a2a;"></div>
<div style="left:1364px;top:174px;width:2px;height:104px;background:#2a2a2a;"></div>
<div style="left:1414px;top:174px;width:2px;height:104px;background:#2a2a2a;"></div>
<div style="left:1464px;top:174px;width:2px;height:104px;background:#2a2a2a;"></div>
<div style="left:1514px;top:174px;width:2px;height:104px;background:#2a2a2a;"></div>
<div style="left:1562px;top:174px;width:2px;height:104px;background:#2a2a2a;"></div>
<div style="left:1612px;top:174px;width:2px;height:104px;background:#2a2a2a;"></div>
<div style="left:1662px;top:174px;width:2px;height:104px;background:#2a2a2a;"></div>
<div style="left:1712px;top:174px;width:2px;height:104px;background:#2a2a2a;"></div>
<div style="left:1762px;top:174px;width:2px;height:104px;background:#2a2a2a;"></div>
<div style="left:1812px;top:174px;width:2px;height:104px;background:#2a2a2a;"></div>
<div style="left:1862px;top:174px;width:2px;height:104px;background:#2a2a2a;"></div>
<div style="left:1910px;top:174px;width:2px;height:104px;background:#2a2a2a;"></div>
<div style="left:1960px;top:174px;width:2px;height:104px;background:#2a2a2a;"></div>
<div style="left:2010px;top:174px;width:2px;height:104px;background:#2a2a2a;"></div>
<div style="left:2060px;top:174px;width:2px;height:104px;background:#2a2a2a;"></div>
<div style="left:2110px;top:174px;width:2px;height:104px;background:#2a2a2a;"></div>
<div style="left:2160px;top:174px;width:2px;height:104px;background:#2a2a2a;"></div>
<div style="left:2210px;top:174px;width:2px;height:104px;background:#2a2a2a;"></div>
<div style="left:2258px;top:174px;width:2px;height:104px;background:#2a2a2a;"></div>
<div style="left:2308px;top:174px;width:2px;height:104px;background:#2a2a2a;"></div>
<div style="left:2358px;top:174px;width:2px;height:104px;background:#2a2a2a;"></div>
<div style="left:22px;top:504px;width:2px;height:68px;background:#2a2a2a;"></div>
<div style="left:72px;top:504px;width:2px;height:68px;background:#2a2a2a;"></div>
<div style="left:122px;top:504px;width:2px;height:68px;background:#2a2a2a;"></div>
<div style="left:172px;top:504px;width:2px;height:68px;background:#2a2a2a;"></div>
<div style="left:222px;top:504px;width:2px;height:68px;background:#2a2a2a;"></div>
<div style="left:270px;top:504px;width:2px;height:68px;background:#2a2a2a;"></div>
<div style="left:320px;top:504px;width:2px;height:68px;background:#2a2a2a;"></div>
<div style="left:370px;top:504px;width:2px;height:68px;background:#2a2a2a;"></div>
<div style="left:420px;top:504px;width:2px;height:68px;background:#2a2a2a;"></div>
<div style="left:470px;top:504px;width:2px;height:68px;background:#2a2a2a;"></div>
<div style="left:520px;top:504px;width:2px;height:68px;background:#2a2a2a;"></div>
<div style="left:568px;top:504px;width:2px;height:68px;background:#2a2a2a;"></div>
<div style="left:618px;top:504px;width:2px;height:68px;background:#2a2a2a;"></div>
<div style="left:668px;top:504px;width:2px;height:68px;background:#2a2a2a;"></div>
<div style="left:718px;top:504px;width:2px;height:68px;background:#2a2a2a;"></div>
<div style="left:768px;top:504px;width:2px;height:68px;background:#2a2a2a;"></div>
<div style="left:818px;top:504px;width:2px;height:68px;background:#2a2a2a;"></div>
<div style="left:868px;top:504px;width:2px;height:68px;background:#2a2a2a;"></div>
<div style="left:916px;top:504px;width:2px;height:68px;background:#2a2a2a;"></div>
<div style="left:966px;top:504px;width:2px;height:68px;background:#2a2a2a;"></div>
<div style="left:1016px;top:504px;width:2px;height:68px;background:#2a2a2a;"></div>
<div style="left:1066px;top:504px;width:2px;height:68px;background:#2a2a2a;"></div>
<div style="left:1116px;top:504px;width:2px;height:68px;background:#2a2a2a;"></div>
<div style="left:1166px;top:504px;width:2px;height:68px;background:#2a2a2a;"></div>
<div style="left:1216px;top:504px;width:2px;height:68px;background:#2a2a2a;"></div>
<div style="left:1264px;top:504px;width:2px;height:68px;background:#2a2a2a;"></div>
<div style="left:1314px;top:504px;width:2px;height:68px;background:#2a2a2a;"></div>
<div style="left:1364px;top:504px;width:2px;height:68px;background:#2a2a2a;"></div>
<div style="left:1414px;top:504px;width:2px;height:68px;background:#2a2a2a;"></div>
<div style="left:1464px;top:504px;width:2px;height:68px;background:#2a2a2a;"></div>
<div style="left:1514px;top:504px;width:2px;height:68px;background:#2a2a2a;"></div>
<div style="left:1562px;top:504px;width:2px;height:68px;background:#2a2a2a;"></div>
<div style="left:1612px;top:504px;width:2px;height:68px;background:#2a2a2a;"></div>
<div style="left:1662px;top:504px;width:2px;height:68px;background:#2a2a2a;"></div>
<div style="left:1712px;top:504px;width:2px;height:68px;background:#2a2a2a;"></div>
<div style="left:1762px;top:504px;width:2px;height:68px;background:#2a2a2a;"></div>
<div style="left:1812px;top:504px;width:2px;height:68px;background:#2a2a2a;"></div>
<div style="left:1862px;top:504px;width:2px;height:68px;background:#2a2a2a;"></div>
<div style="left:1910px;top:504px;width:2px;height:68px;background:#2a2a2a;"></div>
<div style="left:1960px;top:504px;width:2px;height:68px;background:#2a2a2a;"></div>
<div style="left:2010px;top:504px;width:2px;height:68px;background:#2a2a2a;"></div>
<div style="left:2060px;top:504px;width:2px;height:68px;background:#2a2a2a;"></div>
<div style="left:2110px;top:504px;width:2px;height:68px;background:#2a2a2a;"></div>
<div style="left:2160px;top:504px;width:2px;height:68px;background:#2a2a2a;"></div>
<div style="left:2210px;top:504px;width:2px;height:68px;background:#2a2a2a;"></div>
<div style="left:2258px;top:504px;width:2px;height:68px;background:#2a2a2a;"></div>
<div style="left:2308px;top:504px;width:2px;height:68px;background:#2a2a2a;"></div>
<div style="left:2358px;top:504px;width:2px;height:68px;background:#2a2a2a;"></div>
<div style="left:22px;top:798px;width:2px;height:104px;background:#2a2a2a;"></div>
<div style="left:72px;top:798px;width:2px;height:104px;background:#2a2a2a;"></div>
<div style="left:122px;top:798px;width:2px;height:104px;background:#2a2a2a;"></div>
<div style="left:172px;top:798px;width:2px;height:104px;background:#2a2a2a;"></div>
<div style="left:222px;top:798px;width:2px;height:104px;background:#2a2a2a;"></div>
<div style="left:270px;top:798px;width:2px;height:104px;background:#2a2a2a;"></div>
<div style="left:320px;top:798px;width:2px;height:104px;background:#2a2a2a;"></div>
<div style="left:370px;top:798px;width:2px;height:104px;background:#2a2a2a;"></div>
<div style="left:420px;top:798px;width:2px;height:104px;background:#2a2a2a;"></div>
<div style="left:470px;top:798px;width:2px;height:104px;background:#2a2a2a;"></div>
<div style="left:520px;top:798px;width:2px;height:104px;background:#2a2a2a;"></div>
<div style="left:568px;top:798px;width:2px;height:104px;background:#2a2a2a;"></div>
<div style="left:618px;top:798px;width:2px;height:104px;background:#2a2a2a;"></div>
<div style="left:668px;top:798px;width:2px;height:104px;background:#2a2a2a;"></div>
<div style="left:718px;top:798px;width:2px;height:104px;background:#2a2a2a;"></div>
<div style="left:768px;top:798px;width:2px;height:104px;background:#2a2a2a;"></div>
<div style="left:818px;top:798px;width:2px;height:104px;background:#2a2a2a;"></div>
<div style="left:868px;top:798px;width:2px;height:104px;background:#2a2a2a;"></div>
<div style="left:916px;top:798px;width:2px;height:104px;background:#2a2a2a;"></div>
<div style="left:966px;top:798px;width:2px;height:104px;background:#2a2a2a;"></div>
<div style="left:1016px;top:798px;width:2px;height:104px;background:#2a2a2a;"></div>
<div style="left:1066px;top:798px;width:2px;height:104px;background:#2a2a2a;"></div>
<div style="left:1116px;top:798px;width:2px;height:104px;background:#2a2a2a;"></div>
<div style="left:1166px;top:798px;width:2px;height:104px;background:#2a2a2a;"></div>
<div style="left:1216px;top:798px;width:2px;height:104px;background:#2a2a2a;"></div>
<div style="left:1264px;top:798px;width:2px;height:104px;background:#2a2a2a;"></div>
<div style="left:1314px;top:798px;width:2px;height:104px;background:#2a2a2a;"></div>
<div style="left:1364px;top:798px;width:2px;height:104px;background:#2a2a2a;"></div>
<div style="left:1414px;top:798px;width:2px;height:104px;background:#2a2a2a;"></div>
<div style="left:1464px;top:798px;width:2px;height:104px;background:#2a2a2a;"></div>
<div style="left:1514px;top:798px;width:2px;height:104px;background:#2a2a2a;"></div>
<div style="left:1562px;top:798px;width:2px;height:104px;background:#2a2a2a;"></div>
<div style="left:1612px;top:798px;width:2px;height:104px;background:#2a2a2a;"></div>
<div style="left:1662px;top:798px;width:2px;height:104px;background:#2a2a2a;"></div>
<div style="left:1712px;top:798px;width:2px;height:104px;background:#2a2a2a;"></div>
<div style="left:1762px;top:798px;width:2px;height:104px;background:#2a2a2a;"></div>
<div style="left:1812px;top:798px;width:2px;height:104px;background:#2a2a2a;"></div>
<div style="left:1862px;top:798px;width:2px;height:104px;background:#2a2a2a;"></div>
<div style="left:1910px;top:798px;width:2px;height:104px;background:#2a2a2a;"></div>
<div style="left:1960px;top:798px;width:2px;height:104px;background:#2a2a2a;"></div>
<div style="left:2010px;top:798px;width:2px;height:104px;background:#2a2a2a;"></div>
<div style="left:2060px;top:798px;width:2px;height:104px;background:#2a2a2a;"></div>
<div style="left:2110px;top:798px;width:2px;height:104px;background:#2a2a2a;"></div>
<div style="left:2160px;top:798px;width:2px;height:104px;background:#2a2a2a;"></div>
<div style="left:2210px;top:798px;width:2px;height:104px;background:#2a2a2a;"></div>
<div style="left:2258px;top:798px;width:2px;height:104px;background:#2a2a2a;"></div>
<div style="left:2308px;top:798px;width:2px;height:104px;background:#2a2a2a;"></div>
<div style="left:2358px;top:798px;width:2px;height:104px;background:#2a2a2a;"></div>
<div style="left:618px;top:506px;width:50px;height:12px;background:#a070b2;"></div>
<div style="left:618px;top:506px;width:1.5px;height:12px;background:#80588f;"></div>
<div style="left:618px;top:520px;width:50px;height:12px;background:#a070b2;"></div>
<div style="left:618px;top:520px;width:1.5px;height:12px;background:#80588f;"></div>
<div style="left:718px;top:506px;width:50px;height:12px;background:#a070b2;"></div>
<div style="left:718px;top:506px;width:1.5px;height:12px;background:#80588f;"></div>
<div style="left:718px;top:520px;width:50px;height:12px;background:#a070b2;"></div>
<div style="left:718px;top:520px;width:1.5px;height:12px;background:#80588f;"></div>
<div style="left:817px;top:506px;width:51px;height:12px;background:#a070b2;"></div>
<div style="left:817px;top:506px;width:1.5px;height:12px;background:#80588f;"></div>
<div style="left:817px;top:520px;width:51px;height:12px;background:#a070b2;"></div>
<div style="left:817px;top:520px;width:1.5px;height:12px;background:#80588f;"></div>
<div style="left:916px;top:506px;width:50px;height:12px;background:#a070b2;"></div>
<div style="left:916px;top:506px;width:1.5px;height:12px;background:#80588f;"></div>
<div style="left:916px;top:520px;width:50px;height:12px;background:#a070b2;"></div>
<div style="left:916px;top:520px;width:1.5px;height:12px;background:#80588f;"></div>
<div style="left:1712px;top:506px;width:50px;height:12px;background:#a070b2;"></div>
<div style="left:1712px;top:506px;width:1.5px;height:12px;background:#80588f;"></div>
<div style="left:1712px;top:520px;width:50px;height:12px;background:#a070b2;"></div>
<div style="left:1712px;top:520px;width:1.5px;height:12px;background:#80588f;"></div>
<div style="left:1811px;top:506px;width:51px;height:12px;background:#a070b2;"></div>
<div style="left:1811px;top:506px;width:1.5px;height:12px;background:#80588f;"></div>
<div style="left:1811px;top:520px;width:51px;height:12px;background:#a070b2;"></div>
<div style="left:1811px;top:520px;width:1.5px;height:12px;background:#80588f;"></div>
<div style="left:1910px;top:506px;width:50px;height:12px;background:#a070b2;"></div>
<div style="left:1910px;top:506px;width:1.5px;height:12px;background:#80588f;"></div>
<div style="left:1910px;top:520px;width:50px;height:12px;background:#a070b2;"></div>
<div style="left:1910px;top:520px;width:1.5px;height:12px;background:#80588f;"></div>
<div style="left:2009px;top:506px;width:51px;height:12px;background:#a070b2;"></div>
<div style="left:2009px;top:506px;width:1.5px;height:12px;background:#80588f;"></div>
<div style="left:2009px;top:520px;width:51px;height:12px;background:#a070b2;"></div>
<div style="left:2009px;top:520px;width:1.5px;height:12px;background:#80588f;"></div>
<div style="left:95px;top:520px;width:27px;height:12px;background:#a070b2;"></div>
<div style="left:95px;top:520px;width:1.5px;height:12px;background:#80588f;"></div>
<div style="left:195px;top:520px;width:27px;height:12px;background:#a070b2;"></div>
<div style="left:195px;top:520px;width:1.5px;height:12px;background:#80588f;"></div>
<div style="left:520px;top:520px;width:48px;height:12px;background:#a070b2;"></div>
<div style="left:520px;top:520px;width:1.5px;height:12px;background:#80588f;"></div>
<div style="left:2283px;top:520px;width:25px;height:12px;background:#a070b2;"></div>
<div style="left:2283px;top:520px;width:1.5px;height:12px;background:#80588f;"></div>
<div style="left:197px;top:282px;width:124px;height:34px;background:#5d3f6e;"></div>
<div style="left:198.5px;top:283.5px;width:122px;height:31px;background:#ad7ac2;"></div>
<div style="left:197px;top:316px;width:124px;height:36px;background:#5d3f6e;"></div>
<div style="left:198.5px;top:316px;width:122.5px;height:36px;background:#8a83d0;"></div>
<div style="left:222px;top:316px;width:1.5px;height:36px;background:#6d68ad;"></div>
<div style="left:270px;top:316px;width:1.5px;height:36px;background:#6d68ad;"></div>
<div style="left:320px;top:316px;width:1.5px;height:36px;background:#6d68ad;"></div>
<div style="left:199px;top:318px;width:23.5px;height:5.7px;background:#4f4a7a;"></div>
<div style="left:199px;top:330px;width:23.5px;height:2px;background:#4f4a7a;"></div>
<div style="left:199px;top:346px;width:23.5px;height:2px;background:#4f4a7a;"></div>
<div style="left:224px;top:320px;width:22.5px;height:2px;background:#4f4a7a;"></div>
<div style="left:224px;top:324px;width:22.5px;height:2px;background:#4f4a7a;"></div>
<div style="left:224px;top:328px;width:22.5px;height:2px;background:#4f4a7a;"></div>
<div style="left:224px;top:348px;width:22.5px;height:2px;background:#4f4a7a;"></div>
<div style="left:248px;top:318px;width:23px;height:4px;background:#4f4a7a;"></div>
<div style="left:248px;top:324px;width:23px;height:4px;background:#4f4a7a;"></div>
<div style="left:248px;top:332px;width:23px;height:2px;background:#4f4a7a;"></div>
<div style="left:248px;top:350px;width:23px;height:2px;background:#4f4a7a;"></div>
<div style="left:272.5px;top:320px;width:20.5px;height:2px;background:#4f4a7a;"></div>
<div style="left:272.5px;top:324px;width:20.5px;height:2px;background:#4f4a7a;"></div>
<div style="left:272.5px;top:328px;width:20.5px;height:2px;background:#4f4a7a;"></div>
<div style="left:272.5px;top:332px;width:20.5px;height:2px;background:#4f4a7a;"></div>
<div style="left:272.5px;top:344px;width:20.5px;height:2px;background:#4f4a7a;"></div>
<div style="left:294.5px;top:318px;width:26px;height:5.7px;background:#4f4a7a;"></div>
<div style="left:294.5px;top:330px;width:26px;height:2px;background:#4f4a7a;"></div>
<div style="left:294.5px;top:346px;width:26px;height:2px;background:#4f4a7a;"></div>
<div style="left:321px;top:282px;width:100px;height:34px;background:#5d3f6e;"></div>
<div style="left:322.5px;top:283.5px;width:98px;height:31px;background:#ad7ac2;"></div>
<div style="left:321px;top:316px;width:100px;height:36px;background:#5d3f6e;"></div>
<div style="left:322.5px;top:316px;width:98.5px;height:36px;background:#8a83d0;"></div>
<div style="left:370px;top:316px;width:1.5px;height:36px;background:#6d68ad;"></div>
<div style="left:420px;top:316px;width:1.5px;height:36px;background:#6d68ad;"></div>
<div style="left:323px;top:320px;width:22.5px;height:2px;background:#34304f;"></div>
<div style="left:323px;top:324px;width:22.5px;height:2px;background:#34304f;"></div>
<div style="left:323px;top:328px;width:22.5px;height:2px;background:#34304f;"></div>
<div style="left:323px;top:348px;width:22.5px;height:2px;background:#34304f;"></div>
<div style="left:347px;top:318px;width:23px;height:4px;background:#34304f;"></div>
<div style="left:347px;top:324px;width:23px;height:4px;background:#34304f;"></div>
<div style="left:347px;top:332px;width:23px;height:2px;background:#34304f;"></div>
<div style="left:347px;top:350px;width:23px;height:2px;background:#34304f;"></div>
<div style="left:371.5px;top:320px;width:21px;height:2px;background:#34304f;"></div>
<div style="left:371.5px;top:324px;width:21px;height:2px;background:#34304f;"></div>
<div style="left:371.5px;top:328px;width:21px;height:2px;background:#34304f;"></div>
<div style="left:371.5px;top:332px;width:21px;height:2px;background:#34304f;"></div>
<div style="left:371.5px;top:344px;width:21px;height:2px;background:#34304f;"></div>
<div style="left:394px;top:318px;width:26.5px;height:5.7px;background:#34304f;"></div>
<div style="left:394px;top:330px;width:26.5px;height:2px;background:#34304f;"></div>
<div style="left:394px;top:346px;width:26.5px;height:2px;background:#34304f;"></div>
<div style="left:421px;top:282px;width:100px;height:34px;background:#5d3f6e;"></div>
<div style="left:422.5px;top:283.5px;width:98px;height:31px;background:#ad7ac2;"></div>
<div style="left:421px;top:316px;width:100px;height:36px;background:#5d3f6e;"></div>
<div style="left:422.5px;top:316px;width:98.5px;height:36px;background:#8a83d0;"></div>
<div style="left:470px;top:316px;width:1.5px;height:36px;background:#6d68ad;"></div>
<div style="left:520px;top:316px;width:1.5px;height:36px;background:#6d68ad;"></div>
<div style="left:423px;top:320px;width:22.5px;height:2px;background:#34304f;"></div>
<div style="left:423px;top:324px;width:22.5px;height:2px;background:#34304f;"></div>
<div style="left:423px;top:328px;width:22.5px;height:2px;background:#34304f;"></div>
<div style="left:423px;top:348px;width:22.5px;height:2px;background:#34304f;"></div>
<div style="left:447px;top:318px;width:23px;height:4px;background:#34304f;"></div>
<div style="left:447px;top:324px;width:23px;height:4px;background:#34304f;"></div>
<div style="left:447px;top:332px;width:23px;height:2px;background:#34304f;"></div>
<div style="left:447px;top:350px;width:23px;height:2px;background:#34304f;"></div>
<div style="left:471.5px;top:320px;width:21px;height:2px;background:#34304f;"></div>
<div style="left:471.5px;top:324px;width:21px;height:2px;background:#34304f;"></div>
<div style="left:471.5px;top:328px;width:21px;height:2px;background:#34304f;"></div>
<div style="left:471.5px;top:332px;width:21px;height:2px;background:#34304f;"></div>
<div style="left:471.5px;top:344px;width:21px;height:2px;background:#34304f;"></div>
<div style="left:494px;top:318px;width:26.5px;height:5.7px;background:#34304f;"></div>
<div style="left:494px;top:330px;width:26.5px;height:2px;background:#34304f;"></div>
<div style="left:494px;top:346px;width:26.5px;height:2px;background:#34304f;"></div>
<div style="left:521px;top:282px;width:98px;height:34px;background:#5d3f6e;"></div>
<div style="left:522.5px;top:283.5px;width:96px;height:31px;background:#ad7ac2;"></div>
<div style="left:521px;top:316px;width:98px;height:36px;background:#5d3f6e;"></div>
<div style="left:522.5px;top:316px;width:96.5px;height:36px;background:#8a83d0;"></div>
<div style="left:568px;top:316px;width:1.5px;height:36px;background:#6d68ad;"></div>
<div style="left:523px;top:320px;width:22.5px;height:2px;background:#4f4a7a;"></div>
<div style="left:523px;top:324px;width:22.5px;height:2px;background:#4f4a7a;"></div>
<div style="left:523px;top:328px;width:22.5px;height:2px;background:#4f4a7a;"></div>
<div style="left:523px;top:348px;width:22.5px;height:2px;background:#4f4a7a;"></div>
<div style="left:547px;top:318px;width:23px;height:4px;background:#4f4a7a;"></div>
<div style="left:547px;top:324px;width:23px;height:4px;background:#4f4a7a;"></div>
<div style="left:547px;top:332px;width:23px;height:2px;background:#4f4a7a;"></div>
<div style="left:547px;top:350px;width:23px;height:2px;background:#4f4a7a;"></div>
<div style="left:571.5px;top:320px;width:21px;height:2px;background:#4f4a7a;"></div>
<div style="left:571.5px;top:324px;width:21px;height:2px;background:#4f4a7a;"></div>
<div style="left:571.5px;top:328px;width:21px;height:2px;background:#4f4a7a;"></div>
<div style="left:571.5px;top:332px;width:21px;height:2px;background:#4f4a7a;"></div>
<div style="left:571.5px;top:344px;width:21px;height:2px;background:#4f4a7a;"></div>
<div style="left:594px;top:318px;width:24.5px;height:5.7px;background:#4f4a7a;"></div>
<div style="left:594px;top:330px;width:24.5px;height:2px;background:#4f4a7a;"></div>
<div style="left:594px;top:346px;width:24.5px;height:2px;background:#4f4a7a;"></div>
<div style="left:1216px;top:282px;width:86px;height:34px;background:#5d3f6e;"></div>
<div style="left:1217.5px;top:283.5px;width:84px;height:31px;background:#ad7ac2;"></div>
<div style="left:1216px;top:316px;width:86px;height:36px;background:#5d3f6e;"></div>
<div style="left:1217.5px;top:316px;width:84.5px;height:36px;background:#8a83d0;"></div>
<div style="left:1264px;top:316px;width:1.5px;height:36px;background:#6d68ad;"></div>
<div style="left:1218px;top:320px;width:22.5px;height:2px;background:#4f4a7a;"></div>
<div style="left:1218px;top:324px;width:22.5px;height:2px;background:#4f4a7a;"></div>
<div style="left:1218px;top:328px;width:22.5px;height:2px;background:#4f4a7a;"></div>
<div style="left:1218px;top:348px;width:22.5px;height:2px;background:#4f4a7a;"></div>
<div style="left:1242px;top:318px;width:23px;height:4px;background:#4f4a7a;"></div>
<div style="left:1242px;top:324px;width:23px;height:4px;background:#4f4a7a;"></div>
<div style="left:1242px;top:332px;width:23px;height:2px;background:#4f4a7a;"></div>
<div style="left:1242px;top:350px;width:23px;height:2px;background:#4f4a7a;"></div>
<div style="left:1266.5px;top:320px;width:21px;height:2px;background:#4f4a7a;"></div>
<div style="left:1266.5px;top:324px;width:21px;height:2px;background:#4f4a7a;"></div>
<div style="left:1266.5px;top:328px;width:21px;height:2px;background:#4f4a7a;"></div>
<div style="left:1266.5px;top:332px;width:21px;height:2px;background:#4f4a7a;"></div>
<div style="left:1266.5px;top:344px;width:21px;height:2px;background:#4f4a7a;"></div>
<div style="left:1289px;top:318px;width:12.5px;height:5.7px;background:#4f4a7a;"></div>
<div style="left:1289px;top:330px;width:12.5px;height:2px;background:#4f4a7a;"></div>
<div style="left:1289px;top:346px;width:12.5px;height:2px;background:#4f4a7a;"></div>
<div style="left:1302px;top:282px;width:13px;height:34px;background:#676a6f;"></div>
<div style="left:1315px;top:282px;width:100px;height:34px;background:#5d3f6e;"></div>
<div style="left:1316.5px;top:283.5px;width:98px;height:31px;background:#ad7ac2;"></div>
<div style="left:1315px;top:316px;width:100px;height:36px;background:#5d3f6e;"></div>
<div style="left:1316.5px;top:316px;width:98.5px;height:36px;background:#8a83d0;"></div>
<div style="left:1364px;top:316px;width:1.5px;height:36px;background:#6d68ad;"></div>
<div style="left:1414px;top:316px;width:1.5px;height:36px;background:#6d68ad;"></div>
<div style="left:1317px;top:320px;width:22.5px;height:2px;background:#34304f;"></div>
<div style="left:1317px;top:324px;width:22.5px;height:2px;background:#34304f;"></div>
<div style="left:1317px;top:328px;width:22.5px;height:2px;background:#34304f;"></div>
<div style="left:1317px;top:348px;width:22.5px;height:2px;background:#34304f;"></div>
<div style="left:1341px;top:318px;width:23px;height:4px;background:#34304f;"></div>
<div style="left:1341px;top:324px;width:23px;height:4px;background:#34304f;"></div>
<div style="left:1341px;top:332px;width:23px;height:2px;background:#34304f;"></div>
<div style="left:1341px;top:350px;width:23px;height:2px;background:#34304f;"></div>
<div style="left:1365.5px;top:320px;width:21px;height:2px;background:#34304f;"></div>
<div style="left:1365.5px;top:324px;width:21px;height:2px;background:#34304f;"></div>
<div style="left:1365.5px;top:328px;width:21px;height:2px;background:#34304f;"></div>
<div style="left:1365.5px;top:332px;width:21px;height:2px;background:#34304f;"></div>
<div style="left:1365.5px;top:344px;width:21px;height:2px;background:#34304f;"></div>
<div style="left:1388px;top:318px;width:26.5px;height:5.7px;background:#34304f;"></div>
<div style="left:1388px;top:330px;width:26.5px;height:2px;background:#34304f;"></div>
<div style="left:1388px;top:346px;width:26.5px;height:2px;background:#34304f;"></div>
<div style="left:1415px;top:282px;width:99px;height:34px;background:#5d3f6e;"></div>
<div style="left:1416.5px;top:283.5px;width:97px;height:31px;background:#ad7ac2;"></div>
<div style="left:1415px;top:316px;width:99px;height:36px;background:#5d3f6e;"></div>
<div style="left:1416.5px;top:316px;width:97.5px;height:36px;background:#8a83d0;"></div>
<div style="left:1464px;top:316px;width:1.5px;height:36px;background:#6d68ad;"></div>
<div style="left:1514px;top:316px;width:1.5px;height:36px;background:#6d68ad;"></div>
<div style="left:1417px;top:320px;width:22.5px;height:2px;background:#34304f;"></div>
<div style="left:1417px;top:324px;width:22.5px;height:2px;background:#34304f;"></div>
<div style="left:1417px;top:328px;width:22.5px;height:2px;background:#34304f;"></div>
<div style="left:1417px;top:348px;width:22.5px;height:2px;background:#34304f;"></div>
<div style="left:1441px;top:318px;width:23px;height:4px;background:#34304f;"></div>
<div style="left:1441px;top:324px;width:23px;height:4px;background:#34304f;"></div>
<div style="left:1441px;top:332px;width:23px;height:2px;background:#34304f;"></div>
<div style="left:1441px;top:350px;width:23px;height:2px;background:#34304f;"></div>
<div style="left:1465.5px;top:320px;width:21px;height:2px;background:#34304f;"></div>
<div style="left:1465.5px;top:324px;width:21px;height:2px;background:#34304f;"></div>
<div style="left:1465.5px;top:328px;width:21px;height:2px;background:#34304f;"></div>
<div style="left:1465.5px;top:332px;width:21px;height:2px;background:#34304f;"></div>
<div style="left:1465.5px;top:344px;width:21px;height:2px;background:#34304f;"></div>
<div style="left:1488px;top:318px;width:25.5px;height:5.7px;background:#34304f;"></div>
<div style="left:1488px;top:330px;width:25.5px;height:2px;background:#34304f;"></div>
<div style="left:1488px;top:346px;width:25.5px;height:2px;background:#34304f;"></div>
<div style="left:1514px;top:282px;width:99px;height:34px;background:#5d3f6e;"></div>
<div style="left:1515.5px;top:283.5px;width:97px;height:31px;background:#ad7ac2;"></div>
<div style="left:1514px;top:316px;width:99px;height:36px;background:#5d3f6e;"></div>
<div style="left:1515.5px;top:316px;width:97.5px;height:36px;background:#8a83d0;"></div>
<div style="left:1562px;top:316px;width:1.5px;height:36px;background:#6d68ad;"></div>
<div style="left:1516px;top:320px;width:22.5px;height:2px;background:#4f4a7a;"></div>
<div style="left:1516px;top:324px;width:22.5px;height:2px;background:#4f4a7a;"></div>
<div style="left:1516px;top:328px;width:22.5px;height:2px;background:#4f4a7a;"></div>
<div style="left:1516px;top:348px;width:22.5px;height:2px;background:#4f4a7a;"></div>
<div style="left:1540px;top:318px;width:23px;height:4px;background:#4f4a7a;"></div>
<div style="left:1540px;top:324px;width:23px;height:4px;background:#4f4a7a;"></div>
<div style="left:1540px;top:332px;width:23px;height:2px;background:#4f4a7a;"></div>
<div style="left:1540px;top:350px;width:23px;height:2px;background:#4f4a7a;"></div>
<div style="left:1564.5px;top:320px;width:21px;height:2px;background:#4f4a7a;"></div>
<div style="left:1564.5px;top:324px;width:21px;height:2px;background:#4f4a7a;"></div>
<div style="left:1564.5px;top:328px;width:21px;height:2px;background:#4f4a7a;"></div>
<div style="left:1564.5px;top:332px;width:21px;height:2px;background:#4f4a7a;"></div>
<div style="left:1564.5px;top:344px;width:21px;height:2px;background:#4f4a7a;"></div>
<div style="left:1587px;top:318px;width:25.5px;height:5.7px;background:#4f4a7a;"></div>
<div style="left:1587px;top:330px;width:25.5px;height:2px;background:#4f4a7a;"></div>
<div style="left:1587px;top:346px;width:25.5px;height:2px;background:#4f4a7a;"></div>
<div style="left:1613px;top:282px;width:99px;height:34px;background:#5d3f6e;"></div>
<div style="left:1614.5px;top:283.5px;width:97px;height:31px;background:#ad7ac2;"></div>
<div style="left:1613px;top:316px;width:99px;height:36px;background:#5d3f6e;"></div>
<div style="left:1614.5px;top:316px;width:97.5px;height:36px;background:#8a83d0;"></div>
<div style="left:1662px;top:316px;width:1.5px;height:36px;background:#6d68ad;"></div>
<div style="left:1615px;top:320px;width:22.5px;height:2px;background:#34304f;"></div>
<div style="left:1615px;top:324px;width:22.5px;height:2px;background:#34304f;"></div>
<div style="left:1615px;top:328px;width:22.5px;height:2px;background:#34304f;"></div>
<div style="left:1615px;top:348px;width:22.5px;height:2px;background:#34304f;"></div>
<div style="left:1639px;top:318px;width:23px;height:4px;background:#34304f;"></div>
<div style="left:1639px;top:324px;width:23px;height:4px;background:#34304f;"></div>
<div style="left:1639px;top:332px;width:23px;height:2px;background:#34304f;"></div>
<div style="left:1639px;top:350px;width:23px;height:2px;background:#34304f;"></div>
<div style="left:1663.5px;top:320px;width:21px;height:2px;background:#34304f;"></div>
<div style="left:1663.5px;top:324px;width:21px;height:2px;background:#34304f;"></div>
<div style="left:1663.5px;top:328px;width:21px;height:2px;background:#34304f;"></div>
<div style="left:1663.5px;top:332px;width:21px;height:2px;background:#34304f;"></div>
<div style="left:1663.5px;top:344px;width:21px;height:2px;background:#34304f;"></div>
<div style="left:1686px;top:318px;width:25.5px;height:5.7px;background:#34304f;"></div>
<div style="left:1686px;top:330px;width:25.5px;height:2px;background:#34304f;"></div>
<div style="left:1686px;top:346px;width:25.5px;height:2px;background:#34304f;"></div>
<div style="left:1514px;top:356px;width:99px;height:34px;background:#5d3f6e;"></div>
<div style="left:1515.5px;top:357.5px;width:97px;height:31px;background:#ad7ac2;"></div>
<div style="left:1514px;top:390px;width:99px;height:36px;background:#5d3f6e;"></div>
<div style="left:1515.5px;top:390px;width:97.5px;height:36px;background:#8a83d0;"></div>
<div style="left:1562px;top:390px;width:1.5px;height:36px;background:#6d68ad;"></div>
<div style="left:1516px;top:394px;width:22.5px;height:2px;background:#4f4a7a;"></div>
<div style="left:1516px;top:398px;width:22.5px;height:2px;background:#4f4a7a;"></div>
<div style="left:1516px;top:402px;width:22.5px;height:2px;background:#4f4a7a;"></div>
<div style="left:1516px;top:422px;width:22.5px;height:2px;background:#4f4a7a;"></div>
<div style="left:1540px;top:392px;width:23px;height:4px;background:#4f4a7a;"></div>
<div style="left:1540px;top:398px;width:23px;height:4px;background:#4f4a7a;"></div>
<div style="left:1540px;top:406px;width:23px;height:2px;background:#4f4a7a;"></div>
<div style="left:1540px;top:424px;width:23px;height:2px;background:#4f4a7a;"></div>
<div style="left:1564.5px;top:394px;width:21px;height:2px;background:#4f4a7a;"></div>
<div style="left:1564.5px;top:398px;width:21px;height:2px;background:#4f4a7a;"></div>
<div style="left:1564.5px;top:402px;width:21px;height:2px;background:#4f4a7a;"></div>
<div style="left:1564.5px;top:406px;width:21px;height:2px;background:#4f4a7a;"></div>
<div style="left:1564.5px;top:418px;width:21px;height:2px;background:#4f4a7a;"></div>
<div style="left:1587px;top:392px;width:25.5px;height:5.7px;background:#4f4a7a;"></div>
<div style="left:1587px;top:404px;width:25.5px;height:2px;background:#4f4a7a;"></div>
<div style="left:1587px;top:420px;width:25.5px;height:2px;background:#4f4a7a;"></div>
<div style="left:1613px;top:356px;width:100px;height:34px;background:#5d3f6e;"></div>
<div style="left:1614.5px;top:357.5px;width:98px;height:31px;background:#ad7ac2;"></div>
<div style="left:1613px;top:390px;width:100px;height:36px;background:#5d3f6e;"></div>
<div style="left:1614.5px;top:390px;width:98.5px;height:36px;background:#8a83d0;"></div>
<div style="left:1662px;top:390px;width:1.5px;height:36px;background:#6d68ad;"></div>
<div style="left:1712px;top:390px;width:1.5px;height:36px;background:#6d68ad;"></div>
<div style="left:1615px;top:394px;width:22.5px;height:2px;background:#34304f;"></div>
<div style="left:1615px;top:398px;width:22.5px;height:2px;background:#34304f;"></div>
<div style="left:1615px;top:402px;width:22.5px;height:2px;background:#34304f;"></div>
<div style="left:1615px;top:422px;width:22.5px;height:2px;background:#34304f;"></div>
<div style="left:1639px;top:392px;width:23px;height:4px;background:#34304f;"></div>
<div style="left:1639px;top:398px;width:23px;height:4px;background:#34304f;"></div>
<div style="left:1639px;top:406px;width:23px;height:2px;background:#34304f;"></div>
<div style="left:1639px;top:424px;width:23px;height:2px;background:#34304f;"></div>
<div style="left:1663.5px;top:394px;width:21px;height:2px;background:#34304f;"></div>
<div style="left:1663.5px;top:398px;width:21px;height:2px;background:#34304f;"></div>
<div style="left:1663.5px;top:402px;width:21px;height:2px;background:#34304f;"></div>
<div style="left:1663.5px;top:406px;width:21px;height:2px;background:#34304f;"></div>
<div style="left:1663.5px;top:418px;width:21px;height:2px;background:#34304f;"></div>
<div style="left:1686px;top:392px;width:26.5px;height:5.7px;background:#34304f;"></div>
<div style="left:1686px;top:404px;width:26.5px;height:2px;background:#34304f;"></div>
<div style="left:1686px;top:420px;width:26.5px;height:2px;background:#34304f;"></div>
<div style="left:421px;top:430px;width:100px;height:34px;background:#5d3f6e;"></div>
<div style="left:422.5px;top:431.5px;width:98px;height:31px;background:#ad7ac2;"></div>
<div style="left:421px;top:464px;width:100px;height:36px;background:#5d3f6e;"></div>
<div style="left:422.5px;top:464px;width:98.5px;height:36px;background:#8a83d0;"></div>
<div style="left:470px;top:464px;width:1.5px;height:36px;background:#6d68ad;"></div>
<div style="left:520px;top:464px;width:1.5px;height:36px;background:#6d68ad;"></div>
<div style="left:423px;top:468px;width:22.5px;height:2px;background:#34304f;"></div>
<div style="left:423px;top:472px;width:22.5px;height:2px;background:#34304f;"></div>
<div style="left:423px;top:476px;width:22.5px;height:2px;background:#34304f;"></div>
<div style="left:423px;top:496px;width:22.5px;height:2px;background:#34304f;"></div>
<div style="left:447px;top:466px;width:23px;height:4px;background:#34304f;"></div>
<div style="left:447px;top:472px;width:23px;height:4px;background:#34304f;"></div>
<div style="left:447px;top:480px;width:23px;height:2px;background:#34304f;"></div>
<div style="left:447px;top:498px;width:23px;height:2px;background:#34304f;"></div>
<div style="left:471.5px;top:468px;width:21px;height:2px;background:#34304f;"></div>
<div style="left:471.5px;top:472px;width:21px;height:2px;background:#34304f;"></div>
<div style="left:471.5px;top:476px;width:21px;height:2px;background:#34304f;"></div>
<div style="left:471.5px;top:480px;width:21px;height:2px;background:#34304f;"></div>
<div style="left:471.5px;top:492px;width:21px;height:2px;background:#34304f;"></div>
<div style="left:494px;top:466px;width:26.5px;height:5.7px;background:#34304f;"></div>
<div style="left:494px;top:478px;width:26.5px;height:2px;background:#34304f;"></div>
<div style="left:494px;top:494px;width:26.5px;height:2px;background:#34304f;"></div>
<div style="left:521px;top:430px;width:98px;height:34px;background:#5d3f6e;"></div>
<div style="left:522.5px;top:431.5px;width:96px;height:31px;background:#ad7ac2;"></div>
<div style="left:521px;top:464px;width:98px;height:36px;background:#5d3f6e;"></div>
<div style="left:522.5px;top:464px;width:96.5px;height:36px;background:#8a83d0;"></div>
<div style="left:568px;top:464px;width:1.5px;height:36px;background:#6d68ad;"></div>
<div style="left:523px;top:468px;width:22.5px;height:2px;background:#4f4a7a;"></div>
<div style="left:523px;top:472px;width:22.5px;height:2px;background:#4f4a7a;"></div>
<div style="left:523px;top:476px;width:22.5px;height:2px;background:#4f4a7a;"></div>
<div style="left:523px;top:496px;width:22.5px;height:2px;background:#4f4a7a;"></div>
<div style="left:547px;top:466px;width:23px;height:4px;background:#4f4a7a;"></div>
<div style="left:547px;top:472px;width:23px;height:4px;background:#4f4a7a;"></div>
<div style="left:547px;top:480px;width:23px;height:2px;background:#4f4a7a;"></div>
<div style="left:547px;top:498px;width:23px;height:2px;background:#4f4a7a;"></div>
<div style="left:571.5px;top:468px;width:21px;height:2px;background:#4f4a7a;"></div>
<div style="left:571.5px;top:472px;width:21px;height:2px;background:#4f4a7a;"></div>
<div style="left:571.5px;top:476px;width:21px;height:2px;background:#4f4a7a;"></div>
<div style="left:571.5px;top:480px;width:21px;height:2px;background:#4f4a7a;"></div>
<div style="left:571.5px;top:492px;width:21px;height:2px;background:#4f4a7a;"></div>
<div style="left:594px;top:466px;width:24.5px;height:5.7px;background:#4f4a7a;"></div>
<div style="left:594px;top:478px;width:24.5px;height:2px;background:#4f4a7a;"></div>
<div style="left:594px;top:494px;width:24.5px;height:2px;background:#4f4a7a;"></div>
<div style="left:619px;top:430px;width:87px;height:34px;background:;background:linear-gradient(180deg,rgba(30,30,30,0) 0,rgba(30,30,30,0) 66%,rgba(30,30,30,0.6) 100%),repeating-linear-gradient(135deg,#1e1e1e 0 3.8px,#415876 3.8px 8.5px);"></div>
<div style="left:619px;top:464px;width:87px;height:36px;background:#8a83d0;"></div>
<div style="left:618px;top:464px;width:1.5px;height:36px;background:#6d68ad;"></div>
<div style="left:668px;top:464px;width:1.5px;height:36px;background:#6d68ad;"></div>
<div style="left:818px;top:576px;width:50px;height:34px;background:#5d3f6e;"></div>
<div style="left:819.5px;top:577.5px;width:48px;height:31px;background:#ad7ac2;"></div>
<div style="left:818px;top:610px;width:50px;height:36px;background:#5d3f6e;"></div>
<div style="left:819.5px;top:610px;width:48.5px;height:36px;background:#8a83d0;"></div>
<div style="left:868px;top:610px;width:1.5px;height:36px;background:#6d68ad;"></div>
<div style="left:819.5px;top:614.5px;width:23.28px;height:2px;background:#34304f;"></div>
<div style="left:843.78px;top:612.4px;width:24.22px;height:2px;background:#34304f;"></div>
<div style="left:843.78px;top:620.2px;width:24.22px;height:2px;background:#34304f;"></div>
<div style="left:819.5px;top:624.3px;width:23.28px;height:2px;background:#34304f;"></div>
<div style="left:819.5px;top:628.3px;width:48.5px;height:2px;background:#34304f;"></div>
<div style="left:868px;top:576px;width:38px;height:34px;background:;background:linear-gradient(180deg,rgba(30,30,30,0) 0,rgba(30,30,30,0) 66%,rgba(30,30,30,0.6) 100%),repeating-linear-gradient(135deg,#1e1e1e 0 3.8px,#415876 3.8px 8.5px);"></div>
<div style="left:868px;top:610px;width:38px;height:36px;background:#8a83d0;"></div>
<div style="left:868px;top:610px;width:1.5px;height:36px;background:#6d68ad;"></div>
<div style="left:917px;top:576px;width:49px;height:34px;background:#5d3f6e;"></div>
<div style="left:918.5px;top:577.5px;width:47px;height:31px;background:#ad7ac2;"></div>
<div style="left:917px;top:610px;width:49px;height:36px;background:#5d3f6e;"></div>
<div style="left:918.5px;top:610px;width:47.5px;height:36px;background:#8a83d0;"></div>
<div style="left:918.5px;top:614.5px;width:22.8px;height:2px;background:#34304f;"></div>
<div style="left:942.3px;top:612px;width:23.7px;height:4px;background:#34304f;"></div>
<div style="left:918.5px;top:620.2px;width:47.5px;height:2px;background:#34304f;"></div>
<div style="left:918.5px;top:624.3px;width:22.8px;height:2px;background:#34304f;"></div>
<div style="left:918.5px;top:628.3px;width:47.5px;height:2px;background:#34304f;"></div>
<div style="left:966px;top:576px;width:40px;height:34px;background:;background:linear-gradient(180deg,rgba(30,30,30,0) 0,rgba(30,30,30,0) 66%,rgba(30,30,30,0.6) 100%),repeating-linear-gradient(135deg,#1e1e1e 0 3.8px,#415876 3.8px 8.5px);"></div>
<div style="left:966px;top:610px;width:40px;height:36px;background:#8a83d0;"></div>
<div style="left:966px;top:610px;width:1.5px;height:36px;background:#6d68ad;"></div>
<div style="left:1910px;top:576px;width:50px;height:34px;background:#676a6f;"></div>
<div style="left:1935px;top:618px;width:0px;height:2px;background:#686b6f;"></div>
<div style="left:1937.5px;top:614px;width:22.5px;height:2px;background:#686b6f;"></div>
<div style="left:1937.5px;top:623px;width:22.5px;height:2px;background:#686b6f;"></div>
<div style="left:1910px;top:627px;width:25px;height:2px;background:#686b6f;"></div>
<div style="left:1910px;top:618px;width:25px;height:2px;background:#686b6f;"></div>
<div style="left:1910px;top:631px;width:50px;height:2px;background:#686b6f;"></div>
<div style="left:2010px;top:576px;width:50px;height:34px;background:#676a6f;"></div>
<div style="left:2035px;top:618px;width:0px;height:2px;background:#686b6f;"></div>
<div style="left:2037.5px;top:614px;width:22.5px;height:2px;background:#686b6f;"></div>
<div style="left:2037.5px;top:623px;width:22.5px;height:2px;background:#686b6f;"></div>
<div style="left:2010px;top:627px;width:25px;height:2px;background:#686b6f;"></div>
<div style="left:2010px;top:618px;width:25px;height:2px;background:#686b6f;"></div>
<div style="left:2010px;top:631px;width:50px;height:2px;background:#686b6f;"></div>
<div style="left:1017px;top:650px;width:93px;height:34px;background:#5d3f6e;"></div>
<div style="left:1018.5px;top:651.5px;width:91px;height:31px;background:#ad7ac2;"></div>
<div style="left:1017px;top:684px;width:93px;height:36px;background:#5d3f6e;"></div>
<div style="left:1018.5px;top:684px;width:91.5px;height:36px;background:#8a83d0;"></div>
<div style="left:1066px;top:684px;width:1.5px;height:36px;background:#6d68ad;"></div>
<div style="left:1019px;top:688px;width:22.5px;height:2px;background:#34304f;"></div>
<div style="left:1019px;top:692px;width:22.5px;height:2px;background:#34304f;"></div>
<div style="left:1019px;top:696px;width:22.5px;height:2px;background:#34304f;"></div>
<div style="left:1019px;top:716px;width:22.5px;height:2px;background:#34304f;"></div>
<div style="left:1043px;top:686px;width:23px;height:4px;background:#34304f;"></div>
<div style="left:1043px;top:692px;width:23px;height:4px;background:#34304f;"></div>
<div style="left:1043px;top:700px;width:23px;height:2px;background:#34304f;"></div>
<div style="left:1043px;top:718px;width:23px;height:2px;background:#34304f;"></div>
<div style="left:1067.5px;top:688px;width:21px;height:2px;background:#34304f;"></div>
<div style="left:1067.5px;top:692px;width:21px;height:2px;background:#34304f;"></div>
<div style="left:1067.5px;top:696px;width:21px;height:2px;background:#34304f;"></div>
<div style="left:1067.5px;top:700px;width:21px;height:2px;background:#34304f;"></div>
<div style="left:1067.5px;top:712px;width:21px;height:2px;background:#34304f;"></div>
<div style="left:1090px;top:686px;width:19.5px;height:5.7px;background:#34304f;"></div>
<div style="left:1090px;top:698px;width:19.5px;height:2px;background:#34304f;"></div>
<div style="left:1090px;top:714px;width:19.5px;height:2px;background:#34304f;"></div>
<span style="left:1023px;top:658px;font-size:20.5px;color:#2b1c30;font-weight:normal;letter-spacing:0.25px;-webkit-text-stroke:0.3px #2b1c30;">Serum 2</span>
<div style="left:1110px;top:650px;width:7px;height:34px;background:#676a6f;"></div>
<div style="left:1117px;top:650px;width:111px;height:34px;background:#5d3f6e;"></div>
<div style="left:1118.5px;top:651.5px;width:109px;height:31px;background:#ad7ac2;"></div>
<div style="left:1117px;top:684px;width:111px;height:36px;background:#5d3f6e;"></div>
<div style="left:1118.5px;top:684px;width:109.5px;height:36px;background:#8a83d0;"></div>
<div style="left:1166px;top:684px;width:1.5px;height:36px;background:#6d68ad;"></div>
<div style="left:1216px;top:684px;width:1.5px;height:36px;background:#6d68ad;"></div>
<div style="left:1119px;top:688px;width:22.5px;height:2px;background:#34304f;"></div>
<div style="left:1119px;top:692px;width:22.5px;height:2px;background:#34304f;"></div>
<div style="left:1119px;top:696px;width:22.5px;height:2px;background:#34304f;"></div>
<div style="left:1119px;top:716px;width:22.5px;height:2px;background:#34304f;"></div>
<div style="left:1143px;top:686px;width:23px;height:4px;background:#34304f;"></div>
<div style="left:1143px;top:692px;width:23px;height:4px;background:#34304f;"></div>
<div style="left:1143px;top:700px;width:23px;height:2px;background:#34304f;"></div>
<div style="left:1143px;top:718px;width:23px;height:2px;background:#34304f;"></div>
<div style="left:1167.5px;top:688px;width:21px;height:2px;background:#34304f;"></div>
<div style="left:1167.5px;top:692px;width:21px;height:2px;background:#34304f;"></div>
<div style="left:1167.5px;top:696px;width:21px;height:2px;background:#34304f;"></div>
<div style="left:1167.5px;top:700px;width:21px;height:2px;background:#34304f;"></div>
<div style="left:1167.5px;top:712px;width:21px;height:2px;background:#34304f;"></div>
<div style="left:1190px;top:686px;width:25.5px;height:5.7px;background:#34304f;"></div>
<div style="left:1190px;top:698px;width:25.5px;height:2px;background:#34304f;"></div>
<div style="left:1190px;top:714px;width:25.5px;height:2px;background:#34304f;"></div>
<span style="left:1123px;top:658px;font-size:20.5px;color:#2b1c30;font-weight:normal;letter-spacing:0.25px;-webkit-text-stroke:0.3px #2b1c30;">Serum 2</span>
<div style="left:1089px;top:724px;width:27px;height:34px;background:#5d3f6e;"></div>
<div style="left:1090.5px;top:725.5px;width:25px;height:31px;background:#ad7ac2;"></div>
<div style="left:1089px;top:758px;width:27px;height:36px;background:#5d3f6e;"></div>
<div style="left:1090.5px;top:758px;width:25.5px;height:36px;background:#8a83d0;"></div>
<div style="left:1090.5px;top:758.5px;width:25.5px;height:5.5px;background:#34304f;"></div>
<div style="left:1090.5px;top:770px;width:25.5px;height:2px;background:#34304f;"></div>
<div style="left:1090.5px;top:786px;width:25.5px;height:2px;background:#34304f;"></div>
<span style="left:1095px;top:732px;font-size:20.5px;color:#2b1c30;font-weight:normal;letter-spacing:0.25px;-webkit-text-stroke:0.3px #2b1c30;">Se</span>
<div style="left:1116px;top:724px;width:22px;height:34px;background:;background:linear-gradient(180deg,rgba(30,30,30,0) 0,rgba(30,30,30,0) 66%,rgba(30,30,30,0.6) 100%),repeating-linear-gradient(135deg,#1e1e1e 0 3.8px,#415876 3.8px 8.5px);"></div>
<div style="left:1116px;top:758px;width:22px;height:36px;background:#8a83d0;"></div>
<div style="left:1116px;top:758px;width:1.5px;height:36px;background:#6d68ad;"></div>
<div style="left:1189px;top:724px;width:27px;height:34px;background:#5d3f6e;"></div>
<div style="left:1190.5px;top:725.5px;width:25px;height:31px;background:#ad7ac2;"></div>
<div style="left:1189px;top:758px;width:27px;height:36px;background:#5d3f6e;"></div>
<div style="left:1190.5px;top:758px;width:25.5px;height:36px;background:#8a83d0;"></div>
<div style="left:1216px;top:758px;width:1.5px;height:36px;background:#6d68ad;"></div>
<div style="left:1190.5px;top:758.5px;width:25.5px;height:5.5px;background:#34304f;"></div>
<div style="left:1190.5px;top:770px;width:25.5px;height:2px;background:#34304f;"></div>
<div style="left:1190.5px;top:786px;width:25.5px;height:2px;background:#34304f;"></div>
<span style="left:1195px;top:732px;font-size:20.5px;color:#2b1c30;font-weight:normal;letter-spacing:0.25px;-webkit-text-stroke:0.3px #2b1c30;">Se</span>
<div style="left:1216px;top:724px;width:46px;height:34px;background:;background:linear-gradient(180deg,rgba(30,30,30,0) 0,rgba(30,30,30,0) 66%,rgba(30,30,30,0.6) 100%),repeating-linear-gradient(135deg,#1e1e1e 0 3.8px,#415876 3.8px 8.5px);"></div>
<div style="left:1216px;top:758px;width:46px;height:36px;background:#8a83d0;"></div>
<div style="left:1216px;top:758px;width:1.5px;height:36px;background:#6d68ad;"></div>
<div style="left:222px;top:906px;width:99px;height:34px;background:#6a5120;"></div>
<div style="left:223.5px;top:907.5px;width:97px;height:31px;background:#c59c43;"></div>
<div style="left:222px;top:940px;width:99px;height:36px;background:#5e5c48;"></div>
<div style="left:223.5px;top:940px;width:97.5px;height:36px;background:#979775;"></div>
<div style="left:270px;top:940px;width:1.5px;height:36px;background:#7b7a66;"></div>
<div style="left:320px;top:940px;width:1.5px;height:36px;background:#7b7a66;"></div>
<div style="left:223px;top:958.5px;width:23.255px;height:3.5px;background:#1b1b1b;"></div>
<div style="left:247.75px;top:970.5px;width:23.255px;height:3.5px;background:#1b1b1b;"></div>
<div style="left:272.5px;top:942.5px;width:22.265px;height:3.5px;background:#1b1b1b;"></div>
<div style="left:297.25px;top:950.5px;width:23.255px;height:3.5px;background:#1b1b1b;"></div>
<div style="left:321px;top:906px;width:100px;height:34px;background:#6a5120;"></div>
<div style="left:322.5px;top:907.5px;width:98px;height:31px;background:#c59c43;"></div>
<div style="left:321px;top:940px;width:100px;height:36px;background:#5e5c48;"></div>
<div style="left:322.5px;top:940px;width:98.5px;height:36px;background:#979775;"></div>
<div style="left:370px;top:940px;width:1.5px;height:36px;background:#7b7a66;"></div>
<div style="left:419px;top:940px;width:1.5px;height:36px;background:#7b7a66;"></div>
<div style="left:322px;top:958.5px;width:23.5px;height:3.5px;background:#1b1b1b;"></div>
<div style="left:347px;top:970.5px;width:23.5px;height:3.5px;background:#1b1b1b;"></div>
<div style="left:372px;top:942.5px;width:22.5px;height:3.5px;background:#1b1b1b;"></div>
<div style="left:397px;top:950.5px;width:23.5px;height:3.5px;background:#1b1b1b;"></div>
<div style="left:421px;top:906px;width:100px;height:34px;background:#6a5120;"></div>
<div style="left:422.5px;top:907.5px;width:98px;height:31px;background:#c59c43;"></div>
<div style="left:421px;top:940px;width:100px;height:36px;background:#5e5c48;"></div>
<div style="left:422.5px;top:940px;width:98.5px;height:36px;background:#979775;"></div>
<div style="left:469px;top:940px;width:1.5px;height:36px;background:#7b7a66;"></div>
<div style="left:519px;top:940px;width:1.5px;height:36px;background:#7b7a66;"></div>
<div style="left:422px;top:958.5px;width:23.5px;height:3.5px;background:#1b1b1b;"></div>
<div style="left:447px;top:970.5px;width:23.5px;height:3.5px;background:#1b1b1b;"></div>
<div style="left:472px;top:942.5px;width:22.5px;height:3.5px;background:#1b1b1b;"></div>
<div style="left:497px;top:950.5px;width:23.5px;height:3.5px;background:#1b1b1b;"></div>
<div style="left:521px;top:906px;width:98px;height:34px;background:#6a5120;"></div>
<div style="left:522.5px;top:907.5px;width:96px;height:31px;background:#c59c43;"></div>
<div style="left:521px;top:940px;width:98px;height:36px;background:#5e5c48;"></div>
<div style="left:522.5px;top:940px;width:96.5px;height:36px;background:#979775;"></div>
<div style="left:569px;top:940px;width:1.5px;height:36px;background:#7b7a66;"></div>
<div style="left:522px;top:958.5px;width:23.01px;height:3.5px;background:#1b1b1b;"></div>
<div style="left:546.5px;top:970.5px;width:23.01px;height:3.5px;background:#1b1b1b;"></div>
<div style="left:571px;top:942.5px;width:22.03px;height:3.5px;background:#1b1b1b;"></div>
<div style="left:595.5px;top:950.5px;width:23.01px;height:3.5px;background:#1b1b1b;"></div>
<div style="left:1315px;top:906px;width:100px;height:34px;background:#6a5120;"></div>
<div style="left:1316.5px;top:907.5px;width:98px;height:31px;background:#c59c43;"></div>
<div style="left:1315px;top:940px;width:100px;height:36px;background:#5e5c48;"></div>
<div style="left:1316.5px;top:940px;width:98.5px;height:36px;background:#979775;"></div>
<div style="left:1364px;top:940px;width:1.5px;height:36px;background:#7b7a66;"></div>
<div style="left:1414px;top:940px;width:1.5px;height:36px;background:#7b7a66;"></div>
<div style="left:1316px;top:958.5px;width:23.5px;height:3.5px;background:#1b1b1b;"></div>
<div style="left:1341px;top:970.5px;width:23.5px;height:3.5px;background:#1b1b1b;"></div>
<div style="left:1366px;top:942.5px;width:22.5px;height:3.5px;background:#1b1b1b;"></div>
<div style="left:1391px;top:950.5px;width:23.5px;height:3.5px;background:#1b1b1b;"></div>
<div style="left:1415px;top:906px;width:100px;height:34px;background:#6a5120;"></div>
<div style="left:1416.5px;top:907.5px;width:98px;height:31px;background:#c59c43;"></div>
<div style="left:1415px;top:940px;width:100px;height:36px;background:#5e5c48;"></div>
<div style="left:1416.5px;top:940px;width:98.5px;height:36px;background:#979775;"></div>
<div style="left:1463px;top:940px;width:1.5px;height:36px;background:#7b7a66;"></div>
<div style="left:1513px;top:940px;width:1.5px;height:36px;background:#7b7a66;"></div>
<div style="left:1416px;top:958.5px;width:23.5px;height:3.5px;background:#1b1b1b;"></div>
<div style="left:1441px;top:970.5px;width:23.5px;height:3.5px;background:#1b1b1b;"></div>
<div style="left:1466px;top:942.5px;width:22.5px;height:3.5px;background:#1b1b1b;"></div>
<div style="left:1491px;top:950.5px;width:23.5px;height:3.5px;background:#1b1b1b;"></div>
<div style="left:1515px;top:906px;width:98px;height:34px;background:#6a5120;"></div>
<div style="left:1516.5px;top:907.5px;width:96px;height:31px;background:#c59c43;"></div>
<div style="left:1515px;top:940px;width:98px;height:36px;background:#5e5c48;"></div>
<div style="left:1516.5px;top:940px;width:96.5px;height:36px;background:#979775;"></div>
<div style="left:1563px;top:940px;width:1.5px;height:36px;background:#7b7a66;"></div>
<div style="left:1516px;top:958.5px;width:23.01px;height:3.5px;background:#1b1b1b;"></div>
<div style="left:1540.5px;top:970.5px;width:23.01px;height:3.5px;background:#1b1b1b;"></div>
<div style="left:1565px;top:942.5px;width:22.03px;height:3.5px;background:#1b1b1b;"></div>
<div style="left:1589.5px;top:950.5px;width:23.01px;height:3.5px;background:#1b1b1b;"></div>
<div style="left:1613px;top:906px;width:99px;height:34px;background:#6a5120;"></div>
<div style="left:1614.5px;top:907.5px;width:97px;height:31px;background:#c59c43;"></div>
<div style="left:1613px;top:940px;width:99px;height:36px;background:#5e5c48;"></div>
<div style="left:1614.5px;top:940px;width:97.5px;height:36px;background:#979775;"></div>
<div style="left:1662px;top:940px;width:1.5px;height:36px;background:#7b7a66;"></div>
<div style="left:1614px;top:958.5px;width:23.255px;height:3.5px;background:#1b1b1b;"></div>
<div style="left:1638.75px;top:970.5px;width:23.255px;height:3.5px;background:#1b1b1b;"></div>
<div style="left:1663.5px;top:942.5px;width:22.265px;height:3.5px;background:#1b1b1b;"></div>
<div style="left:1688.25px;top:950.5px;width:23.255px;height:3.5px;background:#1b1b1b;"></div>
<div style="left:1217px;top:906px;width:98px;height:33px;background:#676a6f;"></div>
<div style="left:1218px;top:961px;width:21.54px;height:3px;background:#6c6d6e;"></div>
<div style="left:1242.5px;top:972px;width:20.56px;height:3px;background:#6c6d6e;"></div>
<div style="left:1266.02px;top:943px;width:18.6px;height:3px;background:#6c6d6e;"></div>
<div style="left:1286.6px;top:952px;width:25.46px;height:3px;background:#6c6d6e;"></div>
<div style="left:690px;top:980px;width:4.5px;height:35px;background:#6a5120;"></div>
<div style="left:691.5px;top:981.5px;width:2.5px;height:32px;background:#c59c43;"></div>
<div style="left:694.5px;top:980px;width:3px;height:34px;background:;background:linear-gradient(180deg,rgba(30,30,30,0) 0,rgba(30,30,30,0) 66%,rgba(30,30,30,0.6) 100%),repeating-linear-gradient(135deg,#1e1e1e 0 3.8px,#415876 3.8px 8.5px);"></div>
<div style="left:790px;top:980px;width:4.5px;height:35px;background:#6a5120;"></div>
<div style="left:791.5px;top:981.5px;width:2.5px;height:32px;background:#c59c43;"></div>
<div style="left:794.5px;top:980px;width:3px;height:34px;background:;background:linear-gradient(180deg,rgba(30,30,30,0) 0,rgba(30,30,30,0) 66%,rgba(30,30,30,0.6) 100%),repeating-linear-gradient(135deg,#1e1e1e 0 3.8px,#415876 3.8px 8.5px);"></div>
<div style="left:888px;top:980px;width:4.5px;height:35px;background:#6a5120;"></div>
<div style="left:889.5px;top:981.5px;width:2.5px;height:32px;background:#c59c43;"></div>
<div style="left:892.5px;top:980px;width:3px;height:34px;background:;background:linear-gradient(180deg,rgba(30,30,30,0) 0,rgba(30,30,30,0) 66%,rgba(30,30,30,0.6) 100%),repeating-linear-gradient(135deg,#1e1e1e 0 3.8px,#415876 3.8px 8.5px);"></div>
<div style="left:988px;top:980px;width:4.5px;height:35px;background:#6a5120;"></div>
<div style="left:989.5px;top:981.5px;width:2.5px;height:32px;background:#c59c43;"></div>
<div style="left:992.5px;top:980px;width:3px;height:34px;background:;background:linear-gradient(180deg,rgba(30,30,30,0) 0,rgba(30,30,30,0) 66%,rgba(30,30,30,0.6) 100%),repeating-linear-gradient(135deg,#1e1e1e 0 3.8px,#415876 3.8px 8.5px);"></div>
<div style="left:1785px;top:980px;width:4.5px;height:35px;background:#6a5120;"></div>
<div style="left:1786.5px;top:981.5px;width:2.5px;height:32px;background:#c59c43;"></div>
<div style="left:1789.5px;top:980px;width:3px;height:34px;background:;background:linear-gradient(180deg,rgba(30,30,30,0) 0,rgba(30,30,30,0) 66%,rgba(30,30,30,0.6) 100%),repeating-linear-gradient(135deg,#1e1e1e 0 3.8px,#415876 3.8px 8.5px);"></div>
<div style="left:1885px;top:980px;width:4.5px;height:35px;background:#6a5120;"></div>
<div style="left:1886.5px;top:981.5px;width:2.5px;height:32px;background:#c59c43;"></div>
<div style="left:1889.5px;top:980px;width:3px;height:34px;background:;background:linear-gradient(180deg,rgba(30,30,30,0) 0,rgba(30,30,30,0) 66%,rgba(30,30,30,0.6) 100%),repeating-linear-gradient(135deg,#1e1e1e 0 3.8px,#415876 3.8px 8.5px);"></div>
<div style="left:1984px;top:980px;width:4.5px;height:35px;background:#6a5120;"></div>
<div style="left:1985.5px;top:981.5px;width:2.5px;height:32px;background:#c59c43;"></div>
<div style="left:1988.5px;top:980px;width:3px;height:34px;background:;background:linear-gradient(180deg,rgba(30,30,30,0) 0,rgba(30,30,30,0) 66%,rgba(30,30,30,0.6) 100%),repeating-linear-gradient(135deg,#1e1e1e 0 3.8px,#415876 3.8px 8.5px);"></div>
<div style="left:2083px;top:980px;width:4.5px;height:35px;background:#6a5120;"></div>
<div style="left:2084.5px;top:981.5px;width:2.5px;height:32px;background:#c59c43;"></div>
<div style="left:2087.5px;top:980px;width:3px;height:34px;background:;background:linear-gradient(180deg,rgba(30,30,30,0) 0,rgba(30,30,30,0) 66%,rgba(30,30,30,0.6) 100%),repeating-linear-gradient(135deg,#1e1e1e 0 3.8px,#415876 3.8px 8.5px);"></div>
<div style="left:620px;top:1018px;width:48px;height:34px;background:#6a5120;"></div>
<div style="left:621.5px;top:1019.5px;width:46px;height:31px;background:#c59c43;"></div>
<div style="left:620px;top:1052px;width:48px;height:36px;background:#5e5c48;"></div>
<div style="left:621.5px;top:1052px;width:46.5px;height:36px;background:#979775;"></div>
<div style="left:622px;top:1084px;width:22px;height:2px;background:#3a3a30;"></div>
<div style="left:646px;top:1086px;width:22px;height:2px;background:#3a3a30;"></div>
<div style="left:668px;top:1018px;width:2px;height:34px;background:;background:linear-gradient(180deg,rgba(30,30,30,0) 0,rgba(30,30,30,0) 66%,rgba(30,30,30,0.6) 100%),repeating-linear-gradient(135deg,#1e1e1e 0 3.8px,#415876 3.8px 8.5px);"></div>
<div style="left:668px;top:1052px;width:2px;height:36px;background:#979775;"></div>
<div style="left:718px;top:1018px;width:50px;height:34px;background:#6a5120;"></div>
<div style="left:719.5px;top:1019.5px;width:48px;height:31px;background:#c59c43;"></div>
<div style="left:718px;top:1052px;width:50px;height:36px;background:#5e5c48;"></div>
<div style="left:719.5px;top:1052px;width:48.5px;height:36px;background:#979775;"></div>
<div style="left:720px;top:1084px;width:23px;height:2px;background:#3a3a30;"></div>
<div style="left:745px;top:1086px;width:23px;height:2px;background:#3a3a30;"></div>
<div style="left:768px;top:1018px;width:2px;height:34px;background:;background:linear-gradient(180deg,rgba(30,30,30,0) 0,rgba(30,30,30,0) 66%,rgba(30,30,30,0.6) 100%),repeating-linear-gradient(135deg,#1e1e1e 0 3.8px,#415876 3.8px 8.5px);"></div>
<div style="left:768px;top:1052px;width:2px;height:36px;background:#979775;"></div>
<div style="left:818px;top:1018px;width:50px;height:34px;background:#6a5120;"></div>
<div style="left:819.5px;top:1019.5px;width:48px;height:31px;background:#c59c43;"></div>
<div style="left:818px;top:1052px;width:50px;height:36px;background:#5e5c48;"></div>
<div style="left:819.5px;top:1052px;width:48.5px;height:36px;background:#979775;"></div>
<div style="left:820px;top:1084px;width:23px;height:2px;background:#3a3a30;"></div>
<div style="left:845px;top:1086px;width:23px;height:2px;background:#3a3a30;"></div>
<div style="left:868px;top:1018px;width:2px;height:34px;background:;background:linear-gradient(180deg,rgba(30,30,30,0) 0,rgba(30,30,30,0) 66%,rgba(30,30,30,0.6) 100%),repeating-linear-gradient(135deg,#1e1e1e 0 3.8px,#415876 3.8px 8.5px);"></div>
<div style="left:868px;top:1052px;width:2px;height:36px;background:#979775;"></div>
<div style="left:917px;top:1018px;width:49px;height:34px;background:#6a5120;"></div>
<div style="left:918.5px;top:1019.5px;width:47px;height:31px;background:#c59c43;"></div>
<div style="left:917px;top:1052px;width:49px;height:36px;background:#5e5c48;"></div>
<div style="left:918.5px;top:1052px;width:47.5px;height:36px;background:#979775;"></div>
<div style="left:919px;top:1084px;width:22.5px;height:2px;background:#3a3a30;"></div>
<div style="left:943.5px;top:1086px;width:22.5px;height:2px;background:#3a3a30;"></div>
<div style="left:966px;top:1018px;width:2px;height:34px;background:;background:linear-gradient(180deg,rgba(30,30,30,0) 0,rgba(30,30,30,0) 66%,rgba(30,30,30,0.6) 100%),repeating-linear-gradient(135deg,#1e1e1e 0 3.8px,#415876 3.8px 8.5px);"></div>
<div style="left:966px;top:1052px;width:2px;height:36px;background:#979775;"></div>
<div style="left:1714px;top:1018px;width:49px;height:34px;background:#6a5120;"></div>
<div style="left:1715.5px;top:1019.5px;width:47px;height:31px;background:#c59c43;"></div>
<div style="left:1714px;top:1052px;width:49px;height:36px;background:#5e5c48;"></div>
<div style="left:1715.5px;top:1052px;width:47.5px;height:36px;background:#979775;"></div>
<div style="left:1716px;top:1084px;width:22.5px;height:2px;background:#3a3a30;"></div>
<div style="left:1740.5px;top:1086px;width:22.5px;height:2px;background:#3a3a30;"></div>
<div style="left:1763px;top:1018px;width:2px;height:34px;background:;background:linear-gradient(180deg,rgba(30,30,30,0) 0,rgba(30,30,30,0) 66%,rgba(30,30,30,0.6) 100%),repeating-linear-gradient(135deg,#1e1e1e 0 3.8px,#415876 3.8px 8.5px);"></div>
<div style="left:1763px;top:1052px;width:2px;height:36px;background:#979775;"></div>
<div style="left:1813px;top:1018px;width:50px;height:34px;background:#6a5120;"></div>
<div style="left:1814.5px;top:1019.5px;width:48px;height:31px;background:#c59c43;"></div>
<div style="left:1813px;top:1052px;width:50px;height:36px;background:#5e5c48;"></div>
<div style="left:1814.5px;top:1052px;width:48.5px;height:36px;background:#979775;"></div>
<div style="left:1815px;top:1084px;width:23px;height:2px;background:#3a3a30;"></div>
<div style="left:1840px;top:1086px;width:23px;height:2px;background:#3a3a30;"></div>
<div style="left:1863px;top:1018px;width:2px;height:34px;background:;background:linear-gradient(180deg,rgba(30,30,30,0) 0,rgba(30,30,30,0) 66%,rgba(30,30,30,0.6) 100%),repeating-linear-gradient(135deg,#1e1e1e 0 3.8px,#415876 3.8px 8.5px);"></div>
<div style="left:1863px;top:1052px;width:2px;height:36px;background:#979775;"></div>
<div style="left:1911px;top:1018px;width:50px;height:34px;background:#6a5120;"></div>
<div style="left:1912.5px;top:1019.5px;width:48px;height:31px;background:#c59c43;"></div>
<div style="left:1911px;top:1052px;width:50px;height:36px;background:#5e5c48;"></div>
<div style="left:1912.5px;top:1052px;width:48.5px;height:36px;background:#979775;"></div>
<div style="left:1913px;top:1084px;width:23px;height:2px;background:#3a3a30;"></div>
<div style="left:1938px;top:1086px;width:23px;height:2px;background:#3a3a30;"></div>
<div style="left:1961px;top:1018px;width:2px;height:34px;background:;background:linear-gradient(180deg,rgba(30,30,30,0) 0,rgba(30,30,30,0) 66%,rgba(30,30,30,0.6) 100%),repeating-linear-gradient(135deg,#1e1e1e 0 3.8px,#415876 3.8px 8.5px);"></div>
<div style="left:1961px;top:1052px;width:2px;height:36px;background:#979775;"></div>
<div style="left:2011px;top:1018px;width:50px;height:34px;background:#6a5120;"></div>
<div style="left:2012.5px;top:1019.5px;width:48px;height:31px;background:#c59c43;"></div>
<div style="left:2011px;top:1052px;width:50px;height:36px;background:#5e5c48;"></div>
<div style="left:2012.5px;top:1052px;width:48.5px;height:36px;background:#979775;"></div>
<div style="left:2013px;top:1084px;width:23px;height:2px;background:#3a3a30;"></div>
<div style="left:2038px;top:1086px;width:23px;height:2px;background:#3a3a30;"></div>
<div style="left:2061px;top:1018px;width:2px;height:34px;background:;background:linear-gradient(180deg,rgba(30,30,30,0) 0,rgba(30,30,30,0) 66%,rgba(30,30,30,0.6) 100%),repeating-linear-gradient(135deg,#1e1e1e 0 3.8px,#415876 3.8px 8.5px);"></div>
<div style="left:2061px;top:1052px;width:2px;height:36px;background:#979775;"></div>
<div style="left:668px;top:1092px;width:22px;height:34px;background:#6a5120;"></div>
<div style="left:669.5px;top:1093.5px;width:20px;height:31px;background:#c59c43;"></div>
<div style="left:668px;top:1126px;width:22px;height:36px;background:#5e5c48;"></div>
<div style="left:669.5px;top:1126px;width:20.5px;height:36px;background:#979775;"></div>
<div style="left:671.3px;top:1140px;width:2px;height:2px;background:#4a4a3c;"></div>
<div style="left:675.7px;top:1148px;width:2px;height:2px;background:#4a4a3c;"></div>
<div style="left:680.1px;top:1149px;width:2px;height:2px;background:#4a4a3c;"></div>
<div style="left:684.5px;top:1148px;width:2px;height:2px;background:#4a4a3c;"></div>
<div style="left:686.7px;top:1146px;width:2px;height:2px;background:#4a4a3c;"></div>
<div style="left:690px;top:1092px;width:3.5px;height:34px;background:;background:linear-gradient(180deg,rgba(30,30,30,0) 0,rgba(30,30,30,0) 66%,rgba(30,30,30,0.6) 100%),repeating-linear-gradient(135deg,#1e1e1e 0 3.8px,#415876 3.8px 8.5px);"></div>
<div style="left:690px;top:1126px;width:3.5px;height:36px;background:#979775;"></div>
<div style="left:693.5px;top:1092px;width:24.5px;height:34px;background:#6a5120;"></div>
<div style="left:695px;top:1093.5px;width:22.5px;height:31px;background:#c59c43;"></div>
<div style="left:693.5px;top:1126px;width:24.5px;height:36px;background:#5e5c48;"></div>
<div style="left:695px;top:1126px;width:23px;height:36px;background:#979775;"></div>
<div style="left:697.175px;top:1140px;width:2px;height:2px;background:#4a4a3c;"></div>
<div style="left:702.075px;top:1148px;width:2px;height:2px;background:#4a4a3c;"></div>
<div style="left:706.975px;top:1149px;width:2px;height:2px;background:#4a4a3c;"></div>
<div style="left:711.875px;top:1148px;width:2px;height:2px;background:#4a4a3c;"></div>
<div style="left:714.325px;top:1146px;width:2px;height:2px;background:#4a4a3c;"></div>
<div style="left:718px;top:1092px;width:8px;height:34px;background:;background:linear-gradient(180deg,rgba(30,30,30,0) 0,rgba(30,30,30,0) 66%,rgba(30,30,30,0.6) 100%),repeating-linear-gradient(135deg,#1e1e1e 0 3.8px,#415876 3.8px 8.5px);"></div>
<div style="left:718px;top:1126px;width:8px;height:36px;background:#979775;"></div>
<div style="left:768px;top:1092px;width:22px;height:34px;background:#6a5120;"></div>
<div style="left:769.5px;top:1093.5px;width:20px;height:31px;background:#c59c43;"></div>
<div style="left:768px;top:1126px;width:22px;height:36px;background:#5e5c48;"></div>
<div style="left:769.5px;top:1126px;width:20.5px;height:36px;background:#979775;"></div>
<div style="left:771.3px;top:1140px;width:2px;height:2px;background:#4a4a3c;"></div>
<div style="left:775.7px;top:1148px;width:2px;height:2px;background:#4a4a3c;"></div>
<div style="left:780.1px;top:1149px;width:2px;height:2px;background:#4a4a3c;"></div>
<div style="left:784.5px;top:1148px;width:2px;height:2px;background:#4a4a3c;"></div>
<div style="left:786.7px;top:1146px;width:2px;height:2px;background:#4a4a3c;"></div>
<div style="left:790px;top:1092px;width:3.5px;height:34px;background:;background:linear-gradient(180deg,rgba(30,30,30,0) 0,rgba(30,30,30,0) 66%,rgba(30,30,30,0.6) 100%),repeating-linear-gradient(135deg,#1e1e1e 0 3.8px,#415876 3.8px 8.5px);"></div>
<div style="left:790px;top:1126px;width:3.5px;height:36px;background:#979775;"></div>
<div style="left:793.5px;top:1092px;width:24.5px;height:34px;background:#6a5120;"></div>
<div style="left:795px;top:1093.5px;width:22.5px;height:31px;background:#c59c43;"></div>
<div style="left:793.5px;top:1126px;width:24.5px;height:36px;background:#5e5c48;"></div>
<div style="left:795px;top:1126px;width:23px;height:36px;background:#979775;"></div>
<div style="left:797.175px;top:1140px;width:2px;height:2px;background:#4a4a3c;"></div>
<div style="left:802.075px;top:1148px;width:2px;height:2px;background:#4a4a3c;"></div>
<div style="left:806.975px;top:1149px;width:2px;height:2px;background:#4a4a3c;"></div>
<div style="left:811.875px;top:1148px;width:2px;height:2px;background:#4a4a3c;"></div>
<div style="left:814.325px;top:1146px;width:2px;height:2px;background:#4a4a3c;"></div>
<div style="left:818px;top:1092px;width:8px;height:34px;background:;background:linear-gradient(180deg,rgba(30,30,30,0) 0,rgba(30,30,30,0) 66%,rgba(30,30,30,0.6) 100%),repeating-linear-gradient(135deg,#1e1e1e 0 3.8px,#415876 3.8px 8.5px);"></div>
<div style="left:818px;top:1126px;width:8px;height:36px;background:#979775;"></div>
<div style="left:868px;top:1092px;width:22px;height:34px;background:#6a5120;"></div>
<div style="left:869.5px;top:1093.5px;width:20px;height:31px;background:#c59c43;"></div>
<div style="left:868px;top:1126px;width:22px;height:36px;background:#5e5c48;"></div>
<div style="left:869.5px;top:1126px;width:20.5px;height:36px;background:#979775;"></div>
<div style="left:871.3px;top:1140px;width:2px;height:2px;background:#4a4a3c;"></div>
<div style="left:875.7px;top:1148px;width:2px;height:2px;background:#4a4a3c;"></div>
<div style="left:880.1px;top:1149px;width:2px;height:2px;background:#4a4a3c;"></div>
<div style="left:884.5px;top:1148px;width:2px;height:2px;background:#4a4a3c;"></div>
<div style="left:886.7px;top:1146px;width:2px;height:2px;background:#4a4a3c;"></div>
<div style="left:890px;top:1092px;width:3.5px;height:34px;background:;background:linear-gradient(180deg,rgba(30,30,30,0) 0,rgba(30,30,30,0) 66%,rgba(30,30,30,0.6) 100%),repeating-linear-gradient(135deg,#1e1e1e 0 3.8px,#415876 3.8px 8.5px);"></div>
<div style="left:890px;top:1126px;width:3.5px;height:36px;background:#979775;"></div>
<div style="left:893.5px;top:1092px;width:24.5px;height:34px;background:#6a5120;"></div>
<div style="left:895px;top:1093.5px;width:22.5px;height:31px;background:#c59c43;"></div>
<div style="left:893.5px;top:1126px;width:24.5px;height:36px;background:#5e5c48;"></div>
<div style="left:895px;top:1126px;width:23px;height:36px;background:#979775;"></div>
<div style="left:897.175px;top:1140px;width:2px;height:2px;background:#4a4a3c;"></div>
<div style="left:902.075px;top:1148px;width:2px;height:2px;background:#4a4a3c;"></div>
<div style="left:906.975px;top:1149px;width:2px;height:2px;background:#4a4a3c;"></div>
<div style="left:911.875px;top:1148px;width:2px;height:2px;background:#4a4a3c;"></div>
<div style="left:914.325px;top:1146px;width:2px;height:2px;background:#4a4a3c;"></div>
<div style="left:918px;top:1092px;width:8px;height:34px;background:;background:linear-gradient(180deg,rgba(30,30,30,0) 0,rgba(30,30,30,0) 66%,rgba(30,30,30,0.6) 100%),repeating-linear-gradient(135deg,#1e1e1e 0 3.8px,#415876 3.8px 8.5px);"></div>
<div style="left:918px;top:1126px;width:8px;height:36px;background:#979775;"></div>
<div style="left:966px;top:1092px;width:22px;height:34px;background:#6a5120;"></div>
<div style="left:967.5px;top:1093.5px;width:20px;height:31px;background:#c59c43;"></div>
<div style="left:966px;top:1126px;width:22px;height:36px;background:#5e5c48;"></div>
<div style="left:967.5px;top:1126px;width:20.5px;height:36px;background:#979775;"></div>
<div style="left:969.3px;top:1140px;width:2px;height:2px;background:#4a4a3c;"></div>
<div style="left:973.7px;top:1148px;width:2px;height:2px;background:#4a4a3c;"></div>
<div style="left:978.1px;top:1149px;width:2px;height:2px;background:#4a4a3c;"></div>
<div style="left:982.5px;top:1148px;width:2px;height:2px;background:#4a4a3c;"></div>
<div style="left:984.7px;top:1146px;width:2px;height:2px;background:#4a4a3c;"></div>
<div style="left:988px;top:1092px;width:3.5px;height:34px;background:;background:linear-gradient(180deg,rgba(30,30,30,0) 0,rgba(30,30,30,0) 66%,rgba(30,30,30,0.6) 100%),repeating-linear-gradient(135deg,#1e1e1e 0 3.8px,#415876 3.8px 8.5px);"></div>
<div style="left:988px;top:1126px;width:3.5px;height:36px;background:#979775;"></div>
<div style="left:991.5px;top:1092px;width:24.5px;height:34px;background:#6a5120;"></div>
<div style="left:993px;top:1093.5px;width:22.5px;height:31px;background:#c59c43;"></div>
<div style="left:991.5px;top:1126px;width:24.5px;height:36px;background:#5e5c48;"></div>
<div style="left:993px;top:1126px;width:23px;height:36px;background:#979775;"></div>
<div style="left:995.175px;top:1140px;width:2px;height:2px;background:#4a4a3c;"></div>
<div style="left:1000.08px;top:1148px;width:2px;height:2px;background:#4a4a3c;"></div>
<div style="left:1004.98px;top:1149px;width:2px;height:2px;background:#4a4a3c;"></div>
<div style="left:1009.88px;top:1148px;width:2px;height:2px;background:#4a4a3c;"></div>
<div style="left:1012.33px;top:1146px;width:2px;height:2px;background:#4a4a3c;"></div>
<div style="left:1016px;top:1092px;width:8px;height:34px;background:;background:linear-gradient(180deg,rgba(30,30,30,0) 0,rgba(30,30,30,0) 66%,rgba(30,30,30,0.6) 100%),repeating-linear-gradient(135deg,#1e1e1e 0 3.8px,#415876 3.8px 8.5px);"></div>
<div style="left:1016px;top:1126px;width:8px;height:36px;background:#979775;"></div>
<div style="left:1763px;top:1092px;width:22px;height:34px;background:#6a5120;"></div>
<div style="left:1764.5px;top:1093.5px;width:20px;height:31px;background:#c59c43;"></div>
<div style="left:1763px;top:1126px;width:22px;height:36px;background:#5e5c48;"></div>
<div style="left:1764.5px;top:1126px;width:20.5px;height:36px;background:#979775;"></div>
<div style="left:1766.3px;top:1140px;width:2px;height:2px;background:#4a4a3c;"></div>
<div style="left:1770.7px;top:1148px;width:2px;height:2px;background:#4a4a3c;"></div>
<div style="left:1775.1px;top:1149px;width:2px;height:2px;background:#4a4a3c;"></div>
<div style="left:1779.5px;top:1148px;width:2px;height:2px;background:#4a4a3c;"></div>
<div style="left:1781.7px;top:1146px;width:2px;height:2px;background:#4a4a3c;"></div>
<div style="left:1785px;top:1092px;width:3.5px;height:34px;background:;background:linear-gradient(180deg,rgba(30,30,30,0) 0,rgba(30,30,30,0) 66%,rgba(30,30,30,0.6) 100%),repeating-linear-gradient(135deg,#1e1e1e 0 3.8px,#415876 3.8px 8.5px);"></div>
<div style="left:1785px;top:1126px;width:3.5px;height:36px;background:#979775;"></div>
<div style="left:1788.5px;top:1092px;width:24.5px;height:34px;background:#6a5120;"></div>
<div style="left:1790px;top:1093.5px;width:22.5px;height:31px;background:#c59c43;"></div>
<div style="left:1788.5px;top:1126px;width:24.5px;height:36px;background:#5e5c48;"></div>
<div style="left:1790px;top:1126px;width:23px;height:36px;background:#979775;"></div>
<div style="left:1792.17px;top:1140px;width:2px;height:2px;background:#4a4a3c;"></div>
<div style="left:1797.08px;top:1148px;width:2px;height:2px;background:#4a4a3c;"></div>
<div style="left:1801.97px;top:1149px;width:2px;height:2px;background:#4a4a3c;"></div>
<div style="left:1806.88px;top:1148px;width:2px;height:2px;background:#4a4a3c;"></div>
<div style="left:1809.33px;top:1146px;width:2px;height:2px;background:#4a4a3c;"></div>
<div style="left:1813px;top:1092px;width:8px;height:34px;background:;background:linear-gradient(180deg,rgba(30,30,30,0) 0,rgba(30,30,30,0) 66%,rgba(30,30,30,0.6) 100%),repeating-linear-gradient(135deg,#1e1e1e 0 3.8px,#415876 3.8px 8.5px);"></div>
<div style="left:1813px;top:1126px;width:8px;height:36px;background:#979775;"></div>
<div style="left:1862px;top:1092px;width:22px;height:34px;background:#6a5120;"></div>
<div style="left:1863.5px;top:1093.5px;width:20px;height:31px;background:#c59c43;"></div>
<div style="left:1862px;top:1126px;width:22px;height:36px;background:#5e5c48;"></div>
<div style="left:1863.5px;top:1126px;width:20.5px;height:36px;background:#979775;"></div>
<div style="left:1865.3px;top:1140px;width:2px;height:2px;background:#4a4a3c;"></div>
<div style="left:1869.7px;top:1148px;width:2px;height:2px;background:#4a4a3c;"></div>
<div style="left:1874.1px;top:1149px;width:2px;height:2px;background:#4a4a3c;"></div>
<div style="left:1878.5px;top:1148px;width:2px;height:2px;background:#4a4a3c;"></div>
<div style="left:1880.7px;top:1146px;width:2px;height:2px;background:#4a4a3c;"></div>
<div style="left:1884px;top:1092px;width:3.5px;height:34px;background:;background:linear-gradient(180deg,rgba(30,30,30,0) 0,rgba(30,30,30,0) 66%,rgba(30,30,30,0.6) 100%),repeating-linear-gradient(135deg,#1e1e1e 0 3.8px,#415876 3.8px 8.5px);"></div>
<div style="left:1884px;top:1126px;width:3.5px;height:36px;background:#979775;"></div>
<div style="left:1887.5px;top:1092px;width:24.5px;height:34px;background:#6a5120;"></div>
<div style="left:1889px;top:1093.5px;width:22.5px;height:31px;background:#c59c43;"></div>
<div style="left:1887.5px;top:1126px;width:24.5px;height:36px;background:#5e5c48;"></div>
<div style="left:1889px;top:1126px;width:23px;height:36px;background:#979775;"></div>
<div style="left:1891.17px;top:1140px;width:2px;height:2px;background:#4a4a3c;"></div>
<div style="left:1896.08px;top:1148px;width:2px;height:2px;background:#4a4a3c;"></div>
<div style="left:1900.97px;top:1149px;width:2px;height:2px;background:#4a4a3c;"></div>
<div style="left:1905.88px;top:1148px;width:2px;height:2px;background:#4a4a3c;"></div>
<div style="left:1908.33px;top:1146px;width:2px;height:2px;background:#4a4a3c;"></div>
<div style="left:1912px;top:1092px;width:8px;height:34px;background:;background:linear-gradient(180deg,rgba(30,30,30,0) 0,rgba(30,30,30,0) 66%,rgba(30,30,30,0.6) 100%),repeating-linear-gradient(135deg,#1e1e1e 0 3.8px,#415876 3.8px 8.5px);"></div>
<div style="left:1912px;top:1126px;width:8px;height:36px;background:#979775;"></div>
<div style="left:1961px;top:1092px;width:22px;height:34px;background:#6a5120;"></div>
<div style="left:1962.5px;top:1093.5px;width:20px;height:31px;background:#c59c43;"></div>
<div style="left:1961px;top:1126px;width:22px;height:36px;background:#5e5c48;"></div>
<div style="left:1962.5px;top:1126px;width:20.5px;height:36px;background:#979775;"></div>
<div style="left:1964.3px;top:1140px;width:2px;height:2px;background:#4a4a3c;"></div>
<div style="left:1968.7px;top:1148px;width:2px;height:2px;background:#4a4a3c;"></div>
<div style="left:1973.1px;top:1149px;width:2px;height:2px;background:#4a4a3c;"></div>
<div style="left:1977.5px;top:1148px;width:2px;height:2px;background:#4a4a3c;"></div>
<div style="left:1979.7px;top:1146px;width:2px;height:2px;background:#4a4a3c;"></div>
<div style="left:1983px;top:1092px;width:3.5px;height:34px;background:;background:linear-gradient(180deg,rgba(30,30,30,0) 0,rgba(30,30,30,0) 66%,rgba(30,30,30,0.6) 100%),repeating-linear-gradient(135deg,#1e1e1e 0 3.8px,#415876 3.8px 8.5px);"></div>
<div style="left:1983px;top:1126px;width:3.5px;height:36px;background:#979775;"></div>
<div style="left:1986.5px;top:1092px;width:24.5px;height:34px;background:#6a5120;"></div>
<div style="left:1988px;top:1093.5px;width:22.5px;height:31px;background:#c59c43;"></div>
<div style="left:1986.5px;top:1126px;width:24.5px;height:36px;background:#5e5c48;"></div>
<div style="left:1988px;top:1126px;width:23px;height:36px;background:#979775;"></div>
<div style="left:1990.17px;top:1140px;width:2px;height:2px;background:#4a4a3c;"></div>
<div style="left:1995.08px;top:1148px;width:2px;height:2px;background:#4a4a3c;"></div>
<div style="left:1999.97px;top:1149px;width:2px;height:2px;background:#4a4a3c;"></div>
<div style="left:2004.88px;top:1148px;width:2px;height:2px;background:#4a4a3c;"></div>
<div style="left:2007.33px;top:1146px;width:2px;height:2px;background:#4a4a3c;"></div>
<div style="left:2011px;top:1092px;width:8px;height:34px;background:;background:linear-gradient(180deg,rgba(30,30,30,0) 0,rgba(30,30,30,0) 66%,rgba(30,30,30,0.6) 100%),repeating-linear-gradient(135deg,#1e1e1e 0 3.8px,#415876 3.8px 8.5px);"></div>
<div style="left:2011px;top:1126px;width:8px;height:36px;background:#979775;"></div>
<div style="left:2061px;top:1092px;width:22px;height:34px;background:#6a5120;"></div>
<div style="left:2062.5px;top:1093.5px;width:20px;height:31px;background:#c59c43;"></div>
<div style="left:2061px;top:1126px;width:22px;height:36px;background:#5e5c48;"></div>
<div style="left:2062.5px;top:1126px;width:20.5px;height:36px;background:#979775;"></div>
<div style="left:2064.3px;top:1140px;width:2px;height:2px;background:#4a4a3c;"></div>
<div style="left:2068.7px;top:1148px;width:2px;height:2px;background:#4a4a3c;"></div>
<div style="left:2073.1px;top:1149px;width:2px;height:2px;background:#4a4a3c;"></div>
<div style="left:2077.5px;top:1148px;width:2px;height:2px;background:#4a4a3c;"></div>
<div style="left:2079.7px;top:1146px;width:2px;height:2px;background:#4a4a3c;"></div>
<div style="left:2083px;top:1092px;width:3.5px;height:34px;background:;background:linear-gradient(180deg,rgba(30,30,30,0) 0,rgba(30,30,30,0) 66%,rgba(30,30,30,0.6) 100%),repeating-linear-gradient(135deg,#1e1e1e 0 3.8px,#415876 3.8px 8.5px);"></div>
<div style="left:2083px;top:1126px;width:3.5px;height:36px;background:#979775;"></div>
<div style="left:2086.5px;top:1092px;width:24.5px;height:34px;background:#6a5120;"></div>
<div style="left:2088px;top:1093.5px;width:22.5px;height:31px;background:#c59c43;"></div>
<div style="left:2086.5px;top:1126px;width:24.5px;height:36px;background:#5e5c48;"></div>
<div style="left:2088px;top:1126px;width:23px;height:36px;background:#979775;"></div>
<div style="left:2090.18px;top:1140px;width:2px;height:2px;background:#4a4a3c;"></div>
<div style="left:2095.07px;top:1148px;width:2px;height:2px;background:#4a4a3c;"></div>
<div style="left:2099.97px;top:1149px;width:2px;height:2px;background:#4a4a3c;"></div>
<div style="left:2104.88px;top:1148px;width:2px;height:2px;background:#4a4a3c;"></div>
<div style="left:2107.32px;top:1146px;width:2px;height:2px;background:#4a4a3c;"></div>
<div style="left:2111px;top:1092px;width:8px;height:34px;background:;background:linear-gradient(180deg,rgba(30,30,30,0) 0,rgba(30,30,30,0) 66%,rgba(30,30,30,0.6) 100%),repeating-linear-gradient(135deg,#1e1e1e 0 3.8px,#415876 3.8px 8.5px);"></div>
<div style="left:2111px;top:1126px;width:8px;height:36px;background:#979775;"></div>
<div style="left:1004px;top:1166px;width:13px;height:34px;background:#6a5120;"></div>
<div style="left:1005.5px;top:1167.5px;width:11px;height:31px;background:#c59c43;"></div>
<div style="left:1004px;top:1200px;width:13px;height:36px;background:#5e5c48;"></div>
<div style="left:1005.5px;top:1200px;width:11.5px;height:36px;background:#979775;"></div>
<div style="left:1012px;top:1203px;width:4px;height:2px;background:#1b1b1b;"></div>
<div style="left:1013px;top:1207px;width:3px;height:2px;background:#1b1b1b;"></div>
<div style="left:1005px;top:1231px;width:4px;height:2px;background:#1b1b1b;"></div>
<div style="left:1054px;top:1166px;width:13px;height:34px;background:#6a5120;"></div>
<div style="left:1055.5px;top:1167.5px;width:11px;height:31px;background:#c59c43;"></div>
<div style="left:1054px;top:1200px;width:13px;height:36px;background:#5e5c48;"></div>
<div style="left:1055.5px;top:1200px;width:11.5px;height:36px;background:#979775;"></div>
<div style="left:1062px;top:1203px;width:4px;height:2px;background:#1b1b1b;"></div>
<div style="left:1063px;top:1207px;width:3px;height:2px;background:#1b1b1b;"></div>
<div style="left:1055px;top:1231px;width:4px;height:2px;background:#1b1b1b;"></div>
<div style="left:1104px;top:1166px;width:13px;height:34px;background:#6a5120;"></div>
<div style="left:1105.5px;top:1167.5px;width:11px;height:31px;background:#c59c43;"></div>
<div style="left:1104px;top:1200px;width:13px;height:36px;background:#5e5c48;"></div>
<div style="left:1105.5px;top:1200px;width:11.5px;height:36px;background:#979775;"></div>
<div style="left:1112px;top:1203px;width:4px;height:2px;background:#1b1b1b;"></div>
<div style="left:1113px;top:1207px;width:3px;height:2px;background:#1b1b1b;"></div>
<div style="left:1105px;top:1231px;width:4px;height:2px;background:#1b1b1b;"></div>
<div style="left:1154px;top:1166px;width:13px;height:34px;background:#6a5120;"></div>
<div style="left:1155.5px;top:1167.5px;width:11px;height:31px;background:#c59c43;"></div>
<div style="left:1154px;top:1200px;width:13px;height:36px;background:#5e5c48;"></div>
<div style="left:1155.5px;top:1200px;width:11.5px;height:36px;background:#979775;"></div>
<div style="left:1162px;top:1203px;width:4px;height:2px;background:#1b1b1b;"></div>
<div style="left:1163px;top:1207px;width:3px;height:2px;background:#1b1b1b;"></div>
<div style="left:1155px;top:1231px;width:4px;height:2px;background:#1b1b1b;"></div>
<div style="left:606px;top:1240px;width:12.5px;height:35px;background:#6a5120;"></div>
<div style="left:607.5px;top:1241.5px;width:10.5px;height:32px;background:#c59c43;"></div>
<div style="left:606px;top:1240px;width:12px;height:34px;overflow:hidden;"><span style="left:3px;top:8px;font-size:19px;color:#2a2010;font-weight:bold;">A</span></div>
<div style="left:1700px;top:1240px;width:12.5px;height:35px;background:#6a5120;"></div>
<div style="left:1701.5px;top:1241.5px;width:10.5px;height:32px;background:#c59c43;"></div>
<div style="left:1700px;top:1240px;width:12px;height:34px;overflow:hidden;"><span style="left:3px;top:8px;font-size:19px;color:#2a2010;font-weight:bold;">A</span></div>
<div style="left:1110px;top:1312px;width:7px;height:36px;background:#979775;"></div>
<div style="left:1017px;top:1278px;width:93px;height:34px;background:#6a5120;"></div>
<div style="left:1018.5px;top:1279.5px;width:91px;height:31px;background:#c59c43;"></div>
<div style="left:1017px;top:1312px;width:93px;height:36px;background:#5e5c48;"></div>
<div style="left:1018.5px;top:1312px;width:91.5px;height:36px;background:#979775;"></div>
<div style="left:1066px;top:1312px;width:1.5px;height:36px;background:#7b7a66;"></div>
<div style="left:1018px;top:1330.5px;width:21.785px;height:3.5px;background:#1b1b1b;"></div>
<div style="left:1041.25px;top:1342.5px;width:21.785px;height:3.5px;background:#1b1b1b;"></div>
<div style="left:1064.5px;top:1314.5px;width:20.855px;height:3.5px;background:#1b1b1b;"></div>
<div style="left:1087.75px;top:1322.5px;width:21.785px;height:3.5px;background:#1b1b1b;"></div>
<div style="left:1110px;top:1278px;width:7px;height:34px;background:#786e5c;"></div>
<div style="left:1111px;top:1322px;width:5px;height:3px;background:#7c7c74;"></div>
<div style="left:1117px;top:1278px;width:99px;height:34px;background:#6a5120;"></div>
<div style="left:1118.5px;top:1279.5px;width:97px;height:31px;background:#c59c43;"></div>
<div style="left:1117px;top:1312px;width:99px;height:36px;background:#5e5c48;"></div>
<div style="left:1118.5px;top:1312px;width:97.5px;height:36px;background:#979775;"></div>
<div style="left:1165px;top:1312px;width:1.5px;height:36px;background:#7b7a66;"></div>
<div style="left:1215px;top:1312px;width:1.5px;height:36px;background:#7b7a66;"></div>
<div style="left:1118px;top:1330.5px;width:23.255px;height:3.5px;background:#1b1b1b;"></div>
<div style="left:1142.75px;top:1342.5px;width:23.255px;height:3.5px;background:#1b1b1b;"></div>
<div style="left:1167.5px;top:1314.5px;width:22.265px;height:3.5px;background:#1b1b1b;"></div>
<div style="left:1192.25px;top:1322.5px;width:23.255px;height:3.5px;background:#1b1b1b;"></div>
<div style="left:1216px;top:1278px;width:64px;height:34px;background:;background:linear-gradient(180deg,rgba(30,30,30,0) 0,rgba(30,30,30,0) 66%,rgba(30,30,30,0.6) 100%),repeating-linear-gradient(135deg,#1e1e1e 0 3.8px,#415876 3.8px 8.5px);"></div>
<div style="left:1216px;top:1312px;width:64px;height:36px;background:#979775;"></div>
<div style="left:1264px;top:1312px;width:1.5px;height:36px;background:#7b7a66;"></div>
<div style="left:2112px;top:1352px;width:48px;height:35px;background:#6a5120;"></div>
<div style="left:2113.5px;top:1353.5px;width:46px;height:32px;background:#c59c43;"></div>
<div style="left:2160px;top:1352px;width:46px;height:34px;background:;background:linear-gradient(180deg,rgba(30,30,30,0) 0,rgba(30,30,30,0) 66%,rgba(30,30,30,0.6) 100%),repeating-linear-gradient(135deg,#1e1e1e 0 3.8px,#415876 3.8px 8.5px);"></div>
<div style="left:2210px;top:1352px;width:48px;height:35px;background:#6a5120;"></div>
<div style="left:2211.5px;top:1353.5px;width:46px;height:32px;background:#c59c43;"></div>
<div style="left:2258px;top:1352px;width:48px;height:34px;background:;background:linear-gradient(180deg,rgba(30,30,30,0) 0,rgba(30,30,30,0) 66%,rgba(30,30,30,0.6) 100%),repeating-linear-gradient(135deg,#1e1e1e 0 3.8px,#415876 3.8px 8.5px);"></div>
<div style="left:22px;top:42px;width:2px;height:12px;background:#9a9a9a;"></div>
<div style="left:22px;top:42px;width:4px;height:2px;background:#9a9a9a;"></div>
<span style="left:33px;top:33px;font-size:20px;color:#a9a9a9;font-weight:normal;-webkit-text-stroke:0.35px #a9a9a9;">13</span>
<div style="left:72px;top:51px;width:2px;height:3px;background:#8a8a8a;"></div>
<div style="left:122px;top:42px;width:2px;height:12px;background:#9a9a9a;"></div>
<div style="left:122px;top:42px;width:4px;height:2px;background:#9a9a9a;"></div>
<span style="left:133px;top:33px;font-size:20px;color:#a9a9a9;font-weight:normal;-webkit-text-stroke:0.35px #a9a9a9;">17</span>
<div style="left:172px;top:51px;width:2px;height:3px;background:#8a8a8a;"></div>
<div style="left:222px;top:42px;width:2px;height:12px;background:#9a9a9a;"></div>
<div style="left:222px;top:42px;width:4px;height:2px;background:#9a9a9a;"></div>
<span style="left:233px;top:33px;font-size:20px;color:#a9a9a9;font-weight:normal;-webkit-text-stroke:0.35px #a9a9a9;">21</span>
<div style="left:270px;top:51px;width:2px;height:3px;background:#8a8a8a;"></div>
<div style="left:320px;top:42px;width:2px;height:12px;background:#9a9a9a;"></div>
<div style="left:320px;top:42px;width:4px;height:2px;background:#9a9a9a;"></div>
<span style="left:331px;top:33px;font-size:20px;color:#a9a9a9;font-weight:normal;-webkit-text-stroke:0.35px #a9a9a9;">25</span>
<div style="left:370px;top:51px;width:2px;height:3px;background:#8a8a8a;"></div>
<div style="left:420px;top:42px;width:2px;height:12px;background:#9a9a9a;"></div>
<div style="left:420px;top:42px;width:4px;height:2px;background:#9a9a9a;"></div>
<span style="left:431px;top:33px;font-size:20px;color:#a9a9a9;font-weight:normal;-webkit-text-stroke:0.35px #a9a9a9;">29</span>
<div style="left:470px;top:51px;width:2px;height:3px;background:#8a8a8a;"></div>
<div style="left:520px;top:42px;width:2px;height:12px;background:#9a9a9a;"></div>
<div style="left:520px;top:42px;width:4px;height:2px;background:#9a9a9a;"></div>
<span style="left:531px;top:33px;font-size:20px;color:#a9a9a9;font-weight:normal;-webkit-text-stroke:0.35px #a9a9a9;">33</span>
<div style="left:568px;top:51px;width:2px;height:3px;background:#8a8a8a;"></div>
<div style="left:618px;top:42px;width:2px;height:12px;background:#9a9a9a;"></div>
<div style="left:618px;top:42px;width:4px;height:2px;background:#9a9a9a;"></div>
<span style="left:629px;top:33px;font-size:20px;color:#a9a9a9;font-weight:normal;-webkit-text-stroke:0.35px #a9a9a9;">37</span>
<div style="left:668px;top:51px;width:2px;height:3px;background:#8a8a8a;"></div>
<div style="left:718px;top:42px;width:2px;height:12px;background:#9a9a9a;"></div>
<div style="left:718px;top:42px;width:4px;height:2px;background:#9a9a9a;"></div>
<span style="left:729px;top:33px;font-size:20px;color:#a9a9a9;font-weight:normal;-webkit-text-stroke:0.35px #a9a9a9;">41</span>
<div style="left:768px;top:51px;width:2px;height:3px;background:#8a8a8a;"></div>
<div style="left:818px;top:42px;width:2px;height:12px;background:#9a9a9a;"></div>
<div style="left:818px;top:42px;width:4px;height:2px;background:#9a9a9a;"></div>
<span style="left:829px;top:33px;font-size:20px;color:#a9a9a9;font-weight:normal;-webkit-text-stroke:0.35px #a9a9a9;">45</span>
<div style="left:868px;top:51px;width:2px;height:3px;background:#8a8a8a;"></div>
<div style="left:916px;top:42px;width:2px;height:12px;background:#9a9a9a;"></div>
<div style="left:916px;top:42px;width:4px;height:2px;background:#9a9a9a;"></div>
<span style="left:927px;top:33px;font-size:20px;color:#a9a9a9;font-weight:normal;-webkit-text-stroke:0.35px #a9a9a9;">49</span>
<div style="left:966px;top:51px;width:2px;height:3px;background:#8a8a8a;"></div>
<div style="left:1016px;top:42px;width:2px;height:12px;background:#9a9a9a;"></div>
<div style="left:1016px;top:42px;width:4px;height:2px;background:#9a9a9a;"></div>
<span style="left:1027px;top:33px;font-size:20px;color:#a9a9a9;font-weight:normal;-webkit-text-stroke:0.35px #a9a9a9;">53</span>
<div style="left:1066px;top:51px;width:2px;height:3px;background:#8a8a8a;"></div>
<div style="left:1116px;top:42px;width:2px;height:12px;background:#9a9a9a;"></div>
<div style="left:1116px;top:42px;width:4px;height:2px;background:#9a9a9a;"></div>
<span style="left:1127px;top:33px;font-size:20px;color:#a9a9a9;font-weight:normal;-webkit-text-stroke:0.35px #a9a9a9;">57</span>
<div style="left:1166px;top:51px;width:2px;height:3px;background:#8a8a8a;"></div>
<div style="left:1216px;top:42px;width:2px;height:12px;background:#9a9a9a;"></div>
<div style="left:1216px;top:42px;width:4px;height:2px;background:#9a9a9a;"></div>
<span style="left:1227px;top:33px;font-size:20px;color:#a9a9a9;font-weight:normal;-webkit-text-stroke:0.35px #a9a9a9;">61</span>
<div style="left:1264px;top:51px;width:2px;height:3px;background:#8a8a8a;"></div>
<div style="left:1314px;top:42px;width:2px;height:12px;background:#9a9a9a;"></div>
<div style="left:1314px;top:42px;width:4px;height:2px;background:#9a9a9a;"></div>
<span style="left:1325px;top:33px;font-size:20px;color:#a9a9a9;font-weight:normal;-webkit-text-stroke:0.35px #a9a9a9;">65</span>
<div style="left:1364px;top:51px;width:2px;height:3px;background:#8a8a8a;"></div>
<div style="left:1414px;top:42px;width:2px;height:12px;background:#9a9a9a;"></div>
<div style="left:1414px;top:42px;width:4px;height:2px;background:#9a9a9a;"></div>
<span style="left:1425px;top:33px;font-size:20px;color:#a9a9a9;font-weight:normal;-webkit-text-stroke:0.35px #a9a9a9;">69</span>
<div style="left:1464px;top:51px;width:2px;height:3px;background:#8a8a8a;"></div>
<div style="left:1514px;top:42px;width:2px;height:12px;background:#9a9a9a;"></div>
<div style="left:1514px;top:42px;width:4px;height:2px;background:#9a9a9a;"></div>
<span style="left:1525px;top:33px;font-size:20px;color:#a9a9a9;font-weight:normal;-webkit-text-stroke:0.35px #a9a9a9;">73</span>
<div style="left:1562px;top:51px;width:2px;height:3px;background:#8a8a8a;"></div>
<div style="left:1612px;top:42px;width:2px;height:12px;background:#9a9a9a;"></div>
<div style="left:1612px;top:42px;width:4px;height:2px;background:#9a9a9a;"></div>
<span style="left:1623px;top:33px;font-size:20px;color:#a9a9a9;font-weight:normal;-webkit-text-stroke:0.35px #a9a9a9;">77</span>
<div style="left:1662px;top:51px;width:2px;height:3px;background:#8a8a8a;"></div>
<div style="left:1712px;top:42px;width:2px;height:12px;background:#9a9a9a;"></div>
<div style="left:1712px;top:42px;width:4px;height:2px;background:#9a9a9a;"></div>
<span style="left:1723px;top:33px;font-size:20px;color:#a9a9a9;font-weight:normal;-webkit-text-stroke:0.35px #a9a9a9;">81</span>
<div style="left:1762px;top:51px;width:2px;height:3px;background:#8a8a8a;"></div>
<div style="left:1812px;top:42px;width:2px;height:12px;background:#9a9a9a;"></div>
<div style="left:1812px;top:42px;width:4px;height:2px;background:#9a9a9a;"></div>
<span style="left:1823px;top:33px;font-size:20px;color:#a9a9a9;font-weight:normal;-webkit-text-stroke:0.35px #a9a9a9;">85</span>
<div style="left:1862px;top:51px;width:2px;height:3px;background:#8a8a8a;"></div>
<div style="left:1910px;top:42px;width:2px;height:12px;background:#9a9a9a;"></div>
<div style="left:1910px;top:42px;width:4px;height:2px;background:#9a9a9a;"></div>
<span style="left:1921px;top:33px;font-size:20px;color:#a9a9a9;font-weight:normal;-webkit-text-stroke:0.35px #a9a9a9;">89</span>
<div style="left:1960px;top:51px;width:2px;height:3px;background:#8a8a8a;"></div>
<div style="left:2010px;top:42px;width:2px;height:12px;background:#9a9a9a;"></div>
<div style="left:2010px;top:42px;width:4px;height:2px;background:#9a9a9a;"></div>
<span style="left:2021px;top:33px;font-size:20px;color:#a9a9a9;font-weight:normal;-webkit-text-stroke:0.35px #a9a9a9;">93</span>
<div style="left:2060px;top:51px;width:2px;height:3px;background:#8a8a8a;"></div>
<div style="left:2110px;top:42px;width:2px;height:12px;background:#9a9a9a;"></div>
<div style="left:2110px;top:42px;width:4px;height:2px;background:#9a9a9a;"></div>
<span style="left:2121px;top:33px;font-size:20px;color:#a9a9a9;font-weight:normal;-webkit-text-stroke:0.35px #a9a9a9;">97</span>
<div style="left:2160px;top:51px;width:2px;height:3px;background:#8a8a8a;"></div>
<div style="left:2210px;top:42px;width:2px;height:12px;background:#9a9a9a;"></div>
<div style="left:2210px;top:42px;width:4px;height:2px;background:#9a9a9a;"></div>
<span style="left:2221px;top:33px;font-size:20px;color:#a9a9a9;font-weight:normal;-webkit-text-stroke:0.35px #a9a9a9;">101</span>
<div style="left:2258px;top:51px;width:2px;height:3px;background:#8a8a8a;"></div>
<div style="left:2308px;top:42px;width:2px;height:12px;background:#9a9a9a;"></div>
<div style="left:2308px;top:42px;width:4px;height:2px;background:#9a9a9a;"></div>
<span style="left:2319px;top:33px;font-size:20px;color:#a9a9a9;font-weight:normal;-webkit-text-stroke:0.35px #a9a9a9;">105</span>
<div style="left:2358px;top:51px;width:2px;height:3px;background:#8a8a8a;"></div>
<div style="left:22px;top:54px;width:2364px;height:22px;background:#8d8d8d;"></div>
<div style="left:24px;top:56px;width:2360px;height:18px;background:#5d5d5d;"></div>
<svg style="left:22px;top:54px;" width="20" height="22"><polygon points="2,2 17,11 2,20" fill="#5a5a5a" stroke="#9a9a9a" stroke-width="2"/></svg>
<svg style="left:2366px;top:54px;" width="20" height="22"><polygon points="18,2 3,11 18,20" fill="#5a5a5a" stroke="#9a9a9a" stroke-width="2"/></svg>
<div style="left:22px;top:76px;width:2px;height:1354px;background:#a3a3a3;"></div>
<svg style="left:22px;top:76px;" width="20" height="22"><polygon points="1,1.5 16,10.5 1,19.5" fill="#555555" stroke="#a3a3a3" stroke-width="2"/></svg>
<div style="left:43px;top:77px;width:65.1094px;height:21px;background:#353535;"></div>
<span style="left:46.5px;top:78.5px;font-size:19px;color:#c9c9c9;font-weight:normal;-webkit-text-stroke:0.4px #c9c9c9;">INTRO</span>
<div style="left:222px;top:76px;width:2px;height:1354px;background:#a3a3a3;"></div>
<svg style="left:222px;top:76px;" width="20" height="22"><polygon points="1,1.5 16,10.5 1,19.5" fill="#555555" stroke="#a3a3a3" stroke-width="2"/></svg>
<div style="left:243px;top:77px;width:147.453px;height:21px;background:#353535;"></div>
<span style="left:246.5px;top:78.5px;font-size:19px;color:#c9c9c9;font-weight:normal;-webkit-text-stroke:0.4px #c9c9c9;">BREAK - DOWN</span>
<div style="left:420px;top:76px;width:2px;height:1354px;background:#a3a3a3;"></div>
<svg style="left:420px;top:76px;" width="20" height="22"><polygon points="1,1.5 16,10.5 1,19.5" fill="#555555" stroke="#a3a3a3" stroke-width="2"/></svg>
<div style="left:441px;top:77px;width:105.234px;height:21px;background:#353535;"></div>
<span style="left:444.5px;top:78.5px;font-size:19px;color:#c9c9c9;font-weight:normal;-webkit-text-stroke:0.4px #c9c9c9;">BUILD - UP</span>
<div style="left:618px;top:76px;width:2px;height:1354px;background:#a3a3a3;"></div>
<svg style="left:618px;top:76px;" width="20" height="22"><polygon points="1,1.5 16,10.5 1,19.5" fill="#555555" stroke="#a3a3a3" stroke-width="2"/></svg>
<div style="left:639px;top:77px;width:60.8906px;height:21px;background:#353535;"></div>
<span style="left:642.5px;top:78.5px;font-size:19px;color:#c9c9c9;font-weight:normal;-webkit-text-stroke:0.4px #c9c9c9;">DROP</span>
<div style="left:1016px;top:76px;width:2px;height:1354px;background:#a3a3a3;"></div>
<svg style="left:1016px;top:76px;" width="20" height="22"><polygon points="1,1.5 16,10.5 1,19.5" fill="#555555" stroke="#a3a3a3" stroke-width="2"/></svg>
<div style="left:1037px;top:77px;width:104.172px;height:21px;background:#353535;"></div>
<span style="left:1040.5px;top:78.5px;font-size:19px;color:#c9c9c9;font-weight:normal;-webkit-text-stroke:0.4px #c9c9c9;">AD - DROP</span>
<div style="left:1216px;top:76px;width:2px;height:1354px;background:#a3a3a3;"></div>
<svg style="left:1216px;top:76px;" width="20" height="22"><polygon points="1,1.5 16,10.5 1,19.5" fill="#555555" stroke="#a3a3a3" stroke-width="2"/></svg>
<div style="left:1237px;top:77px;width:70.4062px;height:21px;background:#353535;"></div>
<span style="left:1240.5px;top:78.5px;font-size:19px;color:#c9c9c9;font-weight:normal;-webkit-text-stroke:0.4px #c9c9c9;">BREAK</span>
<div style="left:1314px;top:76px;width:2px;height:1354px;background:#a3a3a3;"></div>
<svg style="left:1314px;top:76px;" width="20" height="22"><polygon points="1,1.5 16,10.5 1,19.5" fill="#555555" stroke="#a3a3a3" stroke-width="2"/></svg>
<div style="left:1335px;top:77px;width:130.562px;height:21px;background:#353535;"></div>
<span style="left:1338.5px;top:78.5px;font-size:19px;color:#c9c9c9;font-weight:normal;-webkit-text-stroke:0.4px #c9c9c9;">BREAKDOWN</span>
<div style="left:1514px;top:76px;width:2px;height:1354px;background:#a3a3a3;"></div>
<svg style="left:1514px;top:76px;" width="20" height="22"><polygon points="1,1.5 16,10.5 1,19.5" fill="#555555" stroke="#a3a3a3" stroke-width="2"/></svg>
<div style="left:1535px;top:77px;width:105.234px;height:21px;background:#353535;"></div>
<span style="left:1538.5px;top:78.5px;font-size:19px;color:#c9c9c9;font-weight:normal;-webkit-text-stroke:0.4px #c9c9c9;">BUILD - UP</span>
<div style="left:1712px;top:76px;width:2px;height:1354px;background:#a3a3a3;"></div>
<svg style="left:1712px;top:76px;" width="20" height="22"><polygon points="1,1.5 16,10.5 1,19.5" fill="#555555" stroke="#a3a3a3" stroke-width="2"/></svg>
<div style="left:1733px;top:77px;width:60.8906px;height:21px;background:#353535;"></div>
<span style="left:1736.5px;top:78.5px;font-size:19px;color:#c9c9c9;font-weight:normal;-webkit-text-stroke:0.4px #c9c9c9;">DROP</span>
<div style="left:2110px;top:76px;width:2px;height:1354px;background:#a3a3a3;"></div>
<svg style="left:2110px;top:76px;" width="20" height="22"><polygon points="1,1.5 16,10.5 1,19.5" fill="#555555" stroke="#a3a3a3" stroke-width="2"/></svg>
<div style="left:2131px;top:77px;width:74.6094px;height:21px;background:#353535;"></div>
<span style="left:2134.5px;top:78.5px;font-size:19px;color:#c9c9c9;font-weight:normal;-webkit-text-stroke:0.4px #c9c9c9;">OUTRO</span>
<div style="left:2308px;top:76px;width:2px;height:1354px;background:#a3a3a3;"></div>
<svg style="left:2308px;top:76px;" width="20" height="22"><polygon points="1,1.5 16,10.5 1,19.5" fill="#555555" stroke="#a3a3a3" stroke-width="2"/></svg>
<div style="left:2329px;top:77px;width:55px;height:21px;background:#353535;"></div>
<span style="left:2332.5px;top:78.5px;font-size:19px;color:#c9c9c9;font-weight:normal;-webkit-text-stroke:0.4px #c9c9c9;">OVER</span>
<div style="left:2384px;top:76px;width:2px;height:1354px;background:#a3a3a3;"></div>
<div style="left:2386px;top:76px;width:16px;height:22px;background:#313131;"></div>
<div style="left:10px;top:1430px;width:2392px;height:42px;background:#353535;"></div>
<div style="left:50px;top:1430px;width:2px;height:4px;background:#8a8a8a;"></div>
<div style="left:115px;top:1430px;width:2px;height:15px;background:#9a9a9a;"></div>
<div style="left:115px;top:1443px;width:4px;height:2px;background:#9a9a9a;"></div>
<span style="left:121px;top:1434px;font-size:21px;color:#a9a9a9;font-weight:normal;-webkit-text-stroke:0.35px #a9a9a9;">0:30</span>
<div style="left:180px;top:1430px;width:2px;height:4px;background:#8a8a8a;"></div>
<div style="left:246px;top:1430px;width:2px;height:4px;background:#8a8a8a;"></div>
<div style="left:311px;top:1430px;width:2px;height:15px;background:#9a9a9a;"></div>
<div style="left:311px;top:1443px;width:4px;height:2px;background:#9a9a9a;"></div>
<span style="left:317px;top:1434px;font-size:21px;color:#a9a9a9;font-weight:normal;-webkit-text-stroke:0.35px #a9a9a9;">0:45</span>
<div style="left:376px;top:1430px;width:2px;height:4px;background:#8a8a8a;"></div>
<div style="left:441px;top:1430px;width:2px;height:4px;background:#8a8a8a;"></div>
<div style="left:506px;top:1430px;width:2px;height:15px;background:#9a9a9a;"></div>
<div style="left:506px;top:1443px;width:4px;height:2px;background:#9a9a9a;"></div>
<span style="left:512px;top:1434px;font-size:21px;color:#a9a9a9;font-weight:normal;-webkit-text-stroke:0.35px #a9a9a9;">1:00</span>
<div style="left:572px;top:1430px;width:2px;height:4px;background:#8a8a8a;"></div>
<div style="left:637px;top:1430px;width:2px;height:4px;background:#8a8a8a;"></div>
<div style="left:702px;top:1430px;width:2px;height:15px;background:#9a9a9a;"></div>
<div style="left:702px;top:1443px;width:4px;height:2px;background:#9a9a9a;"></div>
<span style="left:708px;top:1434px;font-size:21px;color:#a9a9a9;font-weight:normal;-webkit-text-stroke:0.35px #a9a9a9;">1:15</span>
<div style="left:767px;top:1430px;width:2px;height:4px;background:#8a8a8a;"></div>
<div style="left:832px;top:1430px;width:2px;height:4px;background:#8a8a8a;"></div>
<div style="left:898px;top:1430px;width:2px;height:15px;background:#9a9a9a;"></div>
<div style="left:898px;top:1443px;width:4px;height:2px;background:#9a9a9a;"></div>
<span style="left:904px;top:1434px;font-size:21px;color:#a9a9a9;font-weight:normal;-webkit-text-stroke:0.35px #a9a9a9;">1:30</span>
<div style="left:963px;top:1430px;width:2px;height:4px;background:#8a8a8a;"></div>
<div style="left:1028px;top:1430px;width:2px;height:4px;background:#8a8a8a;"></div>
<div style="left:1093px;top:1430px;width:2px;height:15px;background:#9a9a9a;"></div>
<div style="left:1093px;top:1443px;width:4px;height:2px;background:#9a9a9a;"></div>
<span style="left:1099px;top:1434px;font-size:21px;color:#a9a9a9;font-weight:normal;-webkit-text-stroke:0.35px #a9a9a9;">1:45</span>
<div style="left:1158px;top:1430px;width:2px;height:4px;background:#8a8a8a;"></div>
<div style="left:1224px;top:1430px;width:2px;height:4px;background:#8a8a8a;"></div>
<div style="left:1289px;top:1430px;width:2px;height:15px;background:#9a9a9a;"></div>
<div style="left:1289px;top:1443px;width:4px;height:2px;background:#9a9a9a;"></div>
<span style="left:1295px;top:1434px;font-size:21px;color:#a9a9a9;font-weight:normal;-webkit-text-stroke:0.35px #a9a9a9;">2:00</span>
<div style="left:1354px;top:1430px;width:2px;height:4px;background:#8a8a8a;"></div>
<div style="left:1419px;top:1430px;width:2px;height:4px;background:#8a8a8a;"></div>
<div style="left:1484px;top:1430px;width:2px;height:15px;background:#9a9a9a;"></div>
<div style="left:1484px;top:1443px;width:4px;height:2px;background:#9a9a9a;"></div>
<span style="left:1490px;top:1434px;font-size:21px;color:#a9a9a9;font-weight:normal;-webkit-text-stroke:0.35px #a9a9a9;">2:15</span>
<div style="left:1550px;top:1430px;width:2px;height:4px;background:#8a8a8a;"></div>
<div style="left:1615px;top:1430px;width:2px;height:4px;background:#8a8a8a;"></div>
<div style="left:1680px;top:1430px;width:2px;height:15px;background:#9a9a9a;"></div>
<div style="left:1680px;top:1443px;width:4px;height:2px;background:#9a9a9a;"></div>
<span style="left:1686px;top:1434px;font-size:21px;color:#a9a9a9;font-weight:normal;-webkit-text-stroke:0.35px #a9a9a9;">2:30</span>
<div style="left:1745px;top:1430px;width:2px;height:4px;background:#8a8a8a;"></div>
<div style="left:1810px;top:1430px;width:2px;height:4px;background:#8a8a8a;"></div>
<div style="left:1876px;top:1430px;width:2px;height:15px;background:#9a9a9a;"></div>
<div style="left:1876px;top:1443px;width:4px;height:2px;background:#9a9a9a;"></div>
<span style="left:1882px;top:1434px;font-size:21px;color:#a9a9a9;font-weight:normal;-webkit-text-stroke:0.35px #a9a9a9;">2:45</span>
<div style="left:1941px;top:1430px;width:2px;height:4px;background:#8a8a8a;"></div>
<div style="left:2006px;top:1430px;width:2px;height:4px;background:#8a8a8a;"></div>
<div style="left:2071px;top:1430px;width:2px;height:15px;background:#9a9a9a;"></div>
<div style="left:2071px;top:1443px;width:4px;height:2px;background:#9a9a9a;"></div>
<span style="left:2077px;top:1434px;font-size:21px;color:#a9a9a9;font-weight:normal;-webkit-text-stroke:0.35px #a9a9a9;">3:00</span>
<div style="left:2136px;top:1430px;width:2px;height:4px;background:#8a8a8a;"></div>
<div style="left:2202px;top:1430px;width:2px;height:4px;background:#8a8a8a;"></div>
<div style="left:2267px;top:1430px;width:2px;height:15px;background:#9a9a9a;"></div>
<div style="left:2267px;top:1443px;width:4px;height:2px;background:#9a9a9a;"></div>
<span style="left:2273px;top:1434px;font-size:21px;color:#a9a9a9;font-weight:normal;-webkit-text-stroke:0.35px #a9a9a9;">3:15</span>
<div style="left:2332px;top:1430px;width:2px;height:4px;background:#8a8a8a;"></div>
<div style="left:2406px;top:102px;width:206px;height:68px;background:#d65e9e;"></div>
<svg style="left:2410px;top:106px;" width="26" height="26"><circle cx="13" cy="13" r="11.8" fill="none" stroke="#2a1a2a" stroke-width="1.8"/><line x1="8.3" y1="9" x2="17.8" y2="9" stroke="#2a1a2a" stroke-width="2"/><line x1="8.3" y1="13" x2="17.8" y2="13" stroke="#2a1a2a" stroke-width="2"/><line x1="8.3" y1="17" x2="17.8" y2="17" stroke="#2a1a2a" stroke-width="2"/></svg>
<span style="left:2443px;top:110px;font-size:19.5px;color:#2b1b2b;font-weight:bold;transform:scaleX(0.9484);transform-origin:0 0;">VOCALs</span>
<div style="left:2406px;top:174px;width:206px;height:104px;background:#ad7ac2;"></div>
<svg style="left:2410px;top:178px;" width="26" height="26"><circle cx="13" cy="13" r="11.8" fill="none" stroke="#2a1a2a" stroke-width="1.8"/><line x1="6.2" y1="9" x2="15.8" y2="9" stroke="#2a1a2a" stroke-width="2"/><line x1="10.2" y1="13" x2="19.8" y2="13" stroke="#2a1a2a" stroke-width="2"/><line x1="10.2" y1="17" x2="19.8" y2="17" stroke="#2a1a2a" stroke-width="2"/></svg>
<span style="left:2443px;top:182px;font-size:19.5px;color:#2b1b2b;font-weight:bold;transform:scaleX(0.9882);transform-origin:0 0;">SYNTH CHORDs</span>
<div style="left:2406px;top:278px;width:8px;height:74px;background:#ad7ac2;"></div>
<div style="left:2416px;top:282px;width:196px;height:70px;background:#5a8fdf;"></div>
<svg style="left:2420px;top:286px;" width="26" height="26"><circle cx="13" cy="13" r="11.8" fill="none" stroke="#bdbdbb" stroke-width="1.8"/><polygon points="6.2,10.2 19.8,10.2 13,19.2" fill="#bdbdbb"/></svg>
<span style="left:2452px;top:290px;font-size:19.5px;color:#bdbdbb;font-weight:bold;transform:scaleX(1.0248);transform-origin:0 0;">SYNTH - Droe</span>
<div style="left:2406px;top:352px;width:8px;height:74px;background:#ad7ac2;"></div>
<div style="left:2416px;top:356px;width:196px;height:70px;background:#5a8fdf;"></div>
<svg style="left:2420px;top:360px;" width="26" height="26"><circle cx="13" cy="13" r="11.8" fill="none" stroke="#bdbdbb" stroke-width="1.8"/><polygon points="6.2,10.2 19.8,10.2 13,19.2" fill="#bdbdbb"/></svg>
<span style="left:2452px;top:364px;font-size:19.5px;color:#bdbdbb;font-weight:bold;transform:scaleX(1.0527);transform-origin:0 0;">SYNTH - Vtram</span>
<div style="left:2406px;top:426px;width:8px;height:74px;background:#ad7ac2;"></div>
<div style="left:2416px;top:430px;width:196px;height:70px;background:#5a8fdf;"></div>
<svg style="left:2420px;top:434px;" width="26" height="26"><circle cx="13" cy="13" r="11.8" fill="none" stroke="#bdbdbb" stroke-width="1.8"/><polygon points="6.2,10.2 19.8,10.2 13,19.2" fill="#bdbdbb"/></svg>
<span style="left:2452px;top:438px;font-size:19.5px;color:#bdbdbb;font-weight:bold;transform:scaleX(1.0311);transform-origin:0 0;">STRING - Cellit</span>
<div style="left:2406px;top:500px;width:8px;height:72px;background:#ad7ac2;"></div>
<div style="left:2416px;top:504px;width:196px;height:68px;background:#ad7ac2;"></div>
<svg style="left:2420px;top:508px;" width="26" height="26"><circle cx="13" cy="13" r="11.8" fill="none" stroke="#2a1a2a" stroke-width="1.8"/><line x1="8.3" y1="9" x2="17.8" y2="9" stroke="#2a1a2a" stroke-width="2"/><line x1="8.3" y1="13" x2="17.8" y2="13" stroke="#2a1a2a" stroke-width="2"/><line x1="8.3" y1="17" x2="17.8" y2="17" stroke="#2a1a2a" stroke-width="2"/></svg>
<span style="left:2453px;top:512px;font-size:19.5px;color:#2b1b2b;font-weight:bold;transform:scaleX(0.9830);transform-origin:0 0;">DROP - SYNTH</span>
<div style="left:2406px;top:572px;width:8px;height:74px;background:#ad7ac2;"></div>
<div style="left:2416px;top:576px;width:196px;height:70px;background:#5a8fdf;"></div>
<svg style="left:2420px;top:580px;" width="26" height="26"><circle cx="13" cy="13" r="11.8" fill="none" stroke="#bdbdbb" stroke-width="1.8"/><polygon points="6.2,10.2 19.8,10.2 13,19.2" fill="#bdbdbb"/></svg>
<span style="left:2452px;top:584px;font-size:19.5px;color:#bdbdbb;font-weight:bold;transform:scaleX(1.0279);transform-origin:0 0;">SYNTH - Peuler</span>
<div style="left:2406px;top:646px;width:8px;height:74px;background:#ad7ac2;"></div>
<div style="left:2416px;top:650px;width:196px;height:70px;background:#5a8fdf;"></div>
<svg style="left:2420px;top:654px;" width="26" height="26"><circle cx="13" cy="13" r="11.8" fill="none" stroke="#bdbdbb" stroke-width="1.8"/><polygon points="6.2,10.2 19.8,10.2 13,19.2" fill="#bdbdbb"/></svg>
<span style="left:2452px;top:658px;font-size:19.5px;color:#bdbdbb;font-weight:bold;transform:scaleX(1.0147);transform-origin:0 0;">CHORD - Loer</span>
<div style="left:2406px;top:720px;width:8px;height:74px;background:#ad7ac2;"></div>
<div style="left:2416px;top:724px;width:196px;height:70px;background:#5a8fdf;"></div>
<svg style="left:2420px;top:728px;" width="26" height="26"><circle cx="13" cy="13" r="11.8" fill="none" stroke="#bdbdbb" stroke-width="1.8"/><polygon points="6.2,10.2 19.8,10.2 13,19.2" fill="#bdbdbb"/></svg>
<span style="left:2452px;top:732px;font-size:19.5px;color:#bdbdbb;font-weight:bold;transform:scaleX(1.0167);transform-origin:0 0;">SYNTH - Twinkl</span>
<div style="left:2406px;top:798px;width:206px;height:104px;background:#c49a42;"></div>
<svg style="left:2410px;top:802px;" width="26" height="26"><circle cx="13" cy="13" r="11.8" fill="none" stroke="#2a1f0a" stroke-width="1.8"/><line x1="6.2" y1="9" x2="15.8" y2="9" stroke="#2a1f0a" stroke-width="2"/><line x1="10.2" y1="13" x2="19.8" y2="13" stroke="#2a1f0a" stroke-width="2"/><line x1="10.2" y1="17" x2="19.8" y2="17" stroke="#2a1f0a" stroke-width="2"/></svg>
<span style="left:2443px;top:806px;font-size:19.5px;color:#241a08;font-weight:bold;transform:scaleX(0.8974);transform-origin:0 0;">BASSEs</span>
<div style="left:2406px;top:902px;width:8px;height:74px;background:#c49a42;"></div>
<div style="left:2416px;top:906px;width:196px;height:70px;background:#5a8fdf;"></div>
<svg style="left:2420px;top:910px;" width="26" height="26"><circle cx="13" cy="13" r="11.8" fill="none" stroke="#bdbdbb" stroke-width="1.8"/><polygon points="6.2,10.2 19.8,10.2 13,19.2" fill="#bdbdbb"/></svg>
<span style="left:2452px;top:914px;font-size:19.5px;color:#bdbdbb;font-weight:bold;transform:scaleX(0.9834);transform-origin:0 0;">BASS - Droe</span>
<div style="left:2406px;top:976px;width:8px;height:38px;background:#c49a42;"></div>
<div style="left:2416px;top:980px;width:196px;height:34px;background:#5a8fdf;"></div>
<svg style="left:2420px;top:984px;" width="26" height="26"><circle cx="13" cy="13" r="11.8" fill="none" stroke="#bdbdbb" stroke-width="1.8"/><polygon points="9.5,6.5 19,13 9.5,19.5" fill="#bdbdbb"/></svg>
<span style="left:2452px;top:988px;font-size:19.5px;color:#bdbdbb;font-weight:bold;transform:scaleX(1.0030);transform-origin:0 0;">BASS - Arnold</span>
<div style="left:2406px;top:1014px;width:8px;height:74px;background:#c49a42;"></div>
<div style="left:2416px;top:1018px;width:196px;height:70px;background:#5a8fdf;"></div>
<svg style="left:2420px;top:1022px;" width="26" height="26"><circle cx="13" cy="13" r="11.8" fill="none" stroke="#bdbdbb" stroke-width="1.8"/><polygon points="6.2,10.2 19.8,10.2 13,19.2" fill="#bdbdbb"/></svg>
<span style="left:2452px;top:1026px;font-size:19.5px;color:#bdbdbb;font-weight:bold;transform:scaleX(0.9696);transform-origin:0 0;">BASS - Call</span>
<div style="left:2406px;top:1088px;width:8px;height:74px;background:#c49a42;"></div>
<div style="left:2416px;top:1092px;width:196px;height:70px;background:#5a8fdf;"></div>
<svg style="left:2420px;top:1096px;" width="26" height="26"><circle cx="13" cy="13" r="11.8" fill="none" stroke="#bdbdbb" stroke-width="1.8"/><polygon points="6.2,10.2 19.8,10.2 13,19.2" fill="#bdbdbb"/></svg>
<span style="left:2452px;top:1100px;font-size:19.5px;color:#bdbdbb;font-weight:bold;transform:scaleX(0.9782);transform-origin:0 0;">BASS - Growl</span>
<div style="left:2406px;top:1162px;width:8px;height:74px;background:#c49a42;"></div>
<div style="left:2416px;top:1166px;width:196px;height:70px;background:#5a8fdf;"></div>
<svg style="left:2420px;top:1170px;" width="26" height="26"><circle cx="13" cy="13" r="11.8" fill="none" stroke="#bdbdbb" stroke-width="1.8"/><polygon points="6.2,10.2 19.8,10.2 13,19.2" fill="#bdbdbb"/></svg>
<span style="left:2452px;top:1174px;font-size:19.5px;color:#bdbdbb;font-weight:bold;transform:scaleX(0.9679);transform-origin:0 0;">BASS - Reese Gl</span>
<div style="left:2406px;top:1236px;width:8px;height:38px;background:#c49a42;"></div>
<div style="left:2416px;top:1240px;width:196px;height:34px;background:#5a8fdf;"></div>
<svg style="left:2420px;top:1244px;" width="26" height="26"><circle cx="13" cy="13" r="11.8" fill="none" stroke="#bdbdbb" stroke-width="1.8"/><polygon points="9.5,6.5 19,13 9.5,19.5" fill="#bdbdbb"/></svg>
<span style="left:2452px;top:1248px;font-size:19.5px;color:#bdbdbb;font-weight:bold;transform:scaleX(0.9838);transform-origin:0 0;">BASS - Reverse</span>
<div style="left:2406px;top:1274px;width:8px;height:74px;background:#c49a42;"></div>
<div style="left:2416px;top:1278px;width:196px;height:70px;background:#5a8fdf;"></div>
<svg style="left:2420px;top:1282px;" width="26" height="26"><circle cx="13" cy="13" r="11.8" fill="none" stroke="#bdbdbb" stroke-width="1.8"/><polygon points="6.2,10.2 19.8,10.2 13,19.2" fill="#bdbdbb"/></svg>
<span style="left:2452px;top:1286px;font-size:19.5px;color:#bdbdbb;font-weight:bold;transform:scaleX(0.9546);transform-origin:0 0;">BASS - Brass</span>
<div style="left:2406px;top:1348px;width:8px;height:38px;background:#c49a42;"></div>
<div style="left:2416px;top:1352px;width:196px;height:34px;background:#5a8fdf;"></div>
<svg style="left:2420px;top:1356px;" width="26" height="26"><circle cx="13" cy="13" r="11.8" fill="none" stroke="#bdbdbb" stroke-width="1.8"/><polygon points="6.2,10.2 19.8,10.2 13,19.2" fill="#bdbdbb"/></svg>
<span style="left:2452px;top:1360px;font-size:19.5px;color:#bdbdbb;font-weight:bold;transform:scaleX(0.9956);transform-origin:0 0;">BASS - Anacond</span>
<div style="left:2428px;top:698px;width:10px;height:2px;background:#bdbdbb;"></div>
<div style="left:2428px;top:702px;width:10px;height:2px;background:#bdbdbb;"></div>
<div style="left:2428px;top:706px;width:10px;height:2px;background:#bdbdbb;"></div>
<div style="left:2406px;top:1392px;width:206px;height:34px;background:#e4742f;"></div>
<svg style="left:2410px;top:1396px;" width="26" height="26"><circle cx="13" cy="13" r="11.8" fill="none" stroke="#2a1406" stroke-width="1.8"/><polygon points="9.5,6.5 19,13 9.5,19.5" fill="#2a1406"/></svg>
<span style="left:2447px;top:1398.5px;font-size:20px;color:#2a1406;font-weight:bold;">Main</span>
<span style="left:2342px;top:1391px;font-size:34px;color:#777777;font-weight:bold;letter-spacing:2.4px;">2/1</span>
<div style="left:2384px;top:1392px;width:2px;height:38px;background:#a3a3a3;"></div>
<div style="left:2412px;top:28px;width:58px;height:26px;background:#1f1f1f;border-radius:13px;box-sizing:border-box;border:1px solid #181818;"></div>
<span style="left:2424px;top:30.5px;font-size:21px;color:#c8c8c8;font-weight:normal;-webkit-text-stroke:0.5px #c8c8c8;">Set</span>
<div style="left:2492px;top:28px;width:46px;height:26px;background:#1e1e1e;box-sizing:border-box;border:2px solid #161616;"></div>
<svg style="left:2492px;top:28px;" width="46" height="26"><line x1="19" y1="16.5" x2="27" y2="9.5" stroke="#bdbdbd" stroke-width="2.5"/><circle cx="18.5" cy="17" r="3.2" fill="#bdbdbd"/><circle cx="27.5" cy="9" r="3.2" fill="#bdbdbd"/></svg>
<div style="left:2546px;top:28px;width:46px;height:26px;background:#df7249;box-sizing:border-box;border:2px solid #111111;"></div>
<svg style="left:2546px;top:28px;" width="46" height="26"><path d="M19.1 13 V11 A3.9 3.9 0 0 1 26.9 11 V13" fill="none" stroke="#080808" stroke-width="1.8"/><rect x="16" y="12.2" width="14" height="7.6" fill="#080808"/></svg>
<div style="left:2412px;top:64px;width:26px;height:26px;background:#1f1f1f;border-radius:50%;box-sizing:border-box;border:1.5px solid #191919;"></div>
<div style="left:2444px;top:64px;width:26px;height:26px;background:#1f1f1f;border-radius:50%;box-sizing:border-box;border:1.5px solid #191919;"></div>
<svg style="left:2412px;top:64px;" width="26" height="26"><polygon points="6.2,13.2 14,6.9 14,19.5" fill="#6f6f6f"/><rect x="13" y="11.8" width="7" height="2.8" fill="#6f6f6f"/></svg>
<svg style="left:2444px;top:64px;" width="26" height="26"><polygon points="19.8,13.2 13,6.9 13,19.5" fill="#c4c4c4"/><rect x="6" y="11.8" width="7.5" height="2.8" fill="#c4c4c4"/></svg>
<div style="left:2406px;top:1438px;width:29px;height:26px;background:#f5b36b;box-sizing:border-box;border:2px solid #141414;"></div>
<svg style="left:2406px;top:1438px;" width="29" height="26"><rect x="6" y="9.8" width="1.9" height="6" fill="#100a04"/><rect x="10.3" y="5.950000000000001" width="1.9" height="13.7" fill="#100a04"/><rect x="14" y="3.8000000000000007" width="1.9" height="18" fill="#100a04"/><rect x="18.2" y="7.950000000000001" width="1.9" height="9.7" fill="#100a04"/><rect x="22.2" y="9.8" width="1.9" height="6" fill="#100a04"/></svg>
<div style="left:2442px;top:1438px;width:70px;height:26px;background:#1f1f1f;box-sizing:border-box;border:2px solid #141414;"></div>
<div style="left:2444px;top:1440px;width:20px;height:22px;background:#2e7080;"></div>
<span style="left:2451px;top:1440.5px;font-size:21px;color:#c8c8c8;font-weight:normal;-webkit-text-stroke:0.3px #c8c8c8;">1.00x</span>
<div style="left:2544px;top:1438px;width:30px;height:26px;background:#1e1e1e;box-sizing:border-box;border:2px solid #111111;"></div>
<span style="left:2552px;top:1441px;font-size:20px;color:#c8c8c8;font-weight:normal;">H</span>
<div style="left:2580px;top:1438px;width:30px;height:26px;background:#1e1e1e;box-sizing:border-box;border:2px solid #111111;"></div>
<span style="left:2586px;top:1441px;font-size:20px;color:#c8c8c8;font-weight:normal;">W</span>
</div></body></html>
